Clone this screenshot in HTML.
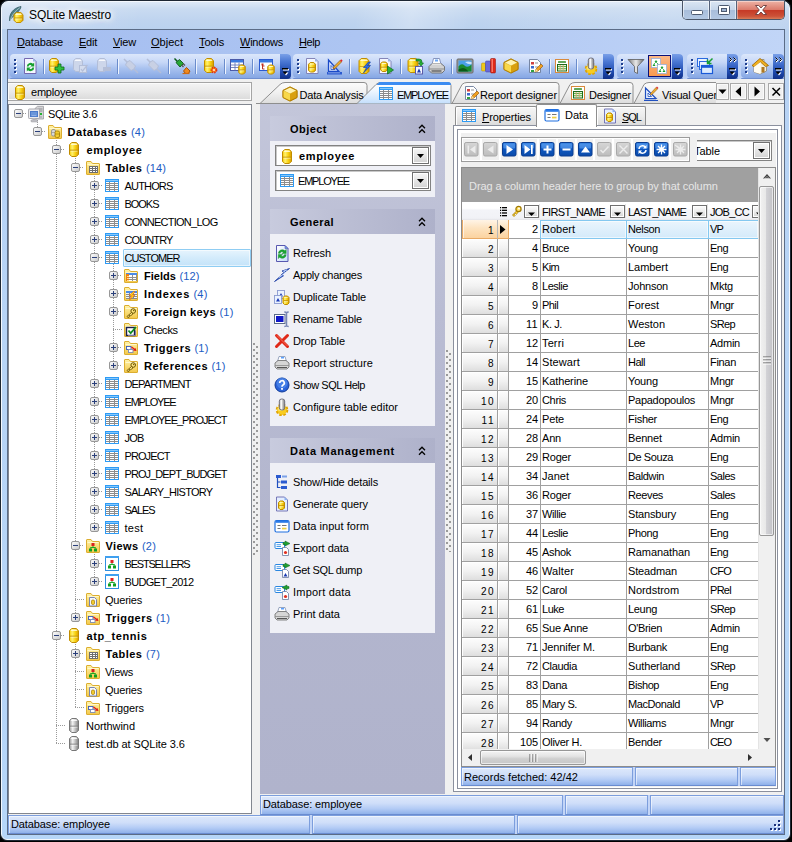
<!DOCTYPE html><html><head><meta charset="utf-8"><title>SQLite Maestro</title><style>
html,body{margin:0;padding:0}
body{width:792px;height:842px;overflow:hidden;position:relative;background:#b9d1ea;font-family:"Liberation Sans",sans-serif;font-size:11px;color:#000}
div,span,svg{position:absolute;box-sizing:border-box}
.t{white-space:nowrap;line-height:14px;height:14px;font-size:11px}
.b{font-weight:bold}
.cnt{color:#1f5fc0;font-weight:normal}
u{text-decoration:underline}

</style></head><body>
<svg width="0" height="0" style="left:0;top:0"><defs><linearGradient id="gd" x1="0" x2="1" y1="0" y2="0"><stop offset="0" stop-color="#f7cc00"/><stop offset=".3" stop-color="#fff170"/><stop offset=".65" stop-color="#f8d010"/><stop offset="1" stop-color="#d99c00"/></linearGradient><linearGradient id="gy" x1="0" x2="1" y1="0" y2="0"><stop offset="0" stop-color="#9a9a9a"/><stop offset=".35" stop-color="#f2f2f2"/><stop offset="1" stop-color="#808080"/></linearGradient><linearGradient id="fo" x1="0" x2="0" y1="0" y2="1"><stop offset="0" stop-color="#fff3a8"/><stop offset="1" stop-color="#f3c84a"/></linearGradient><linearGradient id="ex" x1="0" x2="1" y1="0" y2="1"><stop offset="0" stop-color="#ffffff"/><stop offset="1" stop-color="#c9c9c9"/></linearGradient><linearGradient id="nb" x1="0" x2="0" y1="0" y2="1"><stop offset="0" stop-color="#2f7fe0"/><stop offset=".5" stop-color="#0d56c0"/><stop offset="1" stop-color="#0a4aa8"/></linearGradient><linearGradient id="ng" x1="0" x2="0" y1="0" y2="1"><stop offset="0" stop-color="#d6d6d6"/><stop offset="1" stop-color="#bdbdbd"/></linearGradient></defs></svg>
<div style="left:0px;top:0px;width:792px;height:842px;background:#000;"></div>
<div style="left:0px;top:0px;width:791px;height:841px;background:#1d2733;border-radius:8px 8px 7px 7px;"></div>
<div style="left:1px;top:1px;width:789px;height:839px;border-radius:7px 7px 6px 6px;background:linear-gradient(180deg,#dde9f7 0px,#c9dbf1 7px,#bfd4ef 18px,#b9d1ef 30px,#b7d3f5 120px,#b6d6f8 842px);border:1px solid #f4f8fd;"></div>
<div style="left:2px;top:2px;width:787px;height:27px;border-radius:6px 6px 0 0;background:linear-gradient(100deg,rgba(255,255,255,.25) 0%,rgba(255,255,255,0) 18%,rgba(255,255,255,.0) 45%,rgba(255,255,255,.28) 52%,rgba(255,255,255,0) 60%,rgba(255,255,255,.15) 85%,rgba(255,255,255,.05) 100%);"></div>
<div style="left:7px;top:29px;width:778px;height:806px;background:#f0f0f0;border:1px solid #5b6c86;"></div>
<svg style="left:7px;top:5px" width="18" height="18" viewBox="0 0 18 18" ><path d="M2.500 16 C2 9 6 3 14 1.500 C13.500 5 10 8 6.500 11 C5 12.500 3.500 14 2.500 16z" fill="#4f8088" stroke="#28505a" stroke-width=".7"/><path d="M3 15.500 C5 10 8 6 13 2.500" stroke="#cfe4e6" stroke-width=".6" fill="none"/><path d="M9.2 7.5 H13.8 L16.0 9.7 V15.3 L13.8 17.5 H9.2 L7.0 15.3 V9.7z" fill="url(#gd)" stroke="#c08c00" stroke-width="1" stroke-linejoin="round"/><path d="M9.2 8.5 H13.8 L15.0 10.0 H8.0z" fill="#fffde0" opacity=".85"/><path d="M7.5 13.0 H15.5" stroke="#c08c00" stroke-width=".9"/><path d="M8.0 14.0 H15.0" stroke="#fffde0" stroke-width=".7" opacity=".8"/></svg>
<span class="t" style="left:29px;top:8px;font-size:12px;line-height:15px;height:15px;letter-spacing:-0.1px;text-shadow:0 0 6px #fff,0 0 6px #fff,0 0 10px #fff,0 0 12px #fff;">SQLite Maestro</span>
<div style="left:682px;top:0px;width:103px;height:20px;border:1px solid #4b5668;border-top:1px solid #6a7890;border-radius:0 0 5px 5px;background:#c5d6ea;overflow:hidden;"><div style="left:0px;top:0px;width:27px;height:19px;background:linear-gradient(180deg,#dbe6f3 0%,#c6d6ea 45%,#a9bedb 50%,#b4c9e4 100%);border-right:1px solid #55627a;box-shadow:inset 0 0 0 1px rgba(255,255,255,.55);"></div><div style="left:27px;top:0px;width:27px;height:19px;background:linear-gradient(180deg,#dbe6f3 0%,#c6d6ea 45%,#a9bedb 50%,#b4c9e4 100%);border-right:1px solid #55627a;box-shadow:inset 0 0 0 1px rgba(255,255,255,.55);"></div><div style="left:54px;top:0px;width:48px;height:19px;background:linear-gradient(180deg,#eeb3a6 0%,#dc7c6c 45%,#c63a26 50%,#cc5238 80%,#dc8a62 100%);box-shadow:inset 0 0 0 1px rgba(255,255,255,.4);"></div></div>
<svg style="left:682px;top:0px" width="103" height="20" viewBox="0 0 103 20" ><rect x="9.500" y="10.500" width="11" height="4" rx="1" fill="#fff" stroke="#4d5a70"/><rect x="36.500" y="5.500" width="11" height="9" rx="1" fill="#fff" stroke="#4d5a70"/><rect x="39.500" y="8.500" width="5" height="3" fill="#9fb4d2" stroke="#4d5a70"/><path d="M73.500 5.500 l3.200 0 l2.300 2.500 l2.300-2.500 l3.200 0 l-3.800 4.500 l3.800 4.500 l-3.200 0 l-2.300-2.500 l-2.300 2.500 l-3.200 0 l3.800-4.500z" fill="#fff" stroke="#6a3a3a" stroke-width=".9"/></svg>
<div style="left:8px;top:30px;width:776px;height:24px;background:linear-gradient(90deg,#a5bef0 0%,#adc5f2 45%,#c1d5f7 100%);"></div>
<span class="t" style="left:17px;top:35px;letter-spacing:-0.141px;font-size:11px;"><u>D</u>atabase</span>
<span class="t" style="left:79px;top:35px;letter-spacing:-0.242px;font-size:11px;"><u>E</u>dit</span>
<span class="t" style="left:113px;top:35px;letter-spacing:-0.160px;font-size:11px;"><u>V</u>iew</span>
<span class="t" style="left:151px;top:35px;letter-spacing:0.031px;font-size:11px;"><u>O</u>bject</span>
<span class="t" style="left:199px;top:35px;letter-spacing:-0.138px;font-size:11px;"><u>T</u>ools</span>
<span class="t" style="left:240px;top:35px;letter-spacing:-0.232px;font-size:11px;"><u>W</u>indows</span>
<span class="t" style="left:299px;top:35px;letter-spacing:-0.406px;font-size:11px;"><u>H</u>elp</span>
<div style="left:8px;top:54px;width:776px;height:25px;background:linear-gradient(90deg,#a5bef0 0%,#adc5f2 45%,#c1d5f7 100%);"></div>
<div style="left:10px;top:54px;width:281px;height:24px;background:linear-gradient(180deg,#dce7fb 0%,#c6d7f7 35%,#a9c2ef 60%,#86a7e4 100%);border-radius:4px 4px 4px 4px;"></div>
<div style="left:10px;top:78px;width:281px;height:1px;background:#6f8fd0;border-radius:0 0 3px 3px;"></div>
<div style="left:280px;top:54px;width:11px;height:25px;background:linear-gradient(180deg,#7aa0e8 0%,#4b78d4 30%,#1f4bb0 70%,#0f2f86 100%);border-radius:0 4px 4px 0;"></div>
<svg style="left:282px;top:68px" width="8" height="8" viewBox="0 0 8 8" ><rect x="1" y="1" width="6" height="1.500" fill="#fff"/><path d="M1.500 4.500 h5 l-2.500 3z" fill="#fff"/><rect x="0" y="0" width="6" height="1.500" fill="#000"/><path d="M.500 3.500 h5 l-2.500 3z" fill="#000"/></svg>
<svg style="left:14px;top:59px" width="3" height="16" viewBox="0 0 3 16" ><rect x="1" y="1" width="2" height="2" fill="#fff"/><rect x="0" y="0" width="2" height="2" fill="#1f3f8f"/><rect x="1" y="5" width="2" height="2" fill="#fff"/><rect x="0" y="4" width="2" height="2" fill="#1f3f8f"/><rect x="1" y="9" width="2" height="2" fill="#fff"/><rect x="0" y="8" width="2" height="2" fill="#1f3f8f"/><rect x="1" y="13" width="2" height="2" fill="#fff"/><rect x="0" y="12" width="2" height="2" fill="#1f3f8f"/></svg>
<div style="left:293px;top:54px;width:321px;height:24px;background:linear-gradient(180deg,#dce7fb 0%,#c6d7f7 35%,#a9c2ef 60%,#86a7e4 100%);border-radius:4px 4px 4px 4px;"></div>
<div style="left:293px;top:78px;width:321px;height:1px;background:#6f8fd0;border-radius:0 0 3px 3px;"></div>
<div style="left:603px;top:54px;width:11px;height:25px;background:linear-gradient(180deg,#7aa0e8 0%,#4b78d4 30%,#1f4bb0 70%,#0f2f86 100%);border-radius:0 4px 4px 0;"></div>
<svg style="left:605px;top:68px" width="8" height="8" viewBox="0 0 8 8" ><rect x="1" y="1" width="6" height="1.500" fill="#fff"/><path d="M1.500 4.500 h5 l-2.500 3z" fill="#fff"/><rect x="0" y="0" width="6" height="1.500" fill="#000"/><path d="M.500 3.500 h5 l-2.500 3z" fill="#000"/></svg>
<svg style="left:297px;top:59px" width="3" height="16" viewBox="0 0 3 16" ><rect x="1" y="1" width="2" height="2" fill="#fff"/><rect x="0" y="0" width="2" height="2" fill="#1f3f8f"/><rect x="1" y="5" width="2" height="2" fill="#fff"/><rect x="0" y="4" width="2" height="2" fill="#1f3f8f"/><rect x="1" y="9" width="2" height="2" fill="#fff"/><rect x="0" y="8" width="2" height="2" fill="#1f3f8f"/><rect x="1" y="13" width="2" height="2" fill="#fff"/><rect x="0" y="12" width="2" height="2" fill="#1f3f8f"/></svg>
<div style="left:617px;top:54px;width:66px;height:24px;background:linear-gradient(180deg,#dce7fb 0%,#c6d7f7 35%,#a9c2ef 60%,#86a7e4 100%);border-radius:4px 4px 4px 4px;"></div>
<div style="left:617px;top:78px;width:66px;height:1px;background:#6f8fd0;border-radius:0 0 3px 3px;"></div>
<div style="left:672px;top:54px;width:11px;height:25px;background:linear-gradient(180deg,#7aa0e8 0%,#4b78d4 30%,#1f4bb0 70%,#0f2f86 100%);border-radius:0 4px 4px 0;"></div>
<svg style="left:674px;top:68px" width="8" height="8" viewBox="0 0 8 8" ><rect x="1" y="1" width="6" height="1.500" fill="#fff"/><path d="M1.500 4.500 h5 l-2.500 3z" fill="#fff"/><rect x="0" y="0" width="6" height="1.500" fill="#000"/><path d="M.500 3.500 h5 l-2.500 3z" fill="#000"/></svg>
<svg style="left:621px;top:59px" width="3" height="16" viewBox="0 0 3 16" ><rect x="1" y="1" width="2" height="2" fill="#fff"/><rect x="0" y="0" width="2" height="2" fill="#1f3f8f"/><rect x="1" y="5" width="2" height="2" fill="#fff"/><rect x="0" y="4" width="2" height="2" fill="#1f3f8f"/><rect x="1" y="9" width="2" height="2" fill="#fff"/><rect x="0" y="8" width="2" height="2" fill="#1f3f8f"/><rect x="1" y="13" width="2" height="2" fill="#fff"/><rect x="0" y="12" width="2" height="2" fill="#1f3f8f"/></svg>
<div style="left:687px;top:54px;width:51px;height:24px;background:linear-gradient(180deg,#dce7fb 0%,#c6d7f7 35%,#a9c2ef 60%,#86a7e4 100%);border-radius:4px 4px 4px 4px;"></div>
<div style="left:687px;top:78px;width:51px;height:1px;background:#6f8fd0;border-radius:0 0 3px 3px;"></div>
<div style="left:727px;top:54px;width:11px;height:25px;background:linear-gradient(180deg,#7aa0e8 0%,#4b78d4 30%,#1f4bb0 70%,#0f2f86 100%);border-radius:0 4px 4px 0;"></div>
<svg style="left:729px;top:68px" width="8" height="8" viewBox="0 0 8 8" ><rect x="1" y="1" width="6" height="1.500" fill="#fff"/><path d="M1.500 4.500 h5 l-2.500 3z" fill="#fff"/><rect x="0" y="0" width="6" height="1.500" fill="#000"/><path d="M.500 3.500 h5 l-2.500 3z" fill="#000"/></svg>
<svg style="left:729px;top:57px" width="8" height="7" viewBox="0 0 8 7" ><path d="M1 1 l2 2 l-2 2 M5 1 l2 2 l-2 2" stroke="#fff" stroke-width="1.200" fill="none"/><path d="M0.500 0.500 l2 2 l-2 2 M4.500 .5 l2 2 l-2 2" stroke="#000" stroke-width="1" fill="none"/></svg>
<svg style="left:691px;top:59px" width="3" height="16" viewBox="0 0 3 16" ><rect x="1" y="1" width="2" height="2" fill="#fff"/><rect x="0" y="0" width="2" height="2" fill="#1f3f8f"/><rect x="1" y="5" width="2" height="2" fill="#fff"/><rect x="0" y="4" width="2" height="2" fill="#1f3f8f"/><rect x="1" y="9" width="2" height="2" fill="#fff"/><rect x="0" y="8" width="2" height="2" fill="#1f3f8f"/><rect x="1" y="13" width="2" height="2" fill="#fff"/><rect x="0" y="12" width="2" height="2" fill="#1f3f8f"/></svg>
<div style="left:741px;top:54px;width:43px;height:24px;background:linear-gradient(180deg,#dce7fb 0%,#c6d7f7 35%,#a9c2ef 60%,#86a7e4 100%);border-radius:4px 4px 4px 4px;"></div>
<div style="left:741px;top:78px;width:43px;height:1px;background:#6f8fd0;border-radius:0 0 3px 3px;"></div>
<div style="left:773px;top:54px;width:11px;height:25px;background:linear-gradient(180deg,#7aa0e8 0%,#4b78d4 30%,#1f4bb0 70%,#0f2f86 100%);border-radius:0 4px 4px 0;"></div>
<svg style="left:775px;top:68px" width="8" height="8" viewBox="0 0 8 8" ><rect x="1" y="1" width="6" height="1.500" fill="#fff"/><path d="M1.500 4.500 h5 l-2.500 3z" fill="#fff"/><rect x="0" y="0" width="6" height="1.500" fill="#000"/><path d="M.500 3.500 h5 l-2.500 3z" fill="#000"/></svg>
<svg style="left:775px;top:57px" width="8" height="7" viewBox="0 0 8 7" ><path d="M1 1 l2 2 l-2 2 M5 1 l2 2 l-2 2" stroke="#fff" stroke-width="1.200" fill="none"/><path d="M0.500 0.500 l2 2 l-2 2 M4.500 .5 l2 2 l-2 2" stroke="#000" stroke-width="1" fill="none"/></svg>
<svg style="left:745px;top:59px" width="3" height="16" viewBox="0 0 3 16" ><rect x="1" y="1" width="2" height="2" fill="#fff"/><rect x="0" y="0" width="2" height="2" fill="#1f3f8f"/><rect x="1" y="5" width="2" height="2" fill="#fff"/><rect x="0" y="4" width="2" height="2" fill="#1f3f8f"/><rect x="1" y="9" width="2" height="2" fill="#fff"/><rect x="0" y="8" width="2" height="2" fill="#1f3f8f"/><rect x="1" y="13" width="2" height="2" fill="#fff"/><rect x="0" y="12" width="2" height="2" fill="#1f3f8f"/></svg>
<div style="left:43px;top:59px;width:1px;height:15px;background:#6a8ccc;"></div>
<div style="left:44px;top:59px;width:1px;height:15px;background:#eef4fe;"></div>
<div style="left:117px;top:59px;width:1px;height:15px;background:#6a8ccc;"></div>
<div style="left:118px;top:59px;width:1px;height:15px;background:#eef4fe;"></div>
<div style="left:168px;top:59px;width:1px;height:15px;background:#6a8ccc;"></div>
<div style="left:169px;top:59px;width:1px;height:15px;background:#eef4fe;"></div>
<div style="left:195px;top:59px;width:1px;height:15px;background:#6a8ccc;"></div>
<div style="left:196px;top:59px;width:1px;height:15px;background:#eef4fe;"></div>
<div style="left:224px;top:59px;width:1px;height:15px;background:#6a8ccc;"></div>
<div style="left:225px;top:59px;width:1px;height:15px;background:#eef4fe;"></div>
<div style="left:252px;top:59px;width:1px;height:15px;background:#6a8ccc;"></div>
<div style="left:253px;top:59px;width:1px;height:15px;background:#eef4fe;"></div>
<div style="left:349px;top:59px;width:1px;height:15px;background:#6a8ccc;"></div>
<div style="left:350px;top:59px;width:1px;height:15px;background:#eef4fe;"></div>
<div style="left:400px;top:59px;width:1px;height:15px;background:#6a8ccc;"></div>
<div style="left:401px;top:59px;width:1px;height:15px;background:#eef4fe;"></div>
<div style="left:451px;top:59px;width:1px;height:15px;background:#6a8ccc;"></div>
<div style="left:452px;top:59px;width:1px;height:15px;background:#eef4fe;"></div>
<div style="left:549px;top:59px;width:1px;height:15px;background:#6a8ccc;"></div>
<div style="left:550px;top:59px;width:1px;height:15px;background:#eef4fe;"></div>
<div style="left:576px;top:59px;width:1px;height:15px;background:#6a8ccc;"></div>
<div style="left:577px;top:59px;width:1px;height:15px;background:#eef4fe;"></div>
<svg style="left:22px;top:57px" width="18" height="18" viewBox="0 0 18 18" ><path d="M2.500 1.500 h8.500 l3 3 v12 h-11.500z" fill="#f4f6ff" stroke="#6a5aa8" stroke-width=".9"/><path d="M11 1.500 v3 h3z" fill="#9ab4e8"/><path d="M4.800 9.500 a3.700 3.700 0 0 1 6.200-2.700 l1.200-1.200 v4 h-4 l1.400-1.400 a2 2 0 0 0 -3 1.300z" fill="#18a030"/><path d="M12.200 10.500 a3.700 3.700 0 0 1 -6.200 2.700 l-1.200 1.200 v-4 h4 l-1.400 1.400 a2 2 0 0 0 3 -1.300z" fill="#18a030"/></svg>
<svg style="left:47px;top:57px" width="18" height="18" viewBox="0 0 18 18" ><path d="M4.7 1.5 H9.3 L11.5 3.7 V13.3 L9.3 15.5 H4.7 L2.5 13.3 V3.7z" fill="url(#gd)" stroke="#c08c00" stroke-width="1" stroke-linejoin="round"/><path d="M4.7 2.5 H9.3 L10.5 4.0 H3.5z" fill="#fffde0" opacity=".85"/><path d="M3.0 9.200000000000001 H11.0" stroke="#c08c00" stroke-width=".9"/><path d="M3.5 10.200000000000001 H10.5" stroke="#fffde0" stroke-width=".7" opacity=".8"/><path d="M9 11 h3 v-3 h3 v3 h3 v3 h-3 v3 h-3 v-3 h-3z" fill="#30c040" stroke="#0a6a18" stroke-width=".8" transform="translate(-1,-1)"/></svg>
<svg style="left:71px;top:57px" width="19" height="18" viewBox="0 0 19 18" ><path d="M4.7 1.5 H9.3 L11.5 3.7 V12.3 L9.3 14.5 H4.7 L2.5 12.3 V3.7z" fill="#cdd6ea" stroke="#b3bed8" stroke-width="1" stroke-linejoin="round"/><path d="M4.7 2.5 H9.3 L10.5 4.0 H3.5z" fill="#ffffff" opacity=".85"/><rect x="8.500" y="8.500" width="7" height="7" fill="#d4dcee" stroke="#b3bed8"/><path d="M10 12 l1.500 2 l5-6" stroke="#b3bed8" stroke-width="1.200" fill="none"/></svg>
<svg style="left:95px;top:57px" width="18" height="18" viewBox="0 0 18 18" ><path d="M4.7 1.5 H9.3 L11.5 3.7 V12.3 L9.3 14.5 H4.7 L2.5 12.3 V3.7z" fill="#cdd6ea" stroke="#b3bed8" stroke-width="1" stroke-linejoin="round"/><path d="M4.7 2.5 H9.3 L10.5 4.0 H3.5z" fill="#ffffff" opacity=".85"/><rect x="8.500" y="10.500" width="7" height="3" fill="#b4bed8" stroke="#b3bed8"/></svg>
<svg style="left:122px;top:57px" width="18" height="18" viewBox="0 0 18 18" ><path d="M2 2 l4 4 M16 16 l-4-4" stroke="#b3bed8" stroke-width="1.500"/><path d="M5 5 l3-1.500 l5.500 5.500 l-1.500 3 l-3 1.500 l-5.500-5.500z" fill="#c8d0e4" stroke="#b3bed8" stroke-width="1" transform="rotate(0)"/></svg>
<svg style="left:145px;top:57px" width="18" height="18" viewBox="0 0 18 18" ><path d="M2 2 l4 4 M16 16 l-4-4" stroke="#b3bed8" stroke-width="1.500"/><path d="M5 5 l3-1.500 l5.500 5.500 l-1.500 3 l-3 1.500 l-5.500-5.500z" fill="#c8d0e4" stroke="#b3bed8" stroke-width="1" transform="rotate(0)"/></svg>
<svg style="left:173px;top:57px" width="18" height="18" viewBox="0 0 18 18" ><path d="M1.500 1.500 l3 3" stroke="#0a5a18" stroke-width="1.500"/><path d="M3 5.500 l3.500-3 l4 4 l-3.500 3.500z" fill="#28a838" stroke="#0a5a18" stroke-width=".9"/><path d="M8.500 8 l2 2 M10 6.500 l2 2" stroke="#555" stroke-width="1.300"/><path d="M10.500 14 l3-3.500 l3.500 3.500 l-1.500 2.500 h-3z" fill="#f08a20" stroke="#a04a00" stroke-width=".9"/><path d="M9.500 16.500 h7" stroke="#d06a10" stroke-width="1.200"/></svg>
<svg style="left:201px;top:57px" width="18" height="18" viewBox="0 0 18 18" ><path d="M5.7 1.5 H10.3 L12.5 3.7 V13.3 L10.3 15.5 H5.7 L3.5 13.3 V3.7z" fill="url(#gd)" stroke="#c08c00" stroke-width="1" stroke-linejoin="round"/><path d="M5.7 2.5 H10.3 L11.5 4.0 H4.5z" fill="#fffde0" opacity=".85"/><path d="M4.0 9.200000000000001 H12.0" stroke="#c08c00" stroke-width=".9"/><path d="M4.5 10.200000000000001 H11.5" stroke="#fffde0" stroke-width=".7" opacity=".8"/><circle cx="13" cy="13" r="2.600" fill="#ff7a20" stroke="#e03010" stroke-width="1.600" stroke-dasharray="1.400 1"/><circle cx="13" cy="13" r="1" fill="#fff3d0"/></svg>
<svg style="left:229px;top:57px" width="18" height="18" viewBox="0 0 18 18" ><rect x="1.500" y="2.500" width="13" height="11" fill="#fff" stroke="#4a5aa8"/><rect x="2" y="3" width="12" height="2.500" fill="#3a7ae0"/><path d="M2 8 h12 M2 10.500 h12 M6 5.500 v8 M10 5.500 v8" stroke="#6a7ab8" stroke-width=".9"/><path d="M11.375 8 H14.625 L16.25 9.625 V15.375 L14.625 17 H11.375 L9.75 15.375 V9.625z" fill="url(#gd)" stroke="#c08c00" stroke-width="1" stroke-linejoin="round"/><path d="M11.375 9 H14.625 L15.25 9.925 H10.75z" fill="#fffde0" opacity=".85"/><path d="M10.25 12.95 H15.75" stroke="#c08c00" stroke-width=".9"/><path d="M10.75 13.95 H15.25" stroke="#fffde0" stroke-width=".7" opacity=".8"/></svg>
<svg style="left:258px;top:57px" width="18" height="18" viewBox="0 0 18 18" ><rect x="1.500" y="2.500" width="13" height="11" fill="#fff" stroke="#2a5ad0"/><rect x="2" y="3" width="12" height="2.500" fill="#3a7ae0"/><path d="M4.500 7 v5 h2 M4.500 9 h2" stroke="#c03020" stroke-width="1" fill="none"/><rect x="3.500" y="6.500" width="2" height="2" fill="#c03020"/><path d="M11.375 8 H14.625 L16.25 9.625 V15.375 L14.625 17 H11.375 L9.75 15.375 V9.625z" fill="url(#gd)" stroke="#c08c00" stroke-width="1" stroke-linejoin="round"/><path d="M11.375 9 H14.625 L15.25 9.925 H10.75z" fill="#fffde0" opacity=".85"/><path d="M10.25 12.95 H15.75" stroke="#c08c00" stroke-width=".9"/><path d="M10.75 13.95 H15.25" stroke="#fffde0" stroke-width=".7" opacity=".8"/></svg>
<svg style="left:304px;top:57px" width="18" height="18" viewBox="0 0 18 18" ><path d="M2.500 1.500 h8.500 l3 3 v12 h-11.500z" fill="#f4f6ff" stroke="#7a7ab0" stroke-width=".9"/><path d="M11 1.500 v3 h3z" fill="#9ab4e8"/><path d="M6.25 5.5 H9.75 L11.5 7.25 V13.25 L9.75 15.0 H6.25 L4.5 13.25 V7.25z" fill="url(#gd)" stroke="#c08c00" stroke-width="1" stroke-linejoin="round"/><path d="M6.25 6.5 H9.75 L10.5 7.55 H5.5z" fill="#fffde0" opacity=".85"/><path d="M5.0 10.725000000000001 H11.0" stroke="#c08c00" stroke-width=".9"/><path d="M5.5 11.725000000000001 H10.5" stroke="#fffde0" stroke-width=".7" opacity=".8"/></svg>
<svg style="left:326px;top:57px" width="18" height="18" viewBox="0 0 18 18" ><path d="M2.500 14.500 L2.500 3 L13 14.500z" fill="#dfe8ff" stroke="#1a4ac8" stroke-width="1.300"/><path d="M5 12.500 L5 8.500 L9 12.500z" fill="#fff" stroke="#1a4ac8" stroke-width=".8"/><rect x="1" y="15" width="15" height="2.500" fill="#2a5ad0"/><path d="M3 15 v1.500 M5 15 v1.500 M7 15 v1.500 M9 15 v1.500 M11 15 v1.500 M13 15 v1.500" stroke="#fff" stroke-width=".6"/><path d="M7.500 10 L14 3.500 L15.500 5 L9 11.500 L7 12z" fill="#f0b030" stroke="#7a4000" stroke-width=".6"/><path d="M14 3.500 l1.200-1.200 l1.500 1.500 l-1.200 1.200z" fill="#e02828"/></svg>
<svg style="left:356px;top:57px" width="18" height="18" viewBox="0 0 18 18" ><path d="M5.2 1.5 H10.8 L13.0 3.7 V14.3 L10.8 16.5 H5.2 L3.0 14.3 V3.7z" fill="url(#gd)" stroke="#c08c00" stroke-width="1" stroke-linejoin="round"/><path d="M5.2 2.5 H10.8 L12.0 4.0 H4.0z" fill="#fffde0" opacity=".85"/><path d="M3.5 9.75 H12.5" stroke="#c08c00" stroke-width=".9"/><path d="M4.0 10.75 H12.0" stroke="#fffde0" stroke-width=".7" opacity=".8"/><path d="M12.500 5 l-5 5.500 h3 l-3 5.500 l7-7.500 h-3 l3-3.500z" fill="#2a6ae8" stroke="#0a3aa0" stroke-width=".6"/></svg>
<svg style="left:377px;top:57px" width="18" height="18" viewBox="0 0 18 18" ><path d="M2.500 1.500 h8.500 l3 3 v12 h-11.500z" fill="#f4f6ff" stroke="#7a7ab0" stroke-width=".9"/><path d="M11 1.500 v3 h3z" fill="#9ab4e8"/><path d="M5.25 5 H8.75 L10.5 6.75 V12.75 L8.75 14.5 H5.25 L3.5 12.75 V6.75z" fill="url(#gd)" stroke="#c08c00" stroke-width="1" stroke-linejoin="round"/><path d="M5.25 6 H8.75 L9.5 7.05 H4.5z" fill="#fffde0" opacity=".85"/><path d="M4.0 10.225000000000001 H10.0" stroke="#c08c00" stroke-width=".9"/><path d="M4.5 11.225000000000001 H9.5" stroke="#fffde0" stroke-width=".7" opacity=".8"/><path d="M10.500 9 v8 l6-4z" fill="#28b038" stroke="#0a6a18" stroke-width=".7"/></svg>
<svg style="left:406px;top:57px" width="18" height="18" viewBox="0 0 18 18" ><path d="M4.2 1.5 H9.8 L12.0 3.7 V13.3 L9.8 15.5 H4.2 L2.0 13.3 V3.7z" fill="url(#gd)" stroke="#c08c00" stroke-width="1" stroke-linejoin="round"/><path d="M4.2 2.5 H9.8 L11.0 4.0 H3.0z" fill="#fffde0" opacity=".85"/><path d="M2.5 9.200000000000001 H11.5" stroke="#c08c00" stroke-width=".9"/><path d="M3.0 10.200000000000001 H11.0" stroke="#fffde0" stroke-width=".7" opacity=".8"/><path d="M10 2 h3 q3 0 3 3 v1 h1.500 l-2.500 3 l-2.500-3 h1.500 v-1 q0-1 -1-1 h-3z" fill="#28b038" stroke="#0a6a18" stroke-width=".6"/><rect x="9.500" y="9.500" width="7" height="7.500" fill="#f4f6ff" stroke="#5a5aa8"/><path d="M11 15.500 l2-4 l2 4z" fill="#1a3ab0"/></svg>
<svg style="left:428px;top:57px" width="18" height="18" viewBox="0 0 18 18" ><path d="M5.500 1.500 h6 l1.500 6 h-9z" fill="#fff" stroke="#7a8ab8" stroke-width=".9"/><rect x="7" y="2.500" width="3" height="2" fill="#6aa8f8"/><path d="M1 9.500 l3-3 h9 l3.500 3 v4 l-2.500 2.500 h-10.500 l-2.500-2.500z" fill="#d2d2d2" stroke="#6a6a6a" stroke-width=".9"/><path d="M1 12 h15.500" stroke="#8a8a8a"/><path d="M3.500 14 h10" stroke="#4a4a4a" stroke-width="1.200"/><path d="M4 7 h9" stroke="#f4f4f4" stroke-width="1"/></svg>
<svg style="left:456px;top:57px" width="18" height="18" viewBox="0 0 18 18" ><rect x="1" y="2" width="16" height="14" rx="1" fill="#9a9a9a" stroke="#6a6a6a"/><rect x="2.500" y="3.500" width="13" height="11" fill="#4aa0e8"/><path d="M2.500 14.500 v-5 q3-4 6-1 q3 3 7-1 v7z" fill="#1a8a30"/><path d="M2.500 14.500 v-2 q5-3 8 0 l2 2z" fill="#0a5a18"/><path d="M9 5 q3-1 6.500 0 v2 q-3 1-6.500-2z" fill="#e8f4ff" opacity=".8"/></svg>
<svg style="left:480px;top:57px" width="18" height="18" viewBox="0 0 18 18" ><rect x="1.500" y="6" width="4" height="8" rx="1" fill="#f0c818" stroke="#b08800" stroke-width=".5"/><rect x="5.500" y="4" width="5" height="11" rx="1" fill="#6a6ad8" stroke="#3a3aa0" stroke-width=".5"/><rect x="10.500" y="1.500" width="5" height="14.500" rx="1" fill="#e02818" stroke="#900800" stroke-width=".5"/><rect x="11.500" y="2" width="1.500" height="13" fill="#f87868"/></svg>
<svg style="left:503px;top:58px" width="16" height="16" viewBox="0 0 16 16" ><path d="M8 1 L15 4.500 L15 11.500 L8 15 L1 11.500 L1 4.500z" fill="#f2c21a" stroke="#b07c00" stroke-width=".9"/><path d="M8 1 L15 4.500 L8 8 L1 4.500z" fill="#fff3b0" stroke="#c89a10" stroke-width=".6"/><path d="M8 8 L8 15 L1 11.500 L1 4.500z" fill="#f8d84a"/><path d="M8 8 L8 15 L15 11.500 L15 4.500z" fill="#d9a010"/><path d="M8 1 L15 4.500 L15 11.500 L8 15 L1 11.500 L1 4.500z" fill="none" stroke="#b07c00" stroke-width=".9"/></svg>
<svg style="left:527px;top:58px" width="17" height="16" viewBox="0 0 17 16" ><path d="M2.500 1.500 h8 l3 3 v10 h-11z" fill="#fff" stroke="#6a7a9a" stroke-width=".9"/><rect x="4" y="4" width="3" height="2.500" fill="#d04040"/><rect x="4" y="8" width="3" height="2.500" fill="#3a6ad0"/><rect x="4" y="12" width="3" height="2" fill="#30a040"/><path d="M8 5 h3 M8 9 h3" stroke="#888" stroke-width=".9"/><path d="M8 14 l1-3 l5-5 l2 2 l-5 5z" fill="#f0a020" stroke="#905000" stroke-width=".6"/><path d="M8 14 l1-3 l2 2z" fill="#f8e0a0"/></svg>
<svg style="left:554px;top:58px" width="16" height="16" viewBox="0 0 16 16" ><rect x="1.500" y="1.500" width="13" height="13" fill="#fff" stroke="#d98a3c"/><rect x="4" y="3.200" width="8" height="1.600" rx=".5" fill="#2e8a24"/><rect x="3.500" y="6.500" width="9" height="6.500" fill="#e4f6dc" stroke="#1f6a1c"/><path d="M4 8.500 h8 M4 10.700 h8" stroke="#58b048" stroke-width="1"/><path d="M6.200 7 v5.500 M9.200 7 v5.500" stroke="#e0a070" stroke-width=".9"/></svg>
<svg style="left:582px;top:57px" width="18" height="18" viewBox="0 0 18 18" ><circle cx="9" cy="12" r="4.800" fill="#f4c010" stroke="#e0a400" stroke-width="3" stroke-dasharray="2.300 1.480"/><circle cx="9" cy="12" r="4.600" fill="#f8cc20"/><ellipse cx="7.500" cy="11" rx="3" ry="2" fill="#ffe870" opacity=".8"/><rect x="6.300" y="1" width="5.400" height="11" rx="2.300" fill="url(#gy)" stroke="#6a6a78" stroke-width=".9"/><rect x="7.600" y="2" width="1.300" height="9" fill="#fafafa" opacity=".9"/></svg>
<svg style="left:627px;top:57px" width="18" height="18" viewBox="0 0 18 18" ><defs><linearGradient id="fn" x1="0" x2="1"><stop offset="0" stop-color="#7a7a7a"/><stop offset=".5" stop-color="#e8e8e8"/><stop offset="1" stop-color="#6a6a6a"/></linearGradient></defs><path d="M1 2.500 h16 l-6.500 7 v7 l-3-1.500 v-5.500z" fill="url(#fn)" stroke="#5a5a5a" stroke-width=".8"/></svg>
<div style="left:648px;top:55px;width:23px;height:22px;background:linear-gradient(180deg,#fbb888 0%,#f9a868 50%,#f79a50 100%);border:1px solid #0a1078;"></div>
<svg style="left:651px;top:58px" width="18" height="18" viewBox="0 0 18 18" ><rect x="0.5" y="0.5" width="9" height="9" fill="#fff" stroke="#9ab0d8" stroke-width=".8"/><path d="M5 2 l1.500 2 h-3z" fill="#18a030"/><path d="M3 5.5 l1.500 2.500 h-3z M7 5.5 l1.500 2.500 h-3z" fill="#18a030"/><path d="M5 4 l-2 2 M5 4 l2 2" stroke="#18a030" stroke-width=".7"/><rect x="6.5" y="6.5" width="9" height="9" fill="#fff" stroke="#9ab0d8" stroke-width=".8"/><path d="M11 8 l1.500 2 h-3z" fill="#18a030"/><path d="M9 11.5 l1.500 2.500 h-3z M13 11.5 l1.500 2.500 h-3z" fill="#18a030"/><path d="M11 10 l-2 2 M11 10 l2 2" stroke="#18a030" stroke-width=".7"/></svg>
<svg style="left:696px;top:57px" width="19" height="18" viewBox="0 0 19 18" ><rect x="1.500" y="1.500" width="10" height="8" fill="#eaf2ff" stroke="#2a6ae0"/><rect x="3.500" y="4.500" width="10" height="8" fill="#eaf2ff" stroke="#2a6ae0"/><rect x="5.500" y="8.500" width="11" height="8" fill="#dceafe" stroke="#1a5ad8" stroke-width="1.200"/><rect x="6" y="9" width="10" height="1.800" fill="#1a5ad8"/><path d="M16.500 1.500 l-4.500 4.500 M11.500 2.500 v4 h4" stroke="#18a030" stroke-width="1.500" fill="none"/></svg>
<svg style="left:751px;top:57px" width="19" height="18" viewBox="0 0 19 18" ><path d="M9 2 L1.500 8.500 L3 10 L3 15 L9 17 L15.500 14 L15.500 9.500 L17 8.500 L13 4.500 L13 2.500 L11 2.500 L11 3.500z" fill="#f4f0e0" stroke="#8a7a5a" stroke-width=".7"/><path d="M9 1.500 L1 8.500 L3.500 10 L9.500 5 L14.500 9.500 L17.500 8.500z" fill="#f0b020" stroke="#a06800" stroke-width=".8"/><path d="M9.500 5 L3 10 L3 15 L9.500 17z" fill="#fffcf0"/><rect x="10.500" y="10" width="3" height="5.500" fill="#b07820"/></svg>
<div style="left:8px;top:82px;width:244px;height:19px;border:1px solid #a5a5a5;border-left:none;background:linear-gradient(180deg,#f4f4f4 0%,#e9e9e9 50%,#dadada 100%);box-shadow:inset 0 0 0 1px #fbfbfb;"></div>
<svg style="left:12px;top:84px" width="16" height="17" viewBox="0 0 16 17" ><path d="M5.7 1.5 H10.3 L12.5 3.7 V13.3 L10.3 15.5 H5.7 L3.5 13.3 V3.7z" fill="url(#gd)" stroke="#c08c00" stroke-width="1" stroke-linejoin="round"/><path d="M5.7 2.5 H10.3 L11.5 4.0 H4.5z" fill="#fffde0" opacity=".85"/><path d="M4.0 9.200000000000001 H12.0" stroke="#c08c00" stroke-width=".9"/><path d="M4.5 10.200000000000001 H11.5" stroke="#fffde0" stroke-width=".7" opacity=".8"/></svg>
<span class="t" style="left:31px;top:85px;letter-spacing:-0.215px;font-size:11px;">employee</span>
<div style="left:8px;top:815px;width:776px;height:19px;background:#c3d5f7;"></div>
<div style="left:8px;top:815px;width:302px;height:19px;background:linear-gradient(180deg,#dde8fb 0%,#cfdef9 40%,#b3cbf5 70%,#8fb1ea 100%);border:1px solid #7c9edd;border-bottom-color:#6a8cd0;box-shadow:inset 1px 1px 0 rgba(255,255,255,.55);"></div>
<div style="left:312px;top:815px;width:203px;height:19px;background:linear-gradient(180deg,#dde8fb 0%,#cfdef9 40%,#b3cbf5 70%,#8fb1ea 100%);border:1px solid #7c9edd;border-bottom-color:#6a8cd0;box-shadow:inset 1px 1px 0 rgba(255,255,255,.55);"></div>
<div style="left:517px;top:815px;width:267px;height:19px;background:linear-gradient(180deg,#dde8fb 0%,#cfdef9 40%,#b3cbf5 70%,#8fb1ea 100%);border:1px solid #7c9edd;border-bottom-color:#6a8cd0;box-shadow:inset 1px 1px 0 rgba(255,255,255,.55);"></div>
<span class="t" style="left:11px;top:817px;letter-spacing:-0.109px;font-size:11px;">Database: employee</span>
<svg style="left:770px;top:820px" width="12" height="12" viewBox="0 0 12 12" ><rect x="9" y="1" width="2" height="2" fill="#fff"/><rect x="8" y="0" width="2" height="2" fill="#1a2f7a"/><rect x="5" y="5" width="2" height="2" fill="#fff"/><rect x="4" y="4" width="2" height="2" fill="#1a2f7a"/><rect x="9" y="5" width="2" height="2" fill="#fff"/><rect x="8" y="4" width="2" height="2" fill="#1a2f7a"/><rect x="1" y="9" width="2" height="2" fill="#fff"/><rect x="0" y="8" width="2" height="2" fill="#1a2f7a"/><rect x="5" y="9" width="2" height="2" fill="#fff"/><rect x="4" y="8" width="2" height="2" fill="#1a2f7a"/><rect x="9" y="9" width="2" height="2" fill="#fff"/><rect x="8" y="8" width="2" height="2" fill="#1a2f7a"/></svg>
<div style="left:8px;top:104px;width:244px;height:710px;background:#fff;border:1px solid #828790;"></div>
<div style="left:23px;top:113px;width:4px;height:1px;background:repeating-linear-gradient(90deg,#9a9a9a 0 1px,transparent 1px 2px);"></div>
<div style="left:37px;top:120px;width:1px;height:11px;background:repeating-linear-gradient(180deg,#9a9a9a 0 1px,transparent 1px 2px);"></div>
<div style="left:42px;top:131px;width:4px;height:1px;background:repeating-linear-gradient(90deg,#9a9a9a 0 1px,transparent 1px 2px);"></div>
<div style="left:56px;top:138px;width:1px;height:605px;background:repeating-linear-gradient(180deg,#9a9a9a 0 1px,transparent 1px 2px);"></div>
<div style="left:61px;top:149px;width:4px;height:1px;background:repeating-linear-gradient(90deg,#9a9a9a 0 1px,transparent 1px 2px);"></div>
<div style="left:75px;top:156px;width:1px;height:461px;background:repeating-linear-gradient(180deg,#9a9a9a 0 1px,transparent 1px 2px);"></div>
<div style="left:80px;top:167px;width:4px;height:1px;background:repeating-linear-gradient(90deg,#9a9a9a 0 1px,transparent 1px 2px);"></div>
<div style="left:94px;top:174px;width:1px;height:353px;background:repeating-linear-gradient(180deg,#9a9a9a 0 1px,transparent 1px 2px);"></div>
<div style="left:99px;top:185px;width:4px;height:1px;background:repeating-linear-gradient(90deg,#9a9a9a 0 1px,transparent 1px 2px);"></div>
<div style="left:99px;top:203px;width:4px;height:1px;background:repeating-linear-gradient(90deg,#9a9a9a 0 1px,transparent 1px 2px);"></div>
<div style="left:99px;top:221px;width:4px;height:1px;background:repeating-linear-gradient(90deg,#9a9a9a 0 1px,transparent 1px 2px);"></div>
<div style="left:99px;top:239px;width:4px;height:1px;background:repeating-linear-gradient(90deg,#9a9a9a 0 1px,transparent 1px 2px);"></div>
<div style="left:99px;top:257px;width:4px;height:1px;background:repeating-linear-gradient(90deg,#9a9a9a 0 1px,transparent 1px 2px);"></div>
<div style="left:113px;top:264px;width:1px;height:101px;background:repeating-linear-gradient(180deg,#9a9a9a 0 1px,transparent 1px 2px);"></div>
<div style="left:118px;top:275px;width:4px;height:1px;background:repeating-linear-gradient(90deg,#9a9a9a 0 1px,transparent 1px 2px);"></div>
<div style="left:118px;top:293px;width:4px;height:1px;background:repeating-linear-gradient(90deg,#9a9a9a 0 1px,transparent 1px 2px);"></div>
<div style="left:118px;top:311px;width:4px;height:1px;background:repeating-linear-gradient(90deg,#9a9a9a 0 1px,transparent 1px 2px);"></div>
<div style="left:113px;top:329px;width:9px;height:1px;background:repeating-linear-gradient(90deg,#9a9a9a 0 1px,transparent 1px 2px);"></div>
<div style="left:118px;top:347px;width:4px;height:1px;background:repeating-linear-gradient(90deg,#9a9a9a 0 1px,transparent 1px 2px);"></div>
<div style="left:118px;top:365px;width:4px;height:1px;background:repeating-linear-gradient(90deg,#9a9a9a 0 1px,transparent 1px 2px);"></div>
<div style="left:99px;top:383px;width:4px;height:1px;background:repeating-linear-gradient(90deg,#9a9a9a 0 1px,transparent 1px 2px);"></div>
<div style="left:99px;top:401px;width:4px;height:1px;background:repeating-linear-gradient(90deg,#9a9a9a 0 1px,transparent 1px 2px);"></div>
<div style="left:99px;top:419px;width:4px;height:1px;background:repeating-linear-gradient(90deg,#9a9a9a 0 1px,transparent 1px 2px);"></div>
<div style="left:99px;top:437px;width:4px;height:1px;background:repeating-linear-gradient(90deg,#9a9a9a 0 1px,transparent 1px 2px);"></div>
<div style="left:99px;top:455px;width:4px;height:1px;background:repeating-linear-gradient(90deg,#9a9a9a 0 1px,transparent 1px 2px);"></div>
<div style="left:99px;top:473px;width:4px;height:1px;background:repeating-linear-gradient(90deg,#9a9a9a 0 1px,transparent 1px 2px);"></div>
<div style="left:99px;top:491px;width:4px;height:1px;background:repeating-linear-gradient(90deg,#9a9a9a 0 1px,transparent 1px 2px);"></div>
<div style="left:99px;top:509px;width:4px;height:1px;background:repeating-linear-gradient(90deg,#9a9a9a 0 1px,transparent 1px 2px);"></div>
<div style="left:99px;top:527px;width:4px;height:1px;background:repeating-linear-gradient(90deg,#9a9a9a 0 1px,transparent 1px 2px);"></div>
<div style="left:80px;top:545px;width:4px;height:1px;background:repeating-linear-gradient(90deg,#9a9a9a 0 1px,transparent 1px 2px);"></div>
<div style="left:94px;top:552px;width:1px;height:29px;background:repeating-linear-gradient(180deg,#9a9a9a 0 1px,transparent 1px 2px);"></div>
<div style="left:99px;top:563px;width:4px;height:1px;background:repeating-linear-gradient(90deg,#9a9a9a 0 1px,transparent 1px 2px);"></div>
<div style="left:99px;top:581px;width:4px;height:1px;background:repeating-linear-gradient(90deg,#9a9a9a 0 1px,transparent 1px 2px);"></div>
<div style="left:75px;top:599px;width:9px;height:1px;background:repeating-linear-gradient(90deg,#9a9a9a 0 1px,transparent 1px 2px);"></div>
<div style="left:80px;top:617px;width:4px;height:1px;background:repeating-linear-gradient(90deg,#9a9a9a 0 1px,transparent 1px 2px);"></div>
<div style="left:61px;top:635px;width:4px;height:1px;background:repeating-linear-gradient(90deg,#9a9a9a 0 1px,transparent 1px 2px);"></div>
<div style="left:75px;top:642px;width:1px;height:65px;background:repeating-linear-gradient(180deg,#9a9a9a 0 1px,transparent 1px 2px);"></div>
<div style="left:80px;top:653px;width:4px;height:1px;background:repeating-linear-gradient(90deg,#9a9a9a 0 1px,transparent 1px 2px);"></div>
<div style="left:75px;top:671px;width:9px;height:1px;background:repeating-linear-gradient(90deg,#9a9a9a 0 1px,transparent 1px 2px);"></div>
<div style="left:75px;top:689px;width:9px;height:1px;background:repeating-linear-gradient(90deg,#9a9a9a 0 1px,transparent 1px 2px);"></div>
<div style="left:75px;top:707px;width:9px;height:1px;background:repeating-linear-gradient(90deg,#9a9a9a 0 1px,transparent 1px 2px);"></div>
<div style="left:56px;top:725px;width:9px;height:1px;background:repeating-linear-gradient(90deg,#9a9a9a 0 1px,transparent 1px 2px);"></div>
<div style="left:56px;top:743px;width:9px;height:1px;background:repeating-linear-gradient(90deg,#9a9a9a 0 1px,transparent 1px 2px);"></div>
<div style="left:123px;top:249px;width:128px;height:18px;border:1px solid #8fcdf3;border-radius:1px;background:linear-gradient(180deg,#e6f4fd 0%,#d3ebfb 50%,#c4e3f9 100%);box-shadow:inset 0 0 0 1px rgba(255,255,255,.55);"></div>
<svg style="left:14px;top:109px" width="9" height="9" viewBox="0 0 9 9" ><rect x=".5" y=".5" width="8" height="8" rx="1.500" fill="url(#ex)" stroke="#979797"/><rect x="2" y="4" width="5" height="1" fill="#2a3f7a"/></svg>
<svg style="left:28px;top:105px" width="16" height="18" viewBox="0 0 16 18" ><path d="M7 3.500 L9.500 1.300 H15.500 V14 H7z" fill="#d4d4d6" stroke="#9a9aa0" stroke-width=".8"/><rect x="10.500" y="3.500" width="4" height="1" fill="#8c8c92"/><rect x="10.500" y="5.500" width="4" height="1" fill="#8c8c92"/><rect x="12" y="8" width="2" height="2" fill="#22b030"/><rect x="12" y="11" width="2" height="2" fill="#b8b8c0"/><rect x=".5" y="4" width="11" height="9.500" rx=".8" fill="#ececee" stroke="#a4a4aa" stroke-width=".9"/><rect x="2" y="6" width="8" height="6" fill="#4a7aca"/><rect x="3" y="7" width="6" height="3.500" fill="#6a96da"/><rect x="3.500" y="10.300" width="5" height=".8" fill="#a8c4ee"/><rect x="4.500" y="13.500" width="3" height="1.800" fill="#c4c4c8"/><rect x="3" y="15" width="6.500" height="1.800" rx=".8" fill="#d8d8dc" stroke="#8e8e94" stroke-width=".7"/></svg>
<span class="t" style="left:48px;top:107px;letter-spacing:-0.303px;">SQLite 3.6</span>
<svg style="left:33px;top:127px" width="9" height="9" viewBox="0 0 9 9" ><rect x=".5" y=".5" width="8" height="8" rx="1.500" fill="url(#ex)" stroke="#979797"/><rect x="2" y="4" width="5" height="1" fill="#2a3f7a"/></svg>
<svg style="left:47px;top:123px" width="16" height="17" viewBox="0 0 16 17" ><path d="M1.5 3 q0-.5 .5-.5 h4 l1.500 2 h6.500 q.5 0 .5 .5 v10 q0 .5 -.5 .5 h-12 q-.5 0 -.5-.5z" fill="url(#fo)" stroke="#dcae30"/><path d="M2.5 5.500 h11" stroke="#fff8cc" stroke-width="1" fill="none"/><rect x="4.500" y="6.500" width="4" height="6.500" rx="1.500" fill="#d8d8d8" stroke="#8a8a8a" stroke-width=".8"/><path d="M4.500 9.500 h4" stroke="#8a8a8a" stroke-width=".6"/><rect x="8" y="8" width="4.500" height="6.500" rx="1.500" fill="#f2cc30" stroke="#a07800" stroke-width=".8"/><path d="M8 11 h4.500" stroke="#a07800" stroke-width=".6"/></svg>
<span class="t b" style="left:67.5px;top:125px;letter-spacing:0.549px;">Databases</span>
<span class="t" style="left:131.0px;top:125px;letter-spacing:0.188px;color:#1c5cc4;">(4)</span>
<svg style="left:52px;top:145px" width="9" height="9" viewBox="0 0 9 9" ><rect x=".5" y=".5" width="8" height="8" rx="1.500" fill="url(#ex)" stroke="#979797"/><rect x="2" y="4" width="5" height="1" fill="#2a3f7a"/></svg>
<svg style="left:66px;top:141px" width="16" height="17" viewBox="0 0 16 17" ><path d="M5.7 1.5 H10.3 L12.5 3.7 V13.3 L10.3 15.5 H5.7 L3.5 13.3 V3.7z" fill="url(#gd)" stroke="#c08c00" stroke-width="1" stroke-linejoin="round"/><path d="M5.7 2.5 H10.3 L11.5 4.0 H4.5z" fill="#fffde0" opacity=".85"/><path d="M4.0 9.200000000000001 H12.0" stroke="#c08c00" stroke-width=".9"/><path d="M4.5 10.200000000000001 H11.5" stroke="#fffde0" stroke-width=".7" opacity=".8"/></svg>
<span class="t b" style="left:86.5px;top:143px;letter-spacing:0.652px;">employee</span>
<svg style="left:71px;top:163px" width="9" height="9" viewBox="0 0 9 9" ><rect x=".5" y=".5" width="8" height="8" rx="1.500" fill="url(#ex)" stroke="#979797"/><rect x="2" y="4" width="5" height="1" fill="#2a3f7a"/></svg>
<svg style="left:85px;top:159px" width="16" height="17" viewBox="0 0 16 17" ><path d="M1.5 3 q0-.5 .5-.5 h4 l1.500 2 h6.500 q.5 0 .5 .5 v10 q0 .5 -.5 .5 h-12 q-.5 0 -.5-.5z" fill="url(#fo)" stroke="#dcae30"/><path d="M2.5 5.500 h11" stroke="#fff8cc" stroke-width="1" fill="none"/><g shape-rendering="crispEdges"><rect x="4" y="7" width="9" height="7" fill="#6e6e6e"/><rect x="5" y="8" width="2" height="1" fill="#fff"/><rect x="8" y="8" width="2" height="1" fill="#fff"/><rect x="11" y="8" width="1" height="1" fill="#fff"/><rect x="5" y="10" width="2" height="1" fill="#fff"/><rect x="8" y="10" width="2" height="1" fill="#fff"/><rect x="11" y="10" width="1" height="1" fill="#fff"/><rect x="5" y="12" width="2" height="1" fill="#fff"/><rect x="8" y="12" width="2" height="1" fill="#fff"/><rect x="11" y="12" width="1" height="1" fill="#fff"/></g></svg>
<span class="t b" style="left:105.5px;top:161px;letter-spacing:0.490px;">Tables</span>
<span class="t" style="left:146.0px;top:161px;letter-spacing:0.109px;color:#1c5cc4;">(14)</span>
<svg style="left:90px;top:181px" width="9" height="9" viewBox="0 0 9 9" ><rect x=".5" y=".5" width="8" height="8" rx="1.500" fill="url(#ex)" stroke="#979797"/><rect x="2" y="4" width="5" height="1" fill="#2a3f7a"/><rect x="4" y="2" width="1" height="5" fill="#2a3f7a"/></svg>
<svg style="left:104px;top:177px" width="16" height="16" viewBox="0 0 16 16" ><g shape-rendering="crispEdges"><rect x="1" y="2" width="14" height="13" fill="#2d9bf5"/><rect x="2" y="3" width="12" height="1" fill="#86c6fa"/><rect x="2" y="5" width="12" height="9" fill="#8c8c8c"/><rect x="2" y="5" width="3" height="1" fill="#fff"/><rect x="6" y="5" width="4" height="1" fill="#fff"/><rect x="11" y="5" width="3" height="1" fill="#fff"/><rect x="2" y="7" width="3" height="1" fill="#fff"/><rect x="6" y="7" width="4" height="1" fill="#fff"/><rect x="11" y="7" width="3" height="1" fill="#fff"/><rect x="2" y="9" width="3" height="1" fill="#fff"/><rect x="6" y="9" width="4" height="1" fill="#fff"/><rect x="11" y="9" width="3" height="1" fill="#fff"/><rect x="2" y="11" width="3" height="1" fill="#fff"/><rect x="6" y="11" width="4" height="1" fill="#fff"/><rect x="11" y="11" width="3" height="1" fill="#fff"/><rect x="2" y="13" width="3" height="1" fill="#fff"/><rect x="6" y="13" width="4" height="1" fill="#fff"/><rect x="11" y="13" width="3" height="1" fill="#fff"/></g></svg>
<span class="t" style="left:124.5px;top:179px;letter-spacing:-0.826px;">AUTHORS</span>
<svg style="left:90px;top:199px" width="9" height="9" viewBox="0 0 9 9" ><rect x=".5" y=".5" width="8" height="8" rx="1.500" fill="url(#ex)" stroke="#979797"/><rect x="2" y="4" width="5" height="1" fill="#2a3f7a"/><rect x="4" y="2" width="1" height="5" fill="#2a3f7a"/></svg>
<svg style="left:104px;top:195px" width="16" height="16" viewBox="0 0 16 16" ><g shape-rendering="crispEdges"><rect x="1" y="2" width="14" height="13" fill="#2d9bf5"/><rect x="2" y="3" width="12" height="1" fill="#86c6fa"/><rect x="2" y="5" width="12" height="9" fill="#8c8c8c"/><rect x="2" y="5" width="3" height="1" fill="#fff"/><rect x="6" y="5" width="4" height="1" fill="#fff"/><rect x="11" y="5" width="3" height="1" fill="#fff"/><rect x="2" y="7" width="3" height="1" fill="#fff"/><rect x="6" y="7" width="4" height="1" fill="#fff"/><rect x="11" y="7" width="3" height="1" fill="#fff"/><rect x="2" y="9" width="3" height="1" fill="#fff"/><rect x="6" y="9" width="4" height="1" fill="#fff"/><rect x="11" y="9" width="3" height="1" fill="#fff"/><rect x="2" y="11" width="3" height="1" fill="#fff"/><rect x="6" y="11" width="4" height="1" fill="#fff"/><rect x="11" y="11" width="3" height="1" fill="#fff"/><rect x="2" y="13" width="3" height="1" fill="#fff"/><rect x="6" y="13" width="4" height="1" fill="#fff"/><rect x="11" y="13" width="3" height="1" fill="#fff"/></g></svg>
<span class="t" style="left:124.5px;top:197px;letter-spacing:-1.031px;">BOOKS</span>
<svg style="left:90px;top:217px" width="9" height="9" viewBox="0 0 9 9" ><rect x=".5" y=".5" width="8" height="8" rx="1.500" fill="url(#ex)" stroke="#979797"/><rect x="2" y="4" width="5" height="1" fill="#2a3f7a"/><rect x="4" y="2" width="1" height="5" fill="#2a3f7a"/></svg>
<svg style="left:104px;top:213px" width="16" height="16" viewBox="0 0 16 16" ><g shape-rendering="crispEdges"><rect x="1" y="2" width="14" height="13" fill="#2d9bf5"/><rect x="2" y="3" width="12" height="1" fill="#86c6fa"/><rect x="2" y="5" width="12" height="9" fill="#8c8c8c"/><rect x="2" y="5" width="3" height="1" fill="#fff"/><rect x="6" y="5" width="4" height="1" fill="#fff"/><rect x="11" y="5" width="3" height="1" fill="#fff"/><rect x="2" y="7" width="3" height="1" fill="#fff"/><rect x="6" y="7" width="4" height="1" fill="#fff"/><rect x="11" y="7" width="3" height="1" fill="#fff"/><rect x="2" y="9" width="3" height="1" fill="#fff"/><rect x="6" y="9" width="4" height="1" fill="#fff"/><rect x="11" y="9" width="3" height="1" fill="#fff"/><rect x="2" y="11" width="3" height="1" fill="#fff"/><rect x="6" y="11" width="4" height="1" fill="#fff"/><rect x="11" y="11" width="3" height="1" fill="#fff"/><rect x="2" y="13" width="3" height="1" fill="#fff"/><rect x="6" y="13" width="4" height="1" fill="#fff"/><rect x="11" y="13" width="3" height="1" fill="#fff"/></g></svg>
<span class="t" style="left:124.5px;top:215px;letter-spacing:-0.737px;">CONNECTION_LOG</span>
<svg style="left:90px;top:235px" width="9" height="9" viewBox="0 0 9 9" ><rect x=".5" y=".5" width="8" height="8" rx="1.500" fill="url(#ex)" stroke="#979797"/><rect x="2" y="4" width="5" height="1" fill="#2a3f7a"/><rect x="4" y="2" width="1" height="5" fill="#2a3f7a"/></svg>
<svg style="left:104px;top:231px" width="16" height="16" viewBox="0 0 16 16" ><g shape-rendering="crispEdges"><rect x="1" y="2" width="14" height="13" fill="#2d9bf5"/><rect x="2" y="3" width="12" height="1" fill="#86c6fa"/><rect x="2" y="5" width="12" height="9" fill="#8c8c8c"/><rect x="2" y="5" width="3" height="1" fill="#fff"/><rect x="6" y="5" width="4" height="1" fill="#fff"/><rect x="11" y="5" width="3" height="1" fill="#fff"/><rect x="2" y="7" width="3" height="1" fill="#fff"/><rect x="6" y="7" width="4" height="1" fill="#fff"/><rect x="11" y="7" width="3" height="1" fill="#fff"/><rect x="2" y="9" width="3" height="1" fill="#fff"/><rect x="6" y="9" width="4" height="1" fill="#fff"/><rect x="11" y="9" width="3" height="1" fill="#fff"/><rect x="2" y="11" width="3" height="1" fill="#fff"/><rect x="6" y="11" width="4" height="1" fill="#fff"/><rect x="11" y="11" width="3" height="1" fill="#fff"/><rect x="2" y="13" width="3" height="1" fill="#fff"/><rect x="6" y="13" width="4" height="1" fill="#fff"/><rect x="11" y="13" width="3" height="1" fill="#fff"/></g></svg>
<span class="t" style="left:124.5px;top:233px;letter-spacing:-0.882px;">COUNTRY</span>
<svg style="left:90px;top:253px" width="9" height="9" viewBox="0 0 9 9" ><rect x=".5" y=".5" width="8" height="8" rx="1.500" fill="url(#ex)" stroke="#979797"/><rect x="2" y="4" width="5" height="1" fill="#2a3f7a"/></svg>
<svg style="left:104px;top:249px" width="16" height="16" viewBox="0 0 16 16" ><g shape-rendering="crispEdges"><rect x="1" y="2" width="14" height="13" fill="#2d9bf5"/><rect x="2" y="3" width="12" height="1" fill="#86c6fa"/><rect x="2" y="5" width="12" height="9" fill="#8c8c8c"/><rect x="2" y="5" width="3" height="1" fill="#fff"/><rect x="6" y="5" width="4" height="1" fill="#fff"/><rect x="11" y="5" width="3" height="1" fill="#fff"/><rect x="2" y="7" width="3" height="1" fill="#fff"/><rect x="6" y="7" width="4" height="1" fill="#fff"/><rect x="11" y="7" width="3" height="1" fill="#fff"/><rect x="2" y="9" width="3" height="1" fill="#fff"/><rect x="6" y="9" width="4" height="1" fill="#fff"/><rect x="11" y="9" width="3" height="1" fill="#fff"/><rect x="2" y="11" width="3" height="1" fill="#fff"/><rect x="6" y="11" width="4" height="1" fill="#fff"/><rect x="11" y="11" width="3" height="1" fill="#fff"/><rect x="2" y="13" width="3" height="1" fill="#fff"/><rect x="6" y="13" width="4" height="1" fill="#fff"/><rect x="11" y="13" width="3" height="1" fill="#fff"/></g></svg>
<span class="t" style="left:124.5px;top:251px;letter-spacing:-0.967px;">CUSTOMER</span>
<svg style="left:109px;top:271px" width="9" height="9" viewBox="0 0 9 9" ><rect x=".5" y=".5" width="8" height="8" rx="1.500" fill="url(#ex)" stroke="#979797"/><rect x="2" y="4" width="5" height="1" fill="#2a3f7a"/><rect x="4" y="2" width="1" height="5" fill="#2a3f7a"/></svg>
<svg style="left:123px;top:267px" width="16" height="17" viewBox="0 0 16 17" ><path d="M1.5 3 q0-.5 .5-.5 h4 l1.500 2 h6.500 q.5 0 .5 .5 v10 q0 .5 -.5 .5 h-12 q-.5 0 -.5-.5z" fill="url(#fo)" stroke="#dcae30"/><path d="M2.5 5.500 h11" stroke="#fff8cc" stroke-width="1" fill="none"/><g shape-rendering="crispEdges"><rect x="3" y="6" width="11" height="8" fill="#fff"/><rect x="3" y="6" width="11" height="2" fill="#4a8ae8"/><rect x="3" y="7" width="3" height="7" fill="#f08010"/><rect x="4" y="9" width="2" height="1" fill="#ffd890"/><rect x="4" y="11" width="2" height="1" fill="#ffd890"/><rect x="4" y="13" width="2" height="1" fill="#ffd890"/><rect x="6" y="10" width="8" height="1" fill="#909090"/><rect x="6" y="12" width="8" height="1" fill="#909090"/><rect x="9" y="8" width="1" height="6" fill="#909090"/><rect x="13" y="8" width="1" height="6" fill="#909090"/></g></svg>
<span class="t b" style="left:144.0px;top:269px;letter-spacing:0.031px;">Fields</span>
<span class="t" style="left:179.5px;top:269px;letter-spacing:0.109px;color:#1c5cc4;">(12)</span>
<svg style="left:109px;top:289px" width="9" height="9" viewBox="0 0 9 9" ><rect x=".5" y=".5" width="8" height="8" rx="1.500" fill="url(#ex)" stroke="#979797"/><rect x="2" y="4" width="5" height="1" fill="#2a3f7a"/><rect x="4" y="2" width="1" height="5" fill="#2a3f7a"/></svg>
<svg style="left:123px;top:285px" width="16" height="17" viewBox="0 0 16 17" ><path d="M1.5 3 q0-.5 .5-.5 h4 l1.500 2 h6.500 q.5 0 .5 .5 v10 q0 .5 -.5 .5 h-12 q-.5 0 -.5-.5z" fill="url(#fo)" stroke="#dcae30"/><path d="M2.5 5.500 h11" stroke="#fff8cc" stroke-width="1" fill="none"/><g shape-rendering="crispEdges"><rect x="3" y="6" width="11" height="8" fill="#f4f4f4"/><rect x="3" y="6" width="11" height="2" fill="#4a8ae8"/><rect x="3" y="9" width="11" height="1" fill="#8a8a8a"/><rect x="3" y="11" width="11" height="1" fill="#8a8a8a"/><rect x="3" y="13" width="11" height="1" fill="#8a8a8a"/><rect x="6" y="8" width="1" height="6" fill="#8a8a8a"/><rect x="10" y="8" width="1" height="6" fill="#8a8a8a"/></g><path d="M10.500 6.500 l-4.500 4 h2.500 l-2 4.500 l5.500-5 h-2.500 l2.500-3.500z" fill="#ffdc10" stroke="#e05818" stroke-width=".6"/></svg>
<span class="t b" style="left:144.0px;top:287px;letter-spacing:0.714px;">Indexes</span>
<span class="t" style="left:193.5px;top:287px;letter-spacing:0.188px;color:#1c5cc4;">(4)</span>
<svg style="left:109px;top:307px" width="9" height="9" viewBox="0 0 9 9" ><rect x=".5" y=".5" width="8" height="8" rx="1.500" fill="url(#ex)" stroke="#979797"/><rect x="2" y="4" width="5" height="1" fill="#2a3f7a"/><rect x="4" y="2" width="1" height="5" fill="#2a3f7a"/></svg>
<svg style="left:123px;top:303px" width="16" height="17" viewBox="0 0 16 17" ><path d="M1.5 3 q0-.5 .5-.5 h4 l1.500 2 h6.500 q.5 0 .5 .5 v10 q0 .5 -.5 .5 h-12 q-.5 0 -.5-.5z" fill="url(#fo)" stroke="#dcae30"/><path d="M2.5 5.500 h11" stroke="#fff8cc" stroke-width="1" fill="none"/><circle cx="10.200" cy="8" r="2.300" fill="#ffe680" stroke="#6a5200" stroke-width="1"/><circle cx="10.700" cy="7.500" r=".7" fill="#6a5200"/><path d="M8.500 9.500 l-4.500 4 l1.200 1.300 l1.300-1 l-.6-.8 l1-.9 l.7.700 l2.400-2z" fill="#ffe680" stroke="#6a5200" stroke-width=".9"/></svg>
<span class="t b" style="left:144.0px;top:305px;letter-spacing:0.341px;">Foreign keys</span>
<span class="t" style="left:219.5px;top:305px;letter-spacing:0.188px;color:#1c5cc4;">(1)</span>
<svg style="left:123px;top:321px" width="16" height="17" viewBox="0 0 16 17" ><path d="M1.5 3 q0-.5 .5-.5 h4 l1.500 2 h6.500 q.5 0 .5 .5 v10 q0 .5 -.5 .5 h-12 q-.5 0 -.5-.5z" fill="url(#fo)" stroke="#dcae30"/><path d="M2.5 5.500 h11" stroke="#fff8cc" stroke-width="1" fill="none"/><rect x="3.500" y="6.500" width="8" height="8" fill="#fff" stroke="#1a2050" stroke-width="1.400"/><path d="M5 14.500 h7.500 v-5" stroke="#7a7a9a" stroke-width="1" fill="none"/><path d="M5.500 9.500 l2.200 2.700 l5.300-6.200" stroke="#108a20" stroke-width="1.800" fill="none"/></svg>
<span class="t" style="left:143.5px;top:323px;letter-spacing:-0.448px;">Checks</span>
<svg style="left:109px;top:343px" width="9" height="9" viewBox="0 0 9 9" ><rect x=".5" y=".5" width="8" height="8" rx="1.500" fill="url(#ex)" stroke="#979797"/><rect x="2" y="4" width="5" height="1" fill="#2a3f7a"/><rect x="4" y="2" width="1" height="5" fill="#2a3f7a"/></svg>
<svg style="left:123px;top:339px" width="16" height="17" viewBox="0 0 16 17" ><path d="M1.5 3 q0-.5 .5-.5 h4 l1.500 2 h6.500 q.5 0 .5 .5 v10 q0 .5 -.5 .5 h-12 q-.5 0 -.5-.5z" fill="url(#fo)" stroke="#dcae30"/><path d="M2.5 5.500 h11" stroke="#fff8cc" stroke-width="1" fill="none"/><rect x="3.500" y="7.500" width="4.500" height="3" fill="#fff" stroke="#3a5ab8" stroke-width=".9"/><rect x="5.500" y="10.500" width="4.500" height="3" fill="#fff" stroke="#7a8ab8" stroke-width=".9"/><path d="M8.500 8 l4 3" stroke="#e01818" stroke-width="1.300" fill="none"/><path d="M13.500 12 l-3.500-.5 l2.500-2.500z" fill="#e01818"/></svg>
<span class="t b" style="left:144.0px;top:341px;letter-spacing:0.447px;">Triggers</span>
<span class="t" style="left:194.5px;top:341px;letter-spacing:0.188px;color:#1c5cc4;">(1)</span>
<svg style="left:109px;top:361px" width="9" height="9" viewBox="0 0 9 9" ><rect x=".5" y=".5" width="8" height="8" rx="1.500" fill="url(#ex)" stroke="#979797"/><rect x="2" y="4" width="5" height="1" fill="#2a3f7a"/><rect x="4" y="2" width="1" height="5" fill="#2a3f7a"/></svg>
<svg style="left:123px;top:357px" width="16" height="17" viewBox="0 0 16 17" ><path d="M1.5 3 q0-.5 .5-.5 h4 l1.500 2 h6.500 q.5 0 .5 .5 v10 q0 .5 -.5 .5 h-12 q-.5 0 -.5-.5z" fill="url(#fo)" stroke="#dcae30"/><path d="M2.5 5.500 h11" stroke="#fff8cc" stroke-width="1" fill="none"/><circle cx="10.200" cy="8" r="2.300" fill="#ffe680" stroke="#6a5200" stroke-width="1"/><circle cx="10.700" cy="7.500" r=".7" fill="#6a5200"/><path d="M8.500 9.500 l-4.500 4 l1.200 1.300 l1.300-1 l-.6-.8 l1-.9 l.7.700 l2.400-2z" fill="#ffe680" stroke="#6a5200" stroke-width=".9"/></svg>
<span class="t b" style="left:144.0px;top:359px;letter-spacing:0.466px;">References</span>
<span class="t" style="left:211.5px;top:359px;letter-spacing:0.188px;color:#1c5cc4;">(1)</span>
<svg style="left:90px;top:379px" width="9" height="9" viewBox="0 0 9 9" ><rect x=".5" y=".5" width="8" height="8" rx="1.500" fill="url(#ex)" stroke="#979797"/><rect x="2" y="4" width="5" height="1" fill="#2a3f7a"/><rect x="4" y="2" width="1" height="5" fill="#2a3f7a"/></svg>
<svg style="left:104px;top:375px" width="16" height="16" viewBox="0 0 16 16" ><g shape-rendering="crispEdges"><rect x="1" y="2" width="14" height="13" fill="#2d9bf5"/><rect x="2" y="3" width="12" height="1" fill="#86c6fa"/><rect x="2" y="5" width="12" height="9" fill="#8c8c8c"/><rect x="2" y="5" width="3" height="1" fill="#fff"/><rect x="6" y="5" width="4" height="1" fill="#fff"/><rect x="11" y="5" width="3" height="1" fill="#fff"/><rect x="2" y="7" width="3" height="1" fill="#fff"/><rect x="6" y="7" width="4" height="1" fill="#fff"/><rect x="11" y="7" width="3" height="1" fill="#fff"/><rect x="2" y="9" width="3" height="1" fill="#fff"/><rect x="6" y="9" width="4" height="1" fill="#fff"/><rect x="11" y="9" width="3" height="1" fill="#fff"/><rect x="2" y="11" width="3" height="1" fill="#fff"/><rect x="6" y="11" width="4" height="1" fill="#fff"/><rect x="11" y="11" width="3" height="1" fill="#fff"/><rect x="2" y="13" width="3" height="1" fill="#fff"/><rect x="6" y="13" width="4" height="1" fill="#fff"/><rect x="11" y="13" width="3" height="1" fill="#fff"/></g></svg>
<span class="t" style="left:124.5px;top:377px;letter-spacing:-0.877px;">DEPARTMENT</span>
<svg style="left:90px;top:397px" width="9" height="9" viewBox="0 0 9 9" ><rect x=".5" y=".5" width="8" height="8" rx="1.500" fill="url(#ex)" stroke="#979797"/><rect x="2" y="4" width="5" height="1" fill="#2a3f7a"/><rect x="4" y="2" width="1" height="5" fill="#2a3f7a"/></svg>
<svg style="left:104px;top:393px" width="16" height="16" viewBox="0 0 16 16" ><g shape-rendering="crispEdges"><rect x="1" y="2" width="14" height="13" fill="#2d9bf5"/><rect x="2" y="3" width="12" height="1" fill="#86c6fa"/><rect x="2" y="5" width="12" height="9" fill="#8c8c8c"/><rect x="2" y="5" width="3" height="1" fill="#fff"/><rect x="6" y="5" width="4" height="1" fill="#fff"/><rect x="11" y="5" width="3" height="1" fill="#fff"/><rect x="2" y="7" width="3" height="1" fill="#fff"/><rect x="6" y="7" width="4" height="1" fill="#fff"/><rect x="11" y="7" width="3" height="1" fill="#fff"/><rect x="2" y="9" width="3" height="1" fill="#fff"/><rect x="6" y="9" width="4" height="1" fill="#fff"/><rect x="11" y="9" width="3" height="1" fill="#fff"/><rect x="2" y="11" width="3" height="1" fill="#fff"/><rect x="6" y="11" width="4" height="1" fill="#fff"/><rect x="11" y="11" width="3" height="1" fill="#fff"/><rect x="2" y="13" width="3" height="1" fill="#fff"/><rect x="6" y="13" width="4" height="1" fill="#fff"/><rect x="11" y="13" width="3" height="1" fill="#fff"/></g></svg>
<span class="t" style="left:124.5px;top:395px;letter-spacing:-1.195px;">EMPLOYEE</span>
<svg style="left:90px;top:415px" width="9" height="9" viewBox="0 0 9 9" ><rect x=".5" y=".5" width="8" height="8" rx="1.500" fill="url(#ex)" stroke="#979797"/><rect x="2" y="4" width="5" height="1" fill="#2a3f7a"/><rect x="4" y="2" width="1" height="5" fill="#2a3f7a"/></svg>
<svg style="left:104px;top:411px" width="16" height="16" viewBox="0 0 16 16" ><g shape-rendering="crispEdges"><rect x="1" y="2" width="14" height="13" fill="#2d9bf5"/><rect x="2" y="3" width="12" height="1" fill="#86c6fa"/><rect x="2" y="5" width="12" height="9" fill="#8c8c8c"/><rect x="2" y="5" width="3" height="1" fill="#fff"/><rect x="6" y="5" width="4" height="1" fill="#fff"/><rect x="11" y="5" width="3" height="1" fill="#fff"/><rect x="2" y="7" width="3" height="1" fill="#fff"/><rect x="6" y="7" width="4" height="1" fill="#fff"/><rect x="11" y="7" width="3" height="1" fill="#fff"/><rect x="2" y="9" width="3" height="1" fill="#fff"/><rect x="6" y="9" width="4" height="1" fill="#fff"/><rect x="11" y="9" width="3" height="1" fill="#fff"/><rect x="2" y="11" width="3" height="1" fill="#fff"/><rect x="6" y="11" width="4" height="1" fill="#fff"/><rect x="11" y="11" width="3" height="1" fill="#fff"/><rect x="2" y="13" width="3" height="1" fill="#fff"/><rect x="6" y="13" width="4" height="1" fill="#fff"/><rect x="11" y="13" width="3" height="1" fill="#fff"/></g></svg>
<span class="t" style="left:124.5px;top:413px;letter-spacing:-1.002px;">EMPLOYEE_PROJECT</span>
<svg style="left:90px;top:433px" width="9" height="9" viewBox="0 0 9 9" ><rect x=".5" y=".5" width="8" height="8" rx="1.500" fill="url(#ex)" stroke="#979797"/><rect x="2" y="4" width="5" height="1" fill="#2a3f7a"/><rect x="4" y="2" width="1" height="5" fill="#2a3f7a"/></svg>
<svg style="left:104px;top:429px" width="16" height="16" viewBox="0 0 16 16" ><g shape-rendering="crispEdges"><rect x="1" y="2" width="14" height="13" fill="#2d9bf5"/><rect x="2" y="3" width="12" height="1" fill="#86c6fa"/><rect x="2" y="5" width="12" height="9" fill="#8c8c8c"/><rect x="2" y="5" width="3" height="1" fill="#fff"/><rect x="6" y="5" width="4" height="1" fill="#fff"/><rect x="11" y="5" width="3" height="1" fill="#fff"/><rect x="2" y="7" width="3" height="1" fill="#fff"/><rect x="6" y="7" width="4" height="1" fill="#fff"/><rect x="11" y="7" width="3" height="1" fill="#fff"/><rect x="2" y="9" width="3" height="1" fill="#fff"/><rect x="6" y="9" width="4" height="1" fill="#fff"/><rect x="11" y="9" width="3" height="1" fill="#fff"/><rect x="2" y="11" width="3" height="1" fill="#fff"/><rect x="6" y="11" width="4" height="1" fill="#fff"/><rect x="11" y="11" width="3" height="1" fill="#fff"/><rect x="2" y="13" width="3" height="1" fill="#fff"/><rect x="6" y="13" width="4" height="1" fill="#fff"/><rect x="11" y="13" width="3" height="1" fill="#fff"/></g></svg>
<span class="t" style="left:124.5px;top:431px;letter-spacing:-0.802px;">JOB</span>
<svg style="left:90px;top:451px" width="9" height="9" viewBox="0 0 9 9" ><rect x=".5" y=".5" width="8" height="8" rx="1.500" fill="url(#ex)" stroke="#979797"/><rect x="2" y="4" width="5" height="1" fill="#2a3f7a"/><rect x="4" y="2" width="1" height="5" fill="#2a3f7a"/></svg>
<svg style="left:104px;top:447px" width="16" height="16" viewBox="0 0 16 16" ><g shape-rendering="crispEdges"><rect x="1" y="2" width="14" height="13" fill="#2d9bf5"/><rect x="2" y="3" width="12" height="1" fill="#86c6fa"/><rect x="2" y="5" width="12" height="9" fill="#8c8c8c"/><rect x="2" y="5" width="3" height="1" fill="#fff"/><rect x="6" y="5" width="4" height="1" fill="#fff"/><rect x="11" y="5" width="3" height="1" fill="#fff"/><rect x="2" y="7" width="3" height="1" fill="#fff"/><rect x="6" y="7" width="4" height="1" fill="#fff"/><rect x="11" y="7" width="3" height="1" fill="#fff"/><rect x="2" y="9" width="3" height="1" fill="#fff"/><rect x="6" y="9" width="4" height="1" fill="#fff"/><rect x="11" y="9" width="3" height="1" fill="#fff"/><rect x="2" y="11" width="3" height="1" fill="#fff"/><rect x="6" y="11" width="4" height="1" fill="#fff"/><rect x="11" y="11" width="3" height="1" fill="#fff"/><rect x="2" y="13" width="3" height="1" fill="#fff"/><rect x="6" y="13" width="4" height="1" fill="#fff"/><rect x="11" y="13" width="3" height="1" fill="#fff"/></g></svg>
<span class="t" style="left:124.5px;top:449px;letter-spacing:-0.906px;">PROJECT</span>
<svg style="left:90px;top:469px" width="9" height="9" viewBox="0 0 9 9" ><rect x=".5" y=".5" width="8" height="8" rx="1.500" fill="url(#ex)" stroke="#979797"/><rect x="2" y="4" width="5" height="1" fill="#2a3f7a"/><rect x="4" y="2" width="1" height="5" fill="#2a3f7a"/></svg>
<svg style="left:104px;top:465px" width="16" height="16" viewBox="0 0 16 16" ><g shape-rendering="crispEdges"><rect x="1" y="2" width="14" height="13" fill="#2d9bf5"/><rect x="2" y="3" width="12" height="1" fill="#86c6fa"/><rect x="2" y="5" width="12" height="9" fill="#8c8c8c"/><rect x="2" y="5" width="3" height="1" fill="#fff"/><rect x="6" y="5" width="4" height="1" fill="#fff"/><rect x="11" y="5" width="3" height="1" fill="#fff"/><rect x="2" y="7" width="3" height="1" fill="#fff"/><rect x="6" y="7" width="4" height="1" fill="#fff"/><rect x="11" y="7" width="3" height="1" fill="#fff"/><rect x="2" y="9" width="3" height="1" fill="#fff"/><rect x="6" y="9" width="4" height="1" fill="#fff"/><rect x="11" y="9" width="3" height="1" fill="#fff"/><rect x="2" y="11" width="3" height="1" fill="#fff"/><rect x="6" y="11" width="4" height="1" fill="#fff"/><rect x="11" y="11" width="3" height="1" fill="#fff"/><rect x="2" y="13" width="3" height="1" fill="#fff"/><rect x="6" y="13" width="4" height="1" fill="#fff"/><rect x="11" y="13" width="3" height="1" fill="#fff"/></g></svg>
<span class="t" style="left:124.5px;top:467px;letter-spacing:-0.924px;">PROJ_DEPT_BUDGET</span>
<svg style="left:90px;top:487px" width="9" height="9" viewBox="0 0 9 9" ><rect x=".5" y=".5" width="8" height="8" rx="1.500" fill="url(#ex)" stroke="#979797"/><rect x="2" y="4" width="5" height="1" fill="#2a3f7a"/><rect x="4" y="2" width="1" height="5" fill="#2a3f7a"/></svg>
<svg style="left:104px;top:483px" width="16" height="16" viewBox="0 0 16 16" ><g shape-rendering="crispEdges"><rect x="1" y="2" width="14" height="13" fill="#2d9bf5"/><rect x="2" y="3" width="12" height="1" fill="#86c6fa"/><rect x="2" y="5" width="12" height="9" fill="#8c8c8c"/><rect x="2" y="5" width="3" height="1" fill="#fff"/><rect x="6" y="5" width="4" height="1" fill="#fff"/><rect x="11" y="5" width="3" height="1" fill="#fff"/><rect x="2" y="7" width="3" height="1" fill="#fff"/><rect x="6" y="7" width="4" height="1" fill="#fff"/><rect x="11" y="7" width="3" height="1" fill="#fff"/><rect x="2" y="9" width="3" height="1" fill="#fff"/><rect x="6" y="9" width="4" height="1" fill="#fff"/><rect x="11" y="9" width="3" height="1" fill="#fff"/><rect x="2" y="11" width="3" height="1" fill="#fff"/><rect x="6" y="11" width="4" height="1" fill="#fff"/><rect x="11" y="11" width="3" height="1" fill="#fff"/><rect x="2" y="13" width="3" height="1" fill="#fff"/><rect x="6" y="13" width="4" height="1" fill="#fff"/><rect x="11" y="13" width="3" height="1" fill="#fff"/></g></svg>
<span class="t" style="left:124.5px;top:485px;letter-spacing:-0.704px;">SALARY_HISTORY</span>
<svg style="left:90px;top:505px" width="9" height="9" viewBox="0 0 9 9" ><rect x=".5" y=".5" width="8" height="8" rx="1.500" fill="url(#ex)" stroke="#979797"/><rect x="2" y="4" width="5" height="1" fill="#2a3f7a"/><rect x="4" y="2" width="1" height="5" fill="#2a3f7a"/></svg>
<svg style="left:104px;top:501px" width="16" height="16" viewBox="0 0 16 16" ><g shape-rendering="crispEdges"><rect x="1" y="2" width="14" height="13" fill="#2d9bf5"/><rect x="2" y="3" width="12" height="1" fill="#86c6fa"/><rect x="2" y="5" width="12" height="9" fill="#8c8c8c"/><rect x="2" y="5" width="3" height="1" fill="#fff"/><rect x="6" y="5" width="4" height="1" fill="#fff"/><rect x="11" y="5" width="3" height="1" fill="#fff"/><rect x="2" y="7" width="3" height="1" fill="#fff"/><rect x="6" y="7" width="4" height="1" fill="#fff"/><rect x="11" y="7" width="3" height="1" fill="#fff"/><rect x="2" y="9" width="3" height="1" fill="#fff"/><rect x="6" y="9" width="4" height="1" fill="#fff"/><rect x="11" y="9" width="3" height="1" fill="#fff"/><rect x="2" y="11" width="3" height="1" fill="#fff"/><rect x="6" y="11" width="4" height="1" fill="#fff"/><rect x="11" y="11" width="3" height="1" fill="#fff"/><rect x="2" y="13" width="3" height="1" fill="#fff"/><rect x="6" y="13" width="4" height="1" fill="#fff"/><rect x="11" y="13" width="3" height="1" fill="#fff"/></g></svg>
<span class="t" style="left:124.5px;top:503px;letter-spacing:-1.100px;">SALES</span>
<svg style="left:90px;top:523px" width="9" height="9" viewBox="0 0 9 9" ><rect x=".5" y=".5" width="8" height="8" rx="1.500" fill="url(#ex)" stroke="#979797"/><rect x="2" y="4" width="5" height="1" fill="#2a3f7a"/><rect x="4" y="2" width="1" height="5" fill="#2a3f7a"/></svg>
<svg style="left:104px;top:519px" width="16" height="16" viewBox="0 0 16 16" ><g shape-rendering="crispEdges"><rect x="1" y="2" width="14" height="13" fill="#2d9bf5"/><rect x="2" y="3" width="12" height="1" fill="#86c6fa"/><rect x="2" y="5" width="12" height="9" fill="#8c8c8c"/><rect x="2" y="5" width="3" height="1" fill="#fff"/><rect x="6" y="5" width="4" height="1" fill="#fff"/><rect x="11" y="5" width="3" height="1" fill="#fff"/><rect x="2" y="7" width="3" height="1" fill="#fff"/><rect x="6" y="7" width="4" height="1" fill="#fff"/><rect x="11" y="7" width="3" height="1" fill="#fff"/><rect x="2" y="9" width="3" height="1" fill="#fff"/><rect x="6" y="9" width="4" height="1" fill="#fff"/><rect x="11" y="9" width="3" height="1" fill="#fff"/><rect x="2" y="11" width="3" height="1" fill="#fff"/><rect x="6" y="11" width="4" height="1" fill="#fff"/><rect x="11" y="11" width="3" height="1" fill="#fff"/><rect x="2" y="13" width="3" height="1" fill="#fff"/><rect x="6" y="13" width="4" height="1" fill="#fff"/><rect x="11" y="13" width="3" height="1" fill="#fff"/></g></svg>
<span class="t" style="left:124.5px;top:521px;letter-spacing:0.312px;">test</span>
<svg style="left:71px;top:541px" width="9" height="9" viewBox="0 0 9 9" ><rect x=".5" y=".5" width="8" height="8" rx="1.500" fill="url(#ex)" stroke="#979797"/><rect x="2" y="4" width="5" height="1" fill="#2a3f7a"/></svg>
<svg style="left:85px;top:537px" width="16" height="17" viewBox="0 0 16 17" ><path d="M1.5 3 q0-.5 .5-.5 h4 l1.500 2 h6.500 q.5 0 .5 .5 v10 q0 .5 -.5 .5 h-12 q-.5 0 -.5-.5z" fill="url(#fo)" stroke="#dcae30"/><path d="M2.5 5.500 h11" stroke="#fff8cc" stroke-width="1" fill="none"/><rect x="6.500" y="6" width="3" height="3" fill="#d82020"/><rect x="4" y="11.500" width="3" height="3" fill="#10a020"/><rect x="9" y="11.500" width="3" height="3" fill="#10a020"/><path d="M8 9 v1.500 M5.500 11.500 v-1 h5 v1" stroke="#10a020" stroke-width=".9" fill="none"/></svg>
<span class="t b" style="left:105.5px;top:539px;letter-spacing:0.397px;">Views</span>
<span class="t" style="left:142.0px;top:539px;letter-spacing:0.188px;color:#1c5cc4;">(2)</span>
<svg style="left:90px;top:559px" width="9" height="9" viewBox="0 0 9 9" ><rect x=".5" y=".5" width="8" height="8" rx="1.500" fill="url(#ex)" stroke="#979797"/><rect x="2" y="4" width="5" height="1" fill="#2a3f7a"/><rect x="4" y="2" width="1" height="5" fill="#2a3f7a"/></svg>
<svg style="left:104px;top:555px" width="16" height="17" viewBox="0 0 16 17" ><rect x="1.500" y="1.500" width="13" height="14" fill="#fff" stroke="#2f8fe0"/><rect x="1" y="1" width="14" height="2" fill="#3fa0f0"/><rect x="6.500" y="5" width="3" height="3" fill="#e02020"/><rect x="4" y="10.500" width="3" height="3" fill="#10a020"/><rect x="9" y="10.500" width="3" height="3" fill="#10a020"/><path d="M8 8 v1.5 M5.5 10.5 v-1 h5 v1" stroke="#10a020" stroke-width=".9" fill="none"/></svg>
<span class="t" style="left:124.5px;top:557px;letter-spacing:-1.210px;">BESTSELLERS</span>
<svg style="left:90px;top:577px" width="9" height="9" viewBox="0 0 9 9" ><rect x=".5" y=".5" width="8" height="8" rx="1.500" fill="url(#ex)" stroke="#979797"/><rect x="2" y="4" width="5" height="1" fill="#2a3f7a"/><rect x="4" y="2" width="1" height="5" fill="#2a3f7a"/></svg>
<svg style="left:104px;top:573px" width="16" height="17" viewBox="0 0 16 17" ><rect x="1.500" y="1.500" width="13" height="14" fill="#fff" stroke="#2f8fe0"/><rect x="1" y="1" width="14" height="2" fill="#3fa0f0"/><rect x="6.500" y="5" width="3" height="3" fill="#e02020"/><rect x="4" y="10.500" width="3" height="3" fill="#10a020"/><rect x="9" y="10.500" width="3" height="3" fill="#10a020"/><path d="M8 8 v1.5 M5.5 10.5 v-1 h5 v1" stroke="#10a020" stroke-width=".9" fill="none"/></svg>
<span class="t" style="left:124.5px;top:575px;letter-spacing:-0.679px;">BUDGET_2012</span>
<svg style="left:85px;top:591px" width="16" height="17" viewBox="0 0 16 17" ><path d="M1.5 3 q0-.5 .5-.5 h4 l1.500 2 h6.500 q.5 0 .5 .5 v10 q0 .5 -.5 .5 h-12 q-.5 0 -.5-.5z" fill="url(#fo)" stroke="#dcae30"/><path d="M2.5 5.500 h11" stroke="#fff8cc" stroke-width="1" fill="none"/><path d="M4.500 6.500 h5 l2 2 v6.500 h-7z" fill="#f4f6ff" stroke="#6a7ab0" stroke-width=".9"/><rect x="6.500" y="9" width="3" height="4.500" rx="1.200" fill="#f2cc30" stroke="#a07800" stroke-width=".7"/></svg>
<span class="t" style="left:105px;top:593px;letter-spacing:-0.219px;">Queries</span>
<svg style="left:71px;top:613px" width="9" height="9" viewBox="0 0 9 9" ><rect x=".5" y=".5" width="8" height="8" rx="1.500" fill="url(#ex)" stroke="#979797"/><rect x="2" y="4" width="5" height="1" fill="#2a3f7a"/><rect x="4" y="2" width="1" height="5" fill="#2a3f7a"/></svg>
<svg style="left:85px;top:609px" width="16" height="17" viewBox="0 0 16 17" ><path d="M1.5 3 q0-.5 .5-.5 h4 l1.500 2 h6.500 q.5 0 .5 .5 v10 q0 .5 -.5 .5 h-12 q-.5 0 -.5-.5z" fill="url(#fo)" stroke="#dcae30"/><path d="M2.5 5.500 h11" stroke="#fff8cc" stroke-width="1" fill="none"/><rect x="3.500" y="7.500" width="4.500" height="3" fill="#fff" stroke="#3a5ab8" stroke-width=".9"/><rect x="5.500" y="10.500" width="4.500" height="3" fill="#fff" stroke="#7a8ab8" stroke-width=".9"/><path d="M8.500 8 l4 3" stroke="#e01818" stroke-width="1.300" fill="none"/><path d="M13.500 12 l-3.500-.5 l2.500-2.500z" fill="#e01818"/></svg>
<span class="t b" style="left:105.5px;top:611px;letter-spacing:0.447px;">Triggers</span>
<span class="t" style="left:156.0px;top:611px;letter-spacing:0.188px;color:#1c5cc4;">(1)</span>
<svg style="left:52px;top:631px" width="9" height="9" viewBox="0 0 9 9" ><rect x=".5" y=".5" width="8" height="8" rx="1.500" fill="url(#ex)" stroke="#979797"/><rect x="2" y="4" width="5" height="1" fill="#2a3f7a"/></svg>
<svg style="left:66px;top:627px" width="16" height="17" viewBox="0 0 16 17" ><path d="M5.7 1.5 H10.3 L12.5 3.7 V13.3 L10.3 15.5 H5.7 L3.5 13.3 V3.7z" fill="url(#gd)" stroke="#c08c00" stroke-width="1" stroke-linejoin="round"/><path d="M5.7 2.5 H10.3 L11.5 4.0 H4.5z" fill="#fffde0" opacity=".85"/><path d="M4.0 9.200000000000001 H12.0" stroke="#c08c00" stroke-width=".9"/><path d="M4.5 10.200000000000001 H11.5" stroke="#fffde0" stroke-width=".7" opacity=".8"/></svg>
<span class="t b" style="left:86.5px;top:629px;letter-spacing:0.597px;">atp_tennis</span>
<svg style="left:71px;top:649px" width="9" height="9" viewBox="0 0 9 9" ><rect x=".5" y=".5" width="8" height="8" rx="1.500" fill="url(#ex)" stroke="#979797"/><rect x="2" y="4" width="5" height="1" fill="#2a3f7a"/><rect x="4" y="2" width="1" height="5" fill="#2a3f7a"/></svg>
<svg style="left:85px;top:645px" width="16" height="17" viewBox="0 0 16 17" ><path d="M1.5 3 q0-.5 .5-.5 h4 l1.500 2 h6.500 q.5 0 .5 .5 v10 q0 .5 -.5 .5 h-12 q-.5 0 -.5-.5z" fill="url(#fo)" stroke="#dcae30"/><path d="M2.5 5.500 h11" stroke="#fff8cc" stroke-width="1" fill="none"/><g shape-rendering="crispEdges"><rect x="4" y="7" width="9" height="7" fill="#6e6e6e"/><rect x="5" y="8" width="2" height="1" fill="#fff"/><rect x="8" y="8" width="2" height="1" fill="#fff"/><rect x="11" y="8" width="1" height="1" fill="#fff"/><rect x="5" y="10" width="2" height="1" fill="#fff"/><rect x="8" y="10" width="2" height="1" fill="#fff"/><rect x="11" y="10" width="1" height="1" fill="#fff"/><rect x="5" y="12" width="2" height="1" fill="#fff"/><rect x="8" y="12" width="2" height="1" fill="#fff"/><rect x="11" y="12" width="1" height="1" fill="#fff"/></g></svg>
<span class="t b" style="left:105.5px;top:647px;letter-spacing:0.490px;">Tables</span>
<span class="t" style="left:146.0px;top:647px;letter-spacing:0.188px;color:#1c5cc4;">(7)</span>
<svg style="left:85px;top:663px" width="16" height="17" viewBox="0 0 16 17" ><path d="M1.5 3 q0-.5 .5-.5 h4 l1.500 2 h6.500 q.5 0 .5 .5 v10 q0 .5 -.5 .5 h-12 q-.5 0 -.5-.5z" fill="url(#fo)" stroke="#dcae30"/><path d="M2.5 5.500 h11" stroke="#fff8cc" stroke-width="1" fill="none"/><rect x="6.500" y="6" width="3" height="3" fill="#d82020"/><rect x="4" y="11.500" width="3" height="3" fill="#10a020"/><rect x="9" y="11.500" width="3" height="3" fill="#10a020"/><path d="M8 9 v1.500 M5.500 11.500 v-1 h5 v1" stroke="#10a020" stroke-width=".9" fill="none"/></svg>
<span class="t" style="left:105px;top:665px;letter-spacing:-0.228px;">Views</span>
<svg style="left:85px;top:681px" width="16" height="17" viewBox="0 0 16 17" ><path d="M1.5 3 q0-.5 .5-.5 h4 l1.500 2 h6.500 q.5 0 .5 .5 v10 q0 .5 -.5 .5 h-12 q-.5 0 -.5-.5z" fill="url(#fo)" stroke="#dcae30"/><path d="M2.5 5.500 h11" stroke="#fff8cc" stroke-width="1" fill="none"/><path d="M4.500 6.500 h5 l2 2 v6.500 h-7z" fill="#f4f6ff" stroke="#6a7ab0" stroke-width=".9"/><rect x="6.500" y="9" width="3" height="4.500" rx="1.200" fill="#f2cc30" stroke="#a07800" stroke-width=".7"/></svg>
<span class="t" style="left:105px;top:683px;letter-spacing:-0.219px;">Queries</span>
<svg style="left:85px;top:699px" width="16" height="17" viewBox="0 0 16 17" ><path d="M1.5 3 q0-.5 .5-.5 h4 l1.500 2 h6.500 q.5 0 .5 .5 v10 q0 .5 -.5 .5 h-12 q-.5 0 -.5-.5z" fill="url(#fo)" stroke="#dcae30"/><path d="M2.5 5.500 h11" stroke="#fff8cc" stroke-width="1" fill="none"/><rect x="3.500" y="7.500" width="4.500" height="3" fill="#fff" stroke="#3a5ab8" stroke-width=".9"/><rect x="5.500" y="10.500" width="4.500" height="3" fill="#fff" stroke="#7a8ab8" stroke-width=".9"/><path d="M8.500 8 l4 3" stroke="#e01818" stroke-width="1.300" fill="none"/><path d="M13.500 12 l-3.500-.5 l2.500-2.500z" fill="#e01818"/></svg>
<span class="t" style="left:105px;top:701px;letter-spacing:-0.117px;">Triggers</span>
<svg style="left:66px;top:717px" width="16" height="17" viewBox="0 0 16 17" ><path d="M5.7 1.5 H10.3 L12.5 3.7 V13.3 L10.3 15.5 H5.7 L3.5 13.3 V3.7z" fill="url(#gy)" stroke="#777" stroke-width="1" stroke-linejoin="round"/><path d="M5.7 2.5 H10.3 L11.5 4.0 H4.5z" fill="#ffffff" opacity=".85"/><path d="M4.0 9.200000000000001 H12.0" stroke="#777" stroke-width=".9"/><path d="M4.5 10.200000000000001 H11.5" stroke="#ffffff" stroke-width=".7" opacity=".8"/></svg>
<span class="t" style="left:86px;top:719px;letter-spacing:-0.059px;">Northwind</span>
<svg style="left:66px;top:735px" width="16" height="17" viewBox="0 0 16 17" ><path d="M5.7 1.5 H10.3 L12.5 3.7 V13.3 L10.3 15.5 H5.7 L3.5 13.3 V3.7z" fill="url(#gy)" stroke="#777" stroke-width="1" stroke-linejoin="round"/><path d="M5.7 2.5 H10.3 L11.5 4.0 H4.5z" fill="#ffffff" opacity=".85"/><path d="M4.0 9.200000000000001 H12.0" stroke="#777" stroke-width=".9"/><path d="M4.5 10.200000000000001 H11.5" stroke="#ffffff" stroke-width=".7" opacity=".8"/></svg>
<span class="t" style="left:86px;top:737px;letter-spacing:-0.067px;">test.db at SQLite 3.6</span>
<svg style="left:0;top:0" width="792" height="110" viewBox="0 0 792 110"><defs><linearGradient id="tbi" x1="0" x2="0" y1="0" y2="1"><stop offset="0" stop-color="#fcfcfc"/><stop offset=".5" stop-color="#f0f0f0"/><stop offset="1" stop-color="#dcdcdc"/></linearGradient><linearGradient id="tba" x1="0" x2="0" y1="0" y2="1"><stop offset="0" stop-color="#ffffff"/><stop offset=".35" stop-color="#f2f8ff"/><stop offset="1" stop-color="#c4dffc"/></linearGradient></defs><path d="M634 103.5 L644 84.5 Q646 82.5 649 82.5 L757 82.5 Q760 82.5 760 85.5 L760 103.5 z" fill="url(#tbi)" stroke="#8e8e8e" stroke-width="1"/><path d="M560 103.5 L570 84.5 Q572 82.5 575 82.5 L630 82.5 Q633 82.5 633 85.5 L633 103.5 z" fill="url(#tbi)" stroke="#8e8e8e" stroke-width="1"/><path d="M452 103.5 L462 84.5 Q464 82.5 467 82.5 L556 82.5 Q559 82.5 559 85.5 L559 103.5 z" fill="url(#tbi)" stroke="#8e8e8e" stroke-width="1"/><path d="M260 103.5 L280 84.5 Q282 82.5 285 82.5 L364 82.5 Q367 82.5 367 85.5 L367 103.5 z" fill="url(#tbi)" stroke="#8e8e8e" stroke-width="1"/><path d="M256 103.500 H784" stroke="#8e8e8e" stroke-width="1"/><path d="M357 103.5 L376 84.5 Q378 82.5 381 82.5 L448 82.5 Q451 82.5 451 85.5 L451 103.5 z" fill="url(#tba)" stroke="none"/><path d="M357 103.5 L376 84.5 Q378 82.5 381 82.5 L448 82.5 Q451 82.5 451 85.5 L451 103.5" fill="none" stroke="#8e8e8e" stroke-width="1"/><path d="M376.500 85 L379.500 82 H448 Q451 82 451 85z" fill="#3b8cf2"/></svg>
<svg style="left:282px;top:86px" width="16" height="16" viewBox="0 0 16 16" ><path d="M8 1 L15 4.500 L15 11.500 L8 15 L1 11.500 L1 4.500z" fill="#f2c21a" stroke="#b07c00" stroke-width=".9"/><path d="M8 1 L15 4.500 L8 8 L1 4.500z" fill="#fff3b0" stroke="#c89a10" stroke-width=".6"/><path d="M8 8 L8 15 L1 11.500 L1 4.500z" fill="#f8d84a"/><path d="M8 8 L8 15 L15 11.500 L15 4.500z" fill="#d9a010"/><path d="M8 1 L15 4.500 L15 11.500 L8 15 L1 11.500 L1 4.500z" fill="none" stroke="#b07c00" stroke-width=".9"/></svg>
<span class="t" style="left:299.5px;top:88px;letter-spacing:-0.206px;">Data Analysis</span>
<svg style="left:378px;top:85px" width="16" height="16" viewBox="0 0 16 16" ><g shape-rendering="crispEdges"><rect x="1" y="2" width="14" height="13" fill="#2d9bf5"/><rect x="2" y="3" width="12" height="1" fill="#86c6fa"/><rect x="2" y="5" width="12" height="9" fill="#8c8c8c"/><rect x="2" y="5" width="3" height="1" fill="#fff"/><rect x="6" y="5" width="4" height="1" fill="#fff"/><rect x="11" y="5" width="3" height="1" fill="#fff"/><rect x="2" y="7" width="3" height="1" fill="#fff"/><rect x="6" y="7" width="4" height="1" fill="#fff"/><rect x="11" y="7" width="3" height="1" fill="#fff"/><rect x="2" y="9" width="3" height="1" fill="#fff"/><rect x="6" y="9" width="4" height="1" fill="#fff"/><rect x="11" y="9" width="3" height="1" fill="#fff"/><rect x="2" y="11" width="3" height="1" fill="#fff"/><rect x="6" y="11" width="4" height="1" fill="#fff"/><rect x="11" y="11" width="3" height="1" fill="#fff"/><rect x="2" y="13" width="3" height="1" fill="#fff"/><rect x="6" y="13" width="4" height="1" fill="#fff"/><rect x="11" y="13" width="3" height="1" fill="#fff"/></g></svg>
<span class="t" style="left:397px;top:88px;letter-spacing:-1.195px;">EMPLOYEE</span>
<svg style="left:463px;top:85px" width="17" height="16" viewBox="0 0 17 16" ><path d="M2.500 1.500 h8 l3 3 v10 h-11z" fill="#fff" stroke="#6a7a9a" stroke-width=".9"/><rect x="4" y="4" width="3" height="2.500" fill="#d04040"/><rect x="4" y="8" width="3" height="2.500" fill="#3a6ad0"/><rect x="4" y="12" width="3" height="2" fill="#30a040"/><path d="M8 5 h3 M8 9 h3" stroke="#888" stroke-width=".9"/><path d="M8 14 l1-3 l5-5 l2 2 l-5 5z" fill="#f0a020" stroke="#905000" stroke-width=".6"/><path d="M8 14 l1-3 l2 2z" fill="#f8e0a0"/></svg>
<span class="t" style="left:480px;top:88px;letter-spacing:-0.087px;">Report designer</span>
<svg style="left:570px;top:85px" width="16" height="16" viewBox="0 0 16 16" ><rect x="1.500" y="1.500" width="13" height="13" fill="#fff" stroke="#d98a3c"/><rect x="4" y="3.200" width="8" height="1.600" rx=".5" fill="#2e8a24"/><rect x="3.500" y="6.500" width="9" height="6.500" fill="#e4f6dc" stroke="#1f6a1c"/><path d="M4 8.500 h8 M4 10.700 h8" stroke="#58b048" stroke-width="1"/><path d="M6.200 7 v5.500 M9.200 7 v5.500" stroke="#e0a070" stroke-width=".9"/></svg>
<span class="t" style="left:589px;top:88px;letter-spacing:-0.254px;">Designer</span>
<svg style="left:643px;top:85px" width="16" height="16" viewBox="0 0 16 16" ><path d="M2.500 13.500 L2.500 3 L13 13.500z" fill="#e8f0ff" stroke="#2050c0" stroke-width="1.200"/><path d="M5 11.500 L5 8 L8.500 11.500z" fill="#fff" stroke="#2050c0" stroke-width=".8"/><path d="M1 15.500 h14" stroke="#2050c0" stroke-width="1"/><path d="M2 15 v-1 M4 15 v-1 M6 15 v-1 M8 15 v-1 M10 15 v-1 M12 15 v-1" stroke="#2050c0" stroke-width=".6"/><path d="M7 9 L13 2.500 L14.500 4 L8.500 10z" fill="#f0b030" stroke="#804000" stroke-width=".5"/><path d="M13 2.500 l1-1 l1.500 1.500 l-1 1z" fill="#e03030"/></svg>
<span class="t" style="left:662px;top:88px;letter-spacing:-0.209px;">Visual Quer</span>
<div style="left:716px;top:82px;width:68px;height:21px;background:#f0f0f0;"></div>
<div style="left:716px;top:83px;width:13px;height:17px;border:1px solid #a9a9a9;background:#f0f0f0;box-shadow:inset 0 0 0 1px #fafafa;"></div>
<svg style="left:716px;top:83px" width="13" height="17" viewBox="0 0 13 17" ><path d="M2.500 6.500 h8 l-4 4.500z" fill="#000"/></svg>
<div style="left:730px;top:83px;width:17px;height:17px;border:1px solid #a9a9a9;background:#f0f0f0;box-shadow:inset 0 0 0 1px #fafafa;"></div>
<svg style="left:730px;top:83px" width="17" height="17" viewBox="0 0 17 17" ><path d="M11 3.500 v10 l-5.500-5z" fill="#000"/></svg>
<div style="left:748px;top:83px;width:17px;height:17px;border:1px solid #a9a9a9;background:#f0f0f0;box-shadow:inset 0 0 0 1px #fafafa;"></div>
<svg style="left:748px;top:83px" width="17" height="17" viewBox="0 0 17 17" ><path d="M6.500 3.500 v10 l5.500-5z" fill="#000"/></svg>
<div style="left:768px;top:83px;width:16px;height:17px;border:1px solid #a9a9a9;background:#f0f0f0;box-shadow:inset 0 0 0 1px #fafafa;"></div>
<svg style="left:768px;top:83px" width="16" height="17" viewBox="0 0 16 17" ><path d="M4.500 5 l7.500 7.500 M12 5 l-7.500 7.500" stroke="#000" stroke-width="1.500"/></svg>
<div style="left:260px;top:104px;width:524px;height:691px;background:#f0f0f0;"></div>
<div style="left:260px;top:104px;width:185px;height:690px;background:linear-gradient(180deg,#c3c6da 0%,#b9bcd3 30%,#b3b6ce 60%,#b0b3cc 100%);"></div>
<div style="left:270px;top:116px;width:165px;height:25px;background:linear-gradient(90deg,#c8cbde 0%,#babdd3 50%,#aeb1ca 100%);"></div>
<div style="left:270px;top:141px;width:165px;height:56px;background:#eff0f6;"></div>
<span class="t b" style="left:290px;top:122px;letter-spacing:0.458px;">Object</span>
<svg style="left:418px;top:124px" width="8" height="10" viewBox="0 0 8 10" ><path d="M1 4.200 l3-3 l3 3 M1 8.700 l3-3 l3 3" stroke="#000" stroke-width="1.300" fill="none"/></svg>
<div style="left:270px;top:209px;width:165px;height:25px;background:linear-gradient(90deg,#c8cbde 0%,#babdd3 50%,#aeb1ca 100%);"></div>
<div style="left:270px;top:234px;width:165px;height:192px;background:#eff0f6;"></div>
<span class="t b" style="left:290px;top:215px;letter-spacing:0.429px;">General</span>
<svg style="left:418px;top:217px" width="8" height="10" viewBox="0 0 8 10" ><path d="M1 4.200 l3-3 l3 3 M1 8.700 l3-3 l3 3" stroke="#000" stroke-width="1.300" fill="none"/></svg>
<div style="left:270px;top:438px;width:165px;height:25px;background:linear-gradient(90deg,#c8cbde 0%,#babdd3 50%,#aeb1ca 100%);"></div>
<div style="left:270px;top:463px;width:165px;height:170px;background:#eff0f6;"></div>
<span class="t b" style="left:290px;top:444px;letter-spacing:0.723px;">Data Management</span>
<svg style="left:418px;top:446px" width="8" height="10" viewBox="0 0 8 10" ><path d="M1 4.200 l3-3 l3 3 M1 8.700 l3-3 l3 3" stroke="#000" stroke-width="1.300" fill="none"/></svg>
<div style="left:275px;top:145px;width:156px;height:21px;background:#fff;border:1px solid #828282;box-shadow:inset 1px 1px 0 #c8c8c8;"></div>
<div style="left:412px;top:147px;width:17px;height:17px;border:1px solid #707070;background:linear-gradient(180deg,#f6f6f6 0%,#e6e6e6 50%,#d2d2d2 100%);box-shadow:inset 0 0 0 1px #fff;"></div>
<svg style="left:412px;top:147px" width="17" height="17" viewBox="0 0 17 17" ><path d="M5 7.0 h7 l-3.500 4z" fill="#000"/></svg>
<div style="left:275px;top:170px;width:156px;height:21px;background:#fff;border:1px solid #828282;box-shadow:inset 1px 1px 0 #c8c8c8;"></div>
<div style="left:412px;top:172px;width:17px;height:17px;border:1px solid #707070;background:linear-gradient(180deg,#f6f6f6 0%,#e6e6e6 50%,#d2d2d2 100%);box-shadow:inset 0 0 0 1px #fff;"></div>
<svg style="left:412px;top:172px" width="17" height="17" viewBox="0 0 17 17" ><path d="M5 7.0 h7 l-3.500 4z" fill="#000"/></svg>
<svg style="left:279px;top:148px" width="16" height="17" viewBox="0 0 16 17" ><path d="M5.7 1.5 H10.3 L12.5 3.7 V13.3 L10.3 15.5 H5.7 L3.5 13.3 V3.7z" fill="url(#gd)" stroke="#c08c00" stroke-width="1" stroke-linejoin="round"/><path d="M5.7 2.5 H10.3 L11.5 4.0 H4.5z" fill="#fffde0" opacity=".85"/><path d="M4.0 9.200000000000001 H12.0" stroke="#c08c00" stroke-width=".9"/><path d="M4.5 10.200000000000001 H11.5" stroke="#fffde0" stroke-width=".7" opacity=".8"/></svg>
<span class="t b" style="left:299px;top:149px;letter-spacing:0.652px;">employee</span>
<svg style="left:279px;top:172px" width="16" height="16" viewBox="0 0 16 16" ><g shape-rendering="crispEdges"><rect x="1" y="2" width="14" height="13" fill="#2d9bf5"/><rect x="2" y="3" width="12" height="1" fill="#86c6fa"/><rect x="2" y="5" width="12" height="9" fill="#8c8c8c"/><rect x="2" y="5" width="3" height="1" fill="#fff"/><rect x="6" y="5" width="4" height="1" fill="#fff"/><rect x="11" y="5" width="3" height="1" fill="#fff"/><rect x="2" y="7" width="3" height="1" fill="#fff"/><rect x="6" y="7" width="4" height="1" fill="#fff"/><rect x="11" y="7" width="3" height="1" fill="#fff"/><rect x="2" y="9" width="3" height="1" fill="#fff"/><rect x="6" y="9" width="4" height="1" fill="#fff"/><rect x="11" y="9" width="3" height="1" fill="#fff"/><rect x="2" y="11" width="3" height="1" fill="#fff"/><rect x="6" y="11" width="4" height="1" fill="#fff"/><rect x="11" y="11" width="3" height="1" fill="#fff"/><rect x="2" y="13" width="3" height="1" fill="#fff"/><rect x="6" y="13" width="4" height="1" fill="#fff"/><rect x="11" y="13" width="3" height="1" fill="#fff"/></g></svg>
<span class="t" style="left:298px;top:174px;letter-spacing:-1.195px;">EMPLOYEE</span>
<svg style="left:274px;top:244.5px" width="16" height="17" viewBox="0 0 16 17" ><defs><linearGradient id="dg" x1="0" x2="1" y1="0" y2="1"><stop offset="0" stop-color="#ffffff"/><stop offset="1" stop-color="#c4dcf8"/></linearGradient></defs><path d="M2.500 .500 h8.500 l3 3 v13 h-11.500z" fill="url(#dg)" stroke="#5858b0" stroke-width="1"/><path d="M11 .500 v3 h3z" fill="#6aa0f0" stroke="#5858b0" stroke-width=".6"/><path d="M4.300 8.300 a4 4 0 0 1 6.600-2.600 l1.300-1.300 v4.200 h-4.200 l1.500-1.500 a2.200 2.200 0 0 0 -3.400 1.200z" fill="#18a830" stroke="#0a7a1c" stroke-width=".4"/><path d="M12.200 9.700 a4 4 0 0 1 -6.600 2.600 l-1.300 1.300 v-4.200 h4.200 l-1.500 1.500 a2.200 2.200 0 0 0 3.400 -1.200z" fill="#18a830" stroke="#0a7a1c" stroke-width=".4"/></svg>
<span class="t" style="left:293px;top:246px;letter-spacing:-0.076px;">Refresh</span>
<svg style="left:274px;top:267px" width="16" height="16" viewBox="0 0 16 16" ><path d="M15.500 1.500 L8 4 L10.500 5.500 L.5 14.500 L9.500 8.800 L7.500 7.500z" fill="#4a78e0" stroke="#1a3aa0" stroke-width=".8" stroke-linejoin="round"/><path d="M13 2.800 L9.500 4.200 L11.500 5.500 L5 10.500" stroke="#cfe0ff" stroke-width=".9" fill="none"/></svg>
<span class="t" style="left:293px;top:268px;letter-spacing:-0.248px;">Apply changes</span>
<svg style="left:274px;top:289px" width="16" height="16" viewBox="0 0 16 16" ><rect x="3.500" y="1.500" width="7" height="8" fill="#eaf2ff" stroke="#8a9ad0" stroke-width=".9"/><path d="M5 7.500 l2-3.500 l2 3.500z" fill="#1a3ab8"/><rect x=".5" y="6.500" width="7" height="8" fill="#eaf2ff" stroke="#8a9ad0" stroke-width=".9"/><path d="M2 12.500 l2-3.500 l2 3.500z" fill="#1a3ab8"/><path d="M10.5 7 H13.5 L15.0 8.5 V14.0 L13.5 15.5 H10.5 L9.0 14.0 V8.5z" fill="url(#gd)" stroke="#c08c00" stroke-width="1" stroke-linejoin="round"/><path d="M10.5 8 H13.5 L14.0 8.8 H10.0z" fill="#fffde0" opacity=".85"/><path d="M9.5 11.675 H14.5" stroke="#c08c00" stroke-width=".9"/><path d="M10.0 12.675 H14.0" stroke="#fffde0" stroke-width=".7" opacity=".8"/></svg>
<span class="t" style="left:293px;top:290px;letter-spacing:-0.136px;">Duplicate Table</span>
<svg style="left:274px;top:311px" width="16" height="17" viewBox="0 0 16 17" ><rect x=".5" y="3.500" width="10.500" height="9" fill="#fff" stroke="#5a6a88" stroke-width="1"/><rect x="2" y="5" width="7.500" height="6" fill="#1018c8"/><path d="M12.500 1.500 v13.500 M10.300 1 q1.700 0 2.200 1 q.5-1 2.200-1 M10.300 15.500 q1.700 0 2.200-1 q.5 1 2.200 1" stroke="#7886b4" stroke-width="1.500" fill="none"/></svg>
<span class="t" style="left:293px;top:312px;letter-spacing:-0.147px;">Rename Table</span>
<svg style="left:274px;top:333px" width="16" height="16" viewBox="0 0 16 16" ><path d="M2.500 2.500 l11 11 M13.500 2.500 l-11 11" stroke="#e02818" stroke-width="3" stroke-linecap="round"/><path d="M3 2.500 l10.500 10.500" stroke="#f8806a" stroke-width=".8"/></svg>
<span class="t" style="left:293px;top:334px;letter-spacing:-0.102px;">Drop Table</span>
<svg style="left:274px;top:355px" width="16" height="16" viewBox="0 0 16 16" ><path d="M5 1.500 h6 l1.500 5 h-9z" fill="#fff" stroke="#8090b0" stroke-width=".8"/><path d="M1 8 l3-2.500 h8 l3 2.500 v4 l-2 2 h-10 l-2-2z" fill="#d6d6d6" stroke="#6a6a6a" stroke-width=".8"/><path d="M1 10.500 h14" stroke="#8a8a8a" stroke-width=".8"/><path d="M3 12.500 h10" stroke="#555" stroke-width="1"/><rect x="7" y="2" width="3" height="1.500" fill="#5aa0ff"/></svg>
<span class="t" style="left:293px;top:356px;letter-spacing:0.068px;">Report structure</span>
<svg style="left:274px;top:377px" width="16" height="16" viewBox="0 0 16 16" ><circle cx="8" cy="8" r="7" fill="#2a62d8" stroke="#103a98"/><circle cx="8" cy="6" r="5.500" fill="#5a92f0" opacity=".6"/><path d="M5.700 6 a2.300 2.300 0 1 1 3.300 2.100 q-1 .6 -1 1.700" stroke="#fff" stroke-width="1.700" fill="none"/><rect x="7.100" y="11" width="1.800" height="1.800" fill="#fff"/></svg>
<span class="t" style="left:293px;top:378px;letter-spacing:-0.454px;">Show SQL Help</span>
<svg style="left:273px;top:397.5px" width="18" height="18" viewBox="0 0 18 18" ><circle cx="9" cy="12" r="4.800" fill="#f4c010" stroke="#e0a400" stroke-width="3" stroke-dasharray="2.300 1.480"/><circle cx="9" cy="12" r="4.600" fill="#f8cc20"/><ellipse cx="7.500" cy="11" rx="3" ry="2" fill="#ffe870" opacity=".8"/><rect x="6.300" y="1" width="5.400" height="11" rx="2.300" fill="url(#gy)" stroke="#6a6a78" stroke-width=".9"/><rect x="7.600" y="2" width="1.300" height="9" fill="#fafafa" opacity=".9"/></svg>
<span class="t" style="left:293px;top:400px;letter-spacing:-0.011px;">Configure table editor</span>
<svg style="left:274px;top:474px" width="16" height="16" viewBox="0 0 16 16" ><path d="M3.500 3 v10.500 h3 M3.500 8 h3 M3.500 3.500 h0" stroke="#2050c0" stroke-width="1.200" fill="none"/><rect x="2" y="1" width="5" height="3" fill="#2a5ad0"/><rect x="7" y="6.500" width="6" height="3" fill="#2a5ad0"/><rect x="7" y="12" width="6" height="3" fill="#2a5ad0"/><rect x="8" y="1.500" width="5" height="2" fill="#7aa0e8"/></svg>
<span class="t" style="left:293px;top:475px;letter-spacing:-0.182px;">Show/Hide details</span>
<svg style="left:274px;top:496px" width="16" height="16" viewBox="0 0 16 16" ><path d="M2.500 1 h8 l3 3 v11 h-11z" fill="#e4eeff" stroke="#6a6ab0" stroke-width=".9"/><path d="M10.500 1 v3 h3z" fill="#8ab0f0"/><path d="M6.0 5 H9.0 L10.5 6.5 V12.0 L9.0 13.5 H6.0 L4.5 12.0 V6.5z" fill="url(#gd)" stroke="#c08c00" stroke-width="1" stroke-linejoin="round"/><path d="M6.0 6 H9.0 L9.5 6.8 H5.5z" fill="#fffde0" opacity=".85"/><path d="M5.0 9.675 H10.0" stroke="#c08c00" stroke-width=".9"/><path d="M5.5 10.675 H9.5" stroke="#fffde0" stroke-width=".7" opacity=".8"/></svg>
<span class="t" style="left:293px;top:497px;letter-spacing:-0.107px;">Generate query</span>
<svg style="left:274px;top:518px" width="16" height="16" viewBox="0 0 16 16" ><rect x="1" y="2.500" width="14" height="11.500" rx="1.500" fill="#fff" stroke="#1f6fe0" stroke-width="1.200"/><rect x="1.500" y="3" width="13" height="1.800" fill="#2a7ae8"/><path d="M3.500 7.500 h3 M8 7.500 h4.500 M3.500 10.500 h3" stroke="#777" stroke-width="1.200"/><rect x="8" y="9.700" width="4.500" height="1.700" fill="#f0d040"/></svg>
<span class="t" style="left:293px;top:519px;letter-spacing:0.050px;">Data input form</span>
<svg style="left:274px;top:540px" width="16" height="16" viewBox="0 0 16 16" ><rect x="1" y="2.500" width="9.500" height="6" rx="1" fill="#fff" stroke="#2a86e0"/><path d="M2.500 4.700 h4.500 M2.500 6.500 h4.500" stroke="#4a9ae8" stroke-width="1"/><path d="M8.500 7.500 h4 l2 2 v6 h-6z" fill="#fff" stroke="#6a7aa0" stroke-width=".8"/><circle cx="11.500" cy="12.500" r="1.600" fill="#e03020"/><path d="M9 1 l5 2.500 l-5 2.500 v-1.500 h-2 v-2 h2z" fill="#20a030" stroke="#0a6018" stroke-width=".5" transform="translate(2,0)"/></svg>
<span class="t" style="left:293px;top:541px;letter-spacing:-0.028px;">Export data</span>
<svg style="left:274px;top:562px" width="16" height="16" viewBox="0 0 16 16" ><rect x="1" y="2.500" width="9.500" height="6" rx="1" fill="#fff" stroke="#2a86e0"/><path d="M2.500 4.700 h4.500 M2.500 6.500 h4.500" stroke="#4a9ae8" stroke-width="1"/><path d="M8.500 7.500 h4 l2 2 v6 h-6z" fill="#fff" stroke="#6a7aa0" stroke-width=".8"/><path d="M9.500 14.500 l2-3.500 l2 3.500z" fill="#1a3ab0"/><path d="M9 1 l5 2.500 l-5 2.500 v-1.500 h-2 v-2 h2z" fill="#20a030" stroke="#0a6018" stroke-width=".5" transform="translate(2,0)"/></svg>
<span class="t" style="left:293px;top:563px;letter-spacing:-0.336px;">Get SQL dump</span>
<svg style="left:274px;top:584px" width="16" height="16" viewBox="0 0 16 16" ><rect x="1" y="2.500" width="9.500" height="6" rx="1" fill="#fff" stroke="#2a86e0"/><path d="M2.500 4.700 h4.500 M2.500 6.500 h4.500" stroke="#4a9ae8" stroke-width="1"/><path d="M8.500 7.500 h4 l2 2 v6 h-6z" fill="#fff" stroke="#6a7aa0" stroke-width=".8"/><circle cx="11.500" cy="12.500" r="1.600" fill="#e03020"/><path d="M14 1 l-5 2.500 l5 2.500 v-1.500 h2 v-2 h-2z" fill="#20a030" stroke="#0a6018" stroke-width=".5" transform="translate(-1,0)"/></svg>
<span class="t" style="left:293px;top:585px;letter-spacing:0.210px;">Import data</span>
<svg style="left:274px;top:606px" width="16" height="16" viewBox="0 0 16 16" ><path d="M5 1.500 h6 l1.500 5 h-9z" fill="#fff" stroke="#8090b0" stroke-width=".8"/><path d="M1 8 l3-2.500 h8 l3 2.500 v4 l-2 2 h-10 l-2-2z" fill="#d6d6d6" stroke="#6a6a6a" stroke-width=".8"/><path d="M1 10.500 h14" stroke="#8a8a8a" stroke-width=".8"/><path d="M3 12.500 h10" stroke="#555" stroke-width="1"/><rect x="7" y="2" width="3" height="1.500" fill="#5aa0ff"/></svg>
<span class="t" style="left:293px;top:607px;letter-spacing:-0.013px;">Print data</span>
<svg style="left:253px;top:343px" width="6" height="213" viewBox="0 0 6 213" shape-rendering="crispEdges"><rect x="0" y="0" width="2" height="2" fill="#9a9a9a"/><rect x="3" y="3" width="2" height="2" fill="#9a9a9a"/><rect x="0" y="6" width="2" height="2" fill="#9a9a9a"/><rect x="3" y="9" width="2" height="2" fill="#9a9a9a"/><rect x="0" y="12" width="2" height="2" fill="#9a9a9a"/><rect x="3" y="15" width="2" height="2" fill="#9a9a9a"/><rect x="0" y="18" width="2" height="2" fill="#9a9a9a"/><rect x="3" y="21" width="2" height="2" fill="#9a9a9a"/><rect x="0" y="24" width="2" height="2" fill="#9a9a9a"/><rect x="3" y="27" width="2" height="2" fill="#9a9a9a"/><rect x="0" y="30" width="2" height="2" fill="#9a9a9a"/><rect x="3" y="33" width="2" height="2" fill="#9a9a9a"/><rect x="0" y="36" width="2" height="2" fill="#9a9a9a"/><rect x="3" y="39" width="2" height="2" fill="#9a9a9a"/><rect x="0" y="42" width="2" height="2" fill="#9a9a9a"/><rect x="3" y="45" width="2" height="2" fill="#9a9a9a"/><rect x="0" y="48" width="2" height="2" fill="#9a9a9a"/><rect x="3" y="51" width="2" height="2" fill="#9a9a9a"/><rect x="0" y="54" width="2" height="2" fill="#9a9a9a"/><rect x="3" y="57" width="2" height="2" fill="#9a9a9a"/><rect x="0" y="60" width="2" height="2" fill="#9a9a9a"/><rect x="3" y="63" width="2" height="2" fill="#9a9a9a"/><rect x="0" y="66" width="2" height="2" fill="#9a9a9a"/><rect x="3" y="69" width="2" height="2" fill="#9a9a9a"/><rect x="0" y="72" width="2" height="2" fill="#9a9a9a"/><rect x="3" y="75" width="2" height="2" fill="#9a9a9a"/><rect x="0" y="78" width="2" height="2" fill="#9a9a9a"/><rect x="3" y="81" width="2" height="2" fill="#9a9a9a"/><rect x="0" y="84" width="2" height="2" fill="#9a9a9a"/><rect x="3" y="87" width="2" height="2" fill="#9a9a9a"/><rect x="0" y="90" width="2" height="2" fill="#9a9a9a"/><rect x="3" y="93" width="2" height="2" fill="#9a9a9a"/><rect x="0" y="96" width="2" height="2" fill="#9a9a9a"/><rect x="3" y="99" width="2" height="2" fill="#9a9a9a"/><rect x="0" y="102" width="2" height="2" fill="#9a9a9a"/><rect x="3" y="105" width="2" height="2" fill="#9a9a9a"/><rect x="0" y="108" width="2" height="2" fill="#9a9a9a"/><rect x="3" y="111" width="2" height="2" fill="#9a9a9a"/><rect x="0" y="114" width="2" height="2" fill="#9a9a9a"/><rect x="3" y="117" width="2" height="2" fill="#9a9a9a"/><rect x="0" y="120" width="2" height="2" fill="#9a9a9a"/><rect x="3" y="123" width="2" height="2" fill="#9a9a9a"/><rect x="0" y="126" width="2" height="2" fill="#9a9a9a"/><rect x="3" y="129" width="2" height="2" fill="#9a9a9a"/><rect x="0" y="132" width="2" height="2" fill="#9a9a9a"/><rect x="3" y="135" width="2" height="2" fill="#9a9a9a"/><rect x="0" y="138" width="2" height="2" fill="#9a9a9a"/><rect x="3" y="141" width="2" height="2" fill="#9a9a9a"/><rect x="0" y="144" width="2" height="2" fill="#9a9a9a"/><rect x="3" y="147" width="2" height="2" fill="#9a9a9a"/><rect x="0" y="150" width="2" height="2" fill="#9a9a9a"/><rect x="3" y="153" width="2" height="2" fill="#9a9a9a"/><rect x="0" y="156" width="2" height="2" fill="#9a9a9a"/><rect x="3" y="159" width="2" height="2" fill="#9a9a9a"/><rect x="0" y="162" width="2" height="2" fill="#9a9a9a"/><rect x="3" y="165" width="2" height="2" fill="#9a9a9a"/><rect x="0" y="168" width="2" height="2" fill="#9a9a9a"/><rect x="3" y="171" width="2" height="2" fill="#9a9a9a"/><rect x="0" y="174" width="2" height="2" fill="#9a9a9a"/><rect x="3" y="177" width="2" height="2" fill="#9a9a9a"/><rect x="0" y="180" width="2" height="2" fill="#9a9a9a"/><rect x="3" y="183" width="2" height="2" fill="#9a9a9a"/><rect x="0" y="186" width="2" height="2" fill="#9a9a9a"/><rect x="3" y="189" width="2" height="2" fill="#9a9a9a"/><rect x="0" y="192" width="2" height="2" fill="#9a9a9a"/><rect x="3" y="195" width="2" height="2" fill="#9a9a9a"/><rect x="0" y="198" width="2" height="2" fill="#9a9a9a"/><rect x="3" y="201" width="2" height="2" fill="#9a9a9a"/><rect x="0" y="204" width="2" height="2" fill="#9a9a9a"/><rect x="3" y="207" width="2" height="2" fill="#9a9a9a"/><rect x="0" y="210" width="2" height="2" fill="#9a9a9a"/><rect x="3" y="213" width="2" height="2" fill="#9a9a9a"/></svg>
<svg style="left:446px;top:350px" width="6" height="202" viewBox="0 0 6 202" shape-rendering="crispEdges"><rect x="0" y="0" width="2" height="2" fill="#9a9a9a"/><rect x="3" y="3" width="2" height="2" fill="#9a9a9a"/><rect x="0" y="6" width="2" height="2" fill="#9a9a9a"/><rect x="3" y="9" width="2" height="2" fill="#9a9a9a"/><rect x="0" y="12" width="2" height="2" fill="#9a9a9a"/><rect x="3" y="15" width="2" height="2" fill="#9a9a9a"/><rect x="0" y="18" width="2" height="2" fill="#9a9a9a"/><rect x="3" y="21" width="2" height="2" fill="#9a9a9a"/><rect x="0" y="24" width="2" height="2" fill="#9a9a9a"/><rect x="3" y="27" width="2" height="2" fill="#9a9a9a"/><rect x="0" y="30" width="2" height="2" fill="#9a9a9a"/><rect x="3" y="33" width="2" height="2" fill="#9a9a9a"/><rect x="0" y="36" width="2" height="2" fill="#9a9a9a"/><rect x="3" y="39" width="2" height="2" fill="#9a9a9a"/><rect x="0" y="42" width="2" height="2" fill="#9a9a9a"/><rect x="3" y="45" width="2" height="2" fill="#9a9a9a"/><rect x="0" y="48" width="2" height="2" fill="#9a9a9a"/><rect x="3" y="51" width="2" height="2" fill="#9a9a9a"/><rect x="0" y="54" width="2" height="2" fill="#9a9a9a"/><rect x="3" y="57" width="2" height="2" fill="#9a9a9a"/><rect x="0" y="60" width="2" height="2" fill="#9a9a9a"/><rect x="3" y="63" width="2" height="2" fill="#9a9a9a"/><rect x="0" y="66" width="2" height="2" fill="#9a9a9a"/><rect x="3" y="69" width="2" height="2" fill="#9a9a9a"/><rect x="0" y="72" width="2" height="2" fill="#9a9a9a"/><rect x="3" y="75" width="2" height="2" fill="#9a9a9a"/><rect x="0" y="78" width="2" height="2" fill="#9a9a9a"/><rect x="3" y="81" width="2" height="2" fill="#9a9a9a"/><rect x="0" y="84" width="2" height="2" fill="#9a9a9a"/><rect x="3" y="87" width="2" height="2" fill="#9a9a9a"/><rect x="0" y="90" width="2" height="2" fill="#9a9a9a"/><rect x="3" y="93" width="2" height="2" fill="#9a9a9a"/><rect x="0" y="96" width="2" height="2" fill="#9a9a9a"/><rect x="3" y="99" width="2" height="2" fill="#9a9a9a"/><rect x="0" y="102" width="2" height="2" fill="#9a9a9a"/><rect x="3" y="105" width="2" height="2" fill="#9a9a9a"/><rect x="0" y="108" width="2" height="2" fill="#9a9a9a"/><rect x="3" y="111" width="2" height="2" fill="#9a9a9a"/><rect x="0" y="114" width="2" height="2" fill="#9a9a9a"/><rect x="3" y="117" width="2" height="2" fill="#9a9a9a"/><rect x="0" y="120" width="2" height="2" fill="#9a9a9a"/><rect x="3" y="123" width="2" height="2" fill="#9a9a9a"/><rect x="0" y="126" width="2" height="2" fill="#9a9a9a"/><rect x="3" y="129" width="2" height="2" fill="#9a9a9a"/><rect x="0" y="132" width="2" height="2" fill="#9a9a9a"/><rect x="3" y="135" width="2" height="2" fill="#9a9a9a"/><rect x="0" y="138" width="2" height="2" fill="#9a9a9a"/><rect x="3" y="141" width="2" height="2" fill="#9a9a9a"/><rect x="0" y="144" width="2" height="2" fill="#9a9a9a"/><rect x="3" y="147" width="2" height="2" fill="#9a9a9a"/><rect x="0" y="150" width="2" height="2" fill="#9a9a9a"/><rect x="3" y="153" width="2" height="2" fill="#9a9a9a"/><rect x="0" y="156" width="2" height="2" fill="#9a9a9a"/><rect x="3" y="159" width="2" height="2" fill="#9a9a9a"/><rect x="0" y="162" width="2" height="2" fill="#9a9a9a"/><rect x="3" y="165" width="2" height="2" fill="#9a9a9a"/><rect x="0" y="168" width="2" height="2" fill="#9a9a9a"/><rect x="3" y="171" width="2" height="2" fill="#9a9a9a"/><rect x="0" y="174" width="2" height="2" fill="#9a9a9a"/><rect x="3" y="177" width="2" height="2" fill="#9a9a9a"/><rect x="0" y="180" width="2" height="2" fill="#9a9a9a"/><rect x="3" y="183" width="2" height="2" fill="#9a9a9a"/><rect x="0" y="186" width="2" height="2" fill="#9a9a9a"/><rect x="3" y="189" width="2" height="2" fill="#9a9a9a"/><rect x="0" y="192" width="2" height="2" fill="#9a9a9a"/><rect x="3" y="195" width="2" height="2" fill="#9a9a9a"/><rect x="0" y="198" width="2" height="2" fill="#9a9a9a"/><rect x="3" y="201" width="2" height="2" fill="#9a9a9a"/></svg>
<div style="left:260px;top:795px;width:524px;height:20px;background:#c3d5f7;"></div>
<div style="left:260px;top:795px;width:303px;height:20px;background:linear-gradient(180deg,#dde8fb 0%,#cfdef9 40%,#b3cbf5 70%,#8fb1ea 100%);border:1px solid #7c9edd;border-bottom-color:#6a8cd0;box-shadow:inset 1px 1px 0 rgba(255,255,255,.55);"></div>
<div style="left:565px;top:795px;width:83px;height:20px;background:linear-gradient(180deg,#dde8fb 0%,#cfdef9 40%,#b3cbf5 70%,#8fb1ea 100%);border:1px solid #7c9edd;border-bottom-color:#6a8cd0;box-shadow:inset 1px 1px 0 rgba(255,255,255,.55);"></div>
<div style="left:650px;top:795px;width:134px;height:20px;background:linear-gradient(180deg,#dde8fb 0%,#cfdef9 40%,#b3cbf5 70%,#8fb1ea 100%);border:1px solid #7c9edd;border-bottom-color:#6a8cd0;box-shadow:inset 1px 1px 0 rgba(255,255,255,.55);"></div>
<span class="t" style="left:263px;top:797px;letter-spacing:-0.109px;font-size:11px;">Database: employee</span>
<div style="left:453px;top:125px;width:329px;height:667px;background:#fff;border:1px solid #8b909e;"></div>
<div style="left:457px;top:129px;width:321px;height:660px;background:#fff;border:1px solid #8b909e;"></div>
<div style="left:461px;top:133px;width:315px;height:654px;background:#f0f0f0;"></div>
<div style="left:455px;top:106px;width:82px;height:19px;background:linear-gradient(180deg,#f6f6f6 0%,#ececec 50%,#dcdcdc 100%);border:1px solid #8e8e8e;border-bottom:none;border-radius:2px 2px 0 0;box-shadow:inset 1px 1px 0 #fff;"></div>
<div style="left:596px;top:106px;width:50px;height:19px;background:linear-gradient(180deg,#f6f6f6 0%,#ececec 50%,#dcdcdc 100%);border:1px solid #8e8e8e;border-bottom:none;border-radius:2px 2px 0 0;box-shadow:inset 1px 1px 0 #fff;"></div>
<div style="left:536px;top:104px;width:61px;height:23px;background:#fff;border:1px solid #8e8e8e;border-bottom:none;border-radius:2px 2px 0 0;"></div>
<svg style="left:461px;top:107px" width="16" height="16" viewBox="0 0 16 16" ><g shape-rendering="crispEdges"><rect x="1" y="2" width="14" height="13" fill="#2d9bf5"/><rect x="2" y="3" width="12" height="1" fill="#86c6fa"/><rect x="2" y="5" width="12" height="9" fill="#8c8c8c"/><rect x="2" y="5" width="3" height="1" fill="#fff"/><rect x="6" y="5" width="4" height="1" fill="#fff"/><rect x="11" y="5" width="3" height="1" fill="#fff"/><rect x="2" y="7" width="3" height="1" fill="#fff"/><rect x="6" y="7" width="4" height="1" fill="#fff"/><rect x="11" y="7" width="3" height="1" fill="#fff"/><rect x="2" y="9" width="3" height="1" fill="#fff"/><rect x="6" y="9" width="4" height="1" fill="#fff"/><rect x="11" y="9" width="3" height="1" fill="#fff"/><rect x="2" y="11" width="3" height="1" fill="#fff"/><rect x="6" y="11" width="4" height="1" fill="#fff"/><rect x="11" y="11" width="3" height="1" fill="#fff"/><rect x="2" y="13" width="3" height="1" fill="#fff"/><rect x="6" y="13" width="4" height="1" fill="#fff"/><rect x="11" y="13" width="3" height="1" fill="#fff"/></g></svg>
<span class="t" style="left:482px;top:110px;letter-spacing:-0.116px;"><u>P</u>roperties</span>
<svg style="left:544px;top:107px" width="16" height="16" viewBox="0 0 16 16" ><rect x="1" y="2.500" width="14" height="11.500" rx="1.500" fill="#fff" stroke="#1f6fe0" stroke-width="1.200"/><rect x="1.500" y="3" width="13" height="1.800" fill="#2a7ae8"/><path d="M3.500 7.500 h3 M8 7.500 h4.500 M3.500 10.500 h3" stroke="#777" stroke-width="1.200"/><rect x="8" y="9.700" width="4.500" height="1.700" fill="#f0d040"/></svg>
<span class="t" style="left:565px;top:108px;letter-spacing:-0.062px;">Data</span>
<svg style="left:602px;top:108px" width="16" height="16" viewBox="0 0 16 16" ><path d="M2.500 1 h8 l3 3 v11 h-11z" fill="#e4eeff" stroke="#6a6ab0" stroke-width=".9"/><path d="M10.500 1 v3 h3z" fill="#8ab0f0"/><path d="M6.0 5 H9.0 L10.5 6.5 V12.0 L9.0 13.5 H6.0 L4.5 12.0 V6.5z" fill="url(#gd)" stroke="#c08c00" stroke-width="1" stroke-linejoin="round"/><path d="M6.0 6 H9.0 L9.5 6.8 H5.5z" fill="#fffde0" opacity=".85"/><path d="M5.0 9.675 H10.0" stroke="#c08c00" stroke-width=".9"/><path d="M5.5 10.675 H9.5" stroke="#fffde0" stroke-width=".7" opacity=".8"/></svg>
<span class="t" style="left:622px;top:110px;letter-spacing:-1.010px;"><u>S</u>QL</span>
<div style="left:461px;top:137px;width:229px;height:25px;background:#fff;border:1px solid #9c9c9c;"></div>
<div style="left:463px;top:139px;width:17px;height:21px;background:#f0f0f0;"></div>
<svg style="left:464px;top:142px" width="15" height="15" viewBox="0 0 15 15" ><rect x=".5" y=".5" width="13.500" height="13.500" rx="1.600" fill="url(#ng)" stroke="#a8a8a8"/><rect x="3.500" y="3.500" width="1.600" height="8" fill="#ececec"/><path d="M11.500 3.500 v8 l-5.500-4z" fill="#ececec"/></svg>
<div style="left:482px;top:139px;width:17px;height:21px;background:#f0f0f0;"></div>
<svg style="left:483px;top:142px" width="15" height="15" viewBox="0 0 15 15" ><rect x=".5" y=".5" width="13.500" height="13.500" rx="1.600" fill="url(#ng)" stroke="#a8a8a8"/><path d="M10.500 3.500 v8 l-6-4z" fill="#ececec"/></svg>
<div style="left:501px;top:139px;width:17px;height:21px;background:#f0f0f0;"></div>
<svg style="left:502px;top:142px" width="15" height="15" viewBox="0 0 15 15" ><rect x=".5" y=".5" width="13.500" height="13.500" rx="1.600" fill="url(#nb)" stroke="#0a3c90"/><rect x="1.500" y="1.500" width="11.500" height="5" rx="1.200" fill="#6aa8f4" opacity=".55"/><path d="M4.500 3 v9 l6.500-4.500z" fill="#fff"/></svg>
<div style="left:520px;top:139px;width:17px;height:21px;background:#f0f0f0;"></div>
<svg style="left:521px;top:142px" width="15" height="15" viewBox="0 0 15 15" ><rect x=".5" y=".5" width="13.500" height="13.500" rx="1.600" fill="url(#nb)" stroke="#0a3c90"/><rect x="1.500" y="1.500" width="11.500" height="5" rx="1.200" fill="#6aa8f4" opacity=".55"/><rect x="10" y="3" width="1.700" height="9" fill="#fff"/><path d="M3.500 3 v9 l6-4.500z" fill="#fff"/></svg>
<div style="left:539px;top:139px;width:17px;height:21px;background:#f0f0f0;"></div>
<svg style="left:540px;top:142px" width="15" height="15" viewBox="0 0 15 15" ><rect x=".5" y=".5" width="13.500" height="13.500" rx="1.600" fill="url(#nb)" stroke="#0a3c90"/><rect x="1.500" y="1.500" width="11.500" height="5" rx="1.200" fill="#6aa8f4" opacity=".55"/><path d="M7.500 3.500 v8 M3.500 7.500 h8" stroke="#fff" stroke-width="2"/></svg>
<div style="left:558px;top:139px;width:17px;height:21px;background:#f0f0f0;"></div>
<svg style="left:559px;top:142px" width="15" height="15" viewBox="0 0 15 15" ><rect x=".5" y=".5" width="13.500" height="13.500" rx="1.600" fill="url(#nb)" stroke="#0a3c90"/><rect x="1.500" y="1.500" width="11.500" height="5" rx="1.200" fill="#6aa8f4" opacity=".55"/><path d="M3.500 7.500 h8" stroke="#fff" stroke-width="2"/></svg>
<div style="left:577px;top:139px;width:16px;height:21px;background:#f0f0f0;"></div>
<svg style="left:578px;top:142px" width="15" height="15" viewBox="0 0 15 15" ><rect x=".5" y=".5" width="13.500" height="13.500" rx="1.600" fill="url(#nb)" stroke="#0a3c90"/><rect x="1.500" y="1.500" width="11.500" height="5" rx="1.200" fill="#6aa8f4" opacity=".55"/><path d="M3 10.500 h9 l-4.500-6z" fill="#fff"/></svg>
<div style="left:595px;top:139px;width:17px;height:21px;background:#f0f0f0;"></div>
<svg style="left:597px;top:142px" width="15" height="15" viewBox="0 0 15 15" ><rect x=".5" y=".5" width="13.500" height="13.500" rx="1.600" fill="url(#ng)" stroke="#a8a8a8"/><path d="M3.500 8 l2.500 2.500 l5.500-6" stroke="#ececec" stroke-width="1.500" fill="none"/></svg>
<div style="left:614px;top:139px;width:17px;height:21px;background:#f0f0f0;"></div>
<svg style="left:616px;top:142px" width="15" height="15" viewBox="0 0 15 15" ><rect x=".5" y=".5" width="13.500" height="13.500" rx="1.600" fill="url(#ng)" stroke="#a8a8a8"/><path d="M3.500 3.500 l8 8 M11.500 3.500 l-8 8" stroke="#ececec" stroke-width="1.400"/></svg>
<div style="left:633px;top:139px;width:17px;height:21px;background:#f0f0f0;"></div>
<svg style="left:635px;top:142px" width="15" height="15" viewBox="0 0 15 15" ><rect x=".5" y=".5" width="13.500" height="13.500" rx="1.600" fill="url(#nb)" stroke="#0a3c90"/><rect x="1.500" y="1.500" width="11.500" height="5" rx="1.200" fill="#6aa8f4" opacity=".55"/><path d="M4 7 a3.500 3.500 0 0 1 6.500-1.500 M11 8 a3.500 3.500 0 0 1 -6.500 1.500" stroke="#fff" stroke-width="1.500" fill="none"/><path d="M11.500 3 v3.500 h-3.500z M3.500 12 v-3.500 h3.500z" fill="#fff"/></svg>
<div style="left:652px;top:139px;width:17px;height:21px;background:#f0f0f0;"></div>
<svg style="left:654px;top:142px" width="15" height="15" viewBox="0 0 15 15" ><rect x=".5" y=".5" width="13.500" height="13.500" rx="1.600" fill="url(#nb)" stroke="#0a3c90"/><rect x="1.500" y="1.500" width="11.500" height="5" rx="1.200" fill="#6aa8f4" opacity=".55"/><path d="M7.500 2.500 v10 M2.500 7.500 h10 M4 4 l7 7 M11 4 l-7 7" stroke="#fff" stroke-width="1.300"/><circle cx="7.500" cy="7.500" r="2.300" fill="#fff"/></svg>
<div style="left:671px;top:139px;width:17px;height:21px;background:#f0f0f0;"></div>
<svg style="left:673px;top:142px" width="15" height="15" viewBox="0 0 15 15" ><rect x=".5" y=".5" width="13.500" height="13.500" rx="1.600" fill="url(#ng)" stroke="#a8a8a8"/><path d="M7.500 2.500 v10 M2.500 7.500 h10 M4 4 l7 7 M11 4 l-7 7" stroke="#ececec" stroke-width="1.300"/><circle cx="7.500" cy="7.500" r="2.300" fill="#ececec"/><path d="M2 3 l4 3" stroke="#ececec" stroke-width="1.200"/></svg>
<div style="left:697px;top:140px;width:75px;height:21px;background:#fff;border:1px solid #828282;border-left:none;box-shadow:inset 0 1px 0 #c8c8c8;"></div>
<div style="left:753px;top:142px;width:17px;height:17px;border:1px solid #707070;background:linear-gradient(180deg,#f6f6f6 0%,#e6e6e6 50%,#d2d2d2 100%);box-shadow:inset 0 0 0 1px #fff;"></div>
<svg style="left:753px;top:142px" width="17" height="17" viewBox="0 0 17 17" ><path d="M5 7 h7 l-3.500 4z" fill="#000"/></svg>
<div style="left:697px;top:141px;width:40px;height:19px;overflow:hidden;"><span class="t" style="left:-3px;top:3px;letter-spacing:-0.062px;">Table</span></div>
<div style="left:461px;top:167px;width:315px;height:600px;background:#fff;border:1px solid #8c8c8c;"></div>
<div style="left:462px;top:168px;width:296px;height:34px;background:#a0a0a0;"></div>
<span class="t" style="left:469px;top:179px;letter-spacing:-0.064px;color:#e6e6e6;">Drag a column header here to group by that column</span>
<div style="left:462px;top:202px;width:296px;height:18px;background:linear-gradient(180deg,#fff 0%,#fff 35%,#f3f4f8 45%,#f1f2f6 90%,#e4e4e8 100%);"></div>
<svg style="left:499px;top:206px" width="9" height="12" viewBox="0 0 9 12" ><g fill="#000"><rect x="1" y="1" width="1.200" height="1.300"/><rect x="3" y="1" width="5" height="1.300"/><rect x="1" y="3.670" width="1.200" height="1.300"/><rect x="3" y="3.670" width="5" height="1.300"/><rect x="1" y="6.330" width="1.200" height="1.300"/><rect x="3" y="6.330" width="5" height="1.300"/><rect x="1" y="9" width="1.200" height="1.300"/><rect x="3" y="9" width="5" height="1.300"/></g></svg>
<svg style="left:511px;top:205px" width="12" height="12" viewBox="0 0 12 12" ><circle cx="7.500" cy="4" r="2.600" fill="#ffe060" stroke="#a07800" stroke-width="1.200"/><circle cx="8" cy="3.500" r=".9" fill="#fff"/><path d="M5.500 6 l-4 4 l1.500 1.500 l1.200-1.200 l-.8-.8 l1-1 l.8.800 l1.800-1.800z" fill="#ffd030" stroke="#a07800" stroke-width=".8"/></svg>
<div style="left:524px;top:205px;width:15px;height:13px;border:1px solid #707070;background:linear-gradient(180deg,#fdfdfd 0%,#e8e8e8 60%,#d4d4d4 100%);box-shadow:inset 0 0 0 1px #fff;"></div>
<svg style="left:524px;top:205px" width="15" height="13" viewBox="0 0 15 13" ><path d="M4 7.500 h7 l-3.500 3.500z" fill="#000"/></svg>
<div style="left:610px;top:205px;width:15px;height:13px;border:1px solid #707070;background:linear-gradient(180deg,#fdfdfd 0%,#e8e8e8 60%,#d4d4d4 100%);box-shadow:inset 0 0 0 1px #fff;"></div>
<svg style="left:610px;top:205px" width="15" height="13" viewBox="0 0 15 13" ><path d="M4 7.500 h7 l-3.500 3.500z" fill="#000"/></svg>
<div style="left:692px;top:205px;width:15px;height:13px;border:1px solid #707070;background:linear-gradient(180deg,#fdfdfd 0%,#e8e8e8 60%,#d4d4d4 100%);box-shadow:inset 0 0 0 1px #fff;"></div>
<svg style="left:692px;top:205px" width="15" height="13" viewBox="0 0 15 13" ><path d="M4 7.500 h7 l-3.500 3.500z" fill="#000"/></svg>
<div style="left:752px;top:205px;width:6px;height:13px;overflow:hidden;"><div style="left:0px;top:0px;width:15px;height:13px;border:1px solid #707070;background:linear-gradient(180deg,#fdfdfd 0%,#e8e8e8 60%,#d4d4d4 100%);box-shadow:inset 0 0 0 1px #fff;"></div><svg style="left:0px;top:0px" width="15" height="13" viewBox="0 0 15 13" ><path d="M4 7.500 h7 l-3.500 3.500z" fill="#000"/></svg></div>
<span class="t" style="left:542px;top:205px;letter-spacing:-0.669px;">FIRST_NAME</span>
<span class="t" style="left:628px;top:205px;letter-spacing:-0.826px;">LAST_NAME</span>
<span class="t" style="left:710px;top:205px;letter-spacing:-0.734px;">JOB_CC</span>
<div style="left:539px;top:204px;width:1px;height:14px;background:#e4e4e4;"></div>
<div style="left:625px;top:204px;width:1px;height:14px;background:#e4e4e4;"></div>
<div style="left:707px;top:204px;width:1px;height:14px;background:#e4e4e4;"></div>
<div style="left:462px;top:220px;width:36px;height:19px;background:linear-gradient(180deg,#fff4e6 0%,#fde3c0 45%,#fbd3a0 100%);border-left:1px solid #e8aa66;border-bottom:1px solid #e8aa66;border-right:1px solid #b8b8b8;box-shadow:inset 1px 0 0 rgba(255,255,255,.6);"></div>
<div style="left:498px;top:220px;width:11px;height:19px;background:linear-gradient(180deg,#fff4e6 0%,#fde3c0 45%,#fbd3a0 100%);border-right:1px solid #e8aa66;border-bottom:1px solid #e8aa66;"></div>
<svg style="left:500px;top:225px" width="6" height="9" viewBox="0 0 6 9" ><path d="M0 0 v9 l5.500-4.500z" fill="#000"/></svg>
<div style="left:509px;top:220px;width:32px;height:19px;border-bottom:1px solid #a0a0a0;border-right:1px solid #a0a0a0;"></div>
<div style="left:540px;top:220px;width:87px;height:19px;background:linear-gradient(180deg,#eaf5fd 0%,#d4eafa 100%);border:1px solid #84c8f0;box-shadow:inset 0 0 0 1px rgba(255,255,255,.6);"></div>
<div style="left:626px;top:220px;width:83px;height:19px;background:linear-gradient(180deg,#eaf5fd 0%,#d4eafa 100%);border:1px solid #84c8f0;box-shadow:inset 0 0 0 1px rgba(255,255,255,.6);"></div>
<div style="left:708px;top:220px;width:50px;height:19px;background:linear-gradient(180deg,#eaf5fd 0%,#d4eafa 100%);border:1px solid #84c8f0;border-right:none;box-shadow:inset 0 0 0 1px rgba(255,255,255,.6);"></div>
<span class="t" style="left:462px;top:223.5px;width:33px;text-align:right;letter-spacing:1.5px;font-size:10px;">1</span>
<span class="t" style="left:509px;top:222px;width:29px;text-align:right;letter-spacing:-0.125px;">2</span>
<span class="t" style="left:542px;top:222px;letter-spacing:-0.005px;">Robert</span>
<span class="t" style="left:628px;top:222px;letter-spacing:-0.375px;">Nelson</span>
<span class="t" style="left:710px;top:222px;letter-spacing:-0.844px;">VP</span>
<div style="left:462px;top:239px;width:36px;height:19px;background:linear-gradient(180deg,#fdfdfd 0%,#f2f2f2 50%,#dedede 100%);border-right:1px solid #a0a0a0;border-bottom:1px solid #a0a0a0;box-shadow:inset 1px 1px 0 #fff;"></div>
<div style="left:498px;top:239px;width:11px;height:19px;background:linear-gradient(180deg,#fdfdfd 0%,#f2f2f2 50%,#dedede 100%);border-right:1px solid #a0a0a0;border-bottom:1px solid #a0a0a0;box-shadow:inset 1px 1px 0 #fff;"></div>
<div style="left:509px;top:239px;width:32px;height:19px;border-bottom:1px solid #a0a0a0;border-right:1px solid #a0a0a0;"></div>
<div style="left:541px;top:239px;width:86px;height:19px;border-bottom:1px solid #a0a0a0;border-right:1px solid #a0a0a0;"></div>
<div style="left:627px;top:239px;width:82px;height:19px;border-bottom:1px solid #a0a0a0;border-right:1px solid #a0a0a0;"></div>
<div style="left:709px;top:239px;width:49px;height:19px;border-bottom:1px solid #a0a0a0;"></div>
<span class="t" style="left:462px;top:242.5px;width:33px;text-align:right;letter-spacing:1.5px;font-size:10px;">2</span>
<span class="t" style="left:509px;top:241px;width:29px;text-align:right;letter-spacing:-0.125px;">4</span>
<span class="t" style="left:542px;top:241px;letter-spacing:-0.350px;">Bruce</span>
<span class="t" style="left:628px;top:241px;letter-spacing:-0.166px;">Young</span>
<span class="t" style="left:710px;top:241px;letter-spacing:-0.531px;">Eng</span>
<div style="left:462px;top:258px;width:36px;height:19px;background:linear-gradient(180deg,#fdfdfd 0%,#f2f2f2 50%,#dedede 100%);border-right:1px solid #a0a0a0;border-bottom:1px solid #a0a0a0;box-shadow:inset 1px 1px 0 #fff;"></div>
<div style="left:498px;top:258px;width:11px;height:19px;background:linear-gradient(180deg,#fdfdfd 0%,#f2f2f2 50%,#dedede 100%);border-right:1px solid #a0a0a0;border-bottom:1px solid #a0a0a0;box-shadow:inset 1px 1px 0 #fff;"></div>
<div style="left:509px;top:258px;width:32px;height:19px;border-bottom:1px solid #a0a0a0;border-right:1px solid #a0a0a0;"></div>
<div style="left:541px;top:258px;width:86px;height:19px;border-bottom:1px solid #a0a0a0;border-right:1px solid #a0a0a0;"></div>
<div style="left:627px;top:258px;width:82px;height:19px;border-bottom:1px solid #a0a0a0;border-right:1px solid #a0a0a0;"></div>
<div style="left:709px;top:258px;width:49px;height:19px;border-bottom:1px solid #a0a0a0;"></div>
<span class="t" style="left:462px;top:261.5px;width:33px;text-align:right;letter-spacing:1.5px;font-size:10px;">3</span>
<span class="t" style="left:509px;top:260px;width:29px;text-align:right;letter-spacing:-0.125px;">5</span>
<span class="t" style="left:542px;top:260px;letter-spacing:-0.646px;">Kim</span>
<span class="t" style="left:628px;top:260px;letter-spacing:-0.054px;">Lambert</span>
<span class="t" style="left:710px;top:260px;letter-spacing:-0.531px;">Eng</span>
<div style="left:462px;top:277px;width:36px;height:19px;background:linear-gradient(180deg,#fdfdfd 0%,#f2f2f2 50%,#dedede 100%);border-right:1px solid #a0a0a0;border-bottom:1px solid #a0a0a0;box-shadow:inset 1px 1px 0 #fff;"></div>
<div style="left:498px;top:277px;width:11px;height:19px;background:linear-gradient(180deg,#fdfdfd 0%,#f2f2f2 50%,#dedede 100%);border-right:1px solid #a0a0a0;border-bottom:1px solid #a0a0a0;box-shadow:inset 1px 1px 0 #fff;"></div>
<div style="left:509px;top:277px;width:32px;height:19px;border-bottom:1px solid #a0a0a0;border-right:1px solid #a0a0a0;"></div>
<div style="left:541px;top:277px;width:86px;height:19px;border-bottom:1px solid #a0a0a0;border-right:1px solid #a0a0a0;"></div>
<div style="left:627px;top:277px;width:82px;height:19px;border-bottom:1px solid #a0a0a0;border-right:1px solid #a0a0a0;"></div>
<div style="left:709px;top:277px;width:49px;height:19px;border-bottom:1px solid #a0a0a0;"></div>
<span class="t" style="left:462px;top:280.5px;width:33px;text-align:right;letter-spacing:1.5px;font-size:10px;">4</span>
<span class="t" style="left:509px;top:279px;width:29px;text-align:right;letter-spacing:-0.125px;">8</span>
<span class="t" style="left:542px;top:279px;letter-spacing:-0.458px;">Leslie</span>
<span class="t" style="left:628px;top:279px;letter-spacing:-0.232px;">Johnson</span>
<span class="t" style="left:710px;top:279px;letter-spacing:-0.211px;">Mktg</span>
<div style="left:462px;top:296px;width:36px;height:19px;background:linear-gradient(180deg,#fdfdfd 0%,#f2f2f2 50%,#dedede 100%);border-right:1px solid #a0a0a0;border-bottom:1px solid #a0a0a0;box-shadow:inset 1px 1px 0 #fff;"></div>
<div style="left:498px;top:296px;width:11px;height:19px;background:linear-gradient(180deg,#fdfdfd 0%,#f2f2f2 50%,#dedede 100%);border-right:1px solid #a0a0a0;border-bottom:1px solid #a0a0a0;box-shadow:inset 1px 1px 0 #fff;"></div>
<div style="left:509px;top:296px;width:32px;height:19px;border-bottom:1px solid #a0a0a0;border-right:1px solid #a0a0a0;"></div>
<div style="left:541px;top:296px;width:86px;height:19px;border-bottom:1px solid #a0a0a0;border-right:1px solid #a0a0a0;"></div>
<div style="left:627px;top:296px;width:82px;height:19px;border-bottom:1px solid #a0a0a0;border-right:1px solid #a0a0a0;"></div>
<div style="left:709px;top:296px;width:49px;height:19px;border-bottom:1px solid #a0a0a0;"></div>
<span class="t" style="left:462px;top:299.5px;width:33px;text-align:right;letter-spacing:1.5px;font-size:10px;">5</span>
<span class="t" style="left:509px;top:298px;width:29px;text-align:right;letter-spacing:-0.125px;">9</span>
<span class="t" style="left:542px;top:298px;letter-spacing:-0.586px;">Phil</span>
<span class="t" style="left:628px;top:298px;letter-spacing:-0.031px;">Forest</span>
<span class="t" style="left:710px;top:298px;letter-spacing:-0.266px;">Mngr</span>
<div style="left:462px;top:315px;width:36px;height:19px;background:linear-gradient(180deg,#fdfdfd 0%,#f2f2f2 50%,#dedede 100%);border-right:1px solid #a0a0a0;border-bottom:1px solid #a0a0a0;box-shadow:inset 1px 1px 0 #fff;"></div>
<div style="left:498px;top:315px;width:11px;height:19px;background:linear-gradient(180deg,#fdfdfd 0%,#f2f2f2 50%,#dedede 100%);border-right:1px solid #a0a0a0;border-bottom:1px solid #a0a0a0;box-shadow:inset 1px 1px 0 #fff;"></div>
<div style="left:509px;top:315px;width:32px;height:19px;border-bottom:1px solid #a0a0a0;border-right:1px solid #a0a0a0;"></div>
<div style="left:541px;top:315px;width:86px;height:19px;border-bottom:1px solid #a0a0a0;border-right:1px solid #a0a0a0;"></div>
<div style="left:627px;top:315px;width:82px;height:19px;border-bottom:1px solid #a0a0a0;border-right:1px solid #a0a0a0;"></div>
<div style="left:709px;top:315px;width:49px;height:19px;border-bottom:1px solid #a0a0a0;"></div>
<span class="t" style="left:462px;top:318.5px;width:33px;text-align:right;letter-spacing:1.5px;font-size:10px;">6</span>
<span class="t" style="left:509px;top:317px;width:29px;text-align:right;letter-spacing:0.281px;">11</span>
<span class="t" style="left:542px;top:317px;letter-spacing:-0.406px;">K. J.</span>
<span class="t" style="left:628px;top:317px;letter-spacing:-0.018px;">Weston</span>
<span class="t" style="left:710px;top:317px;letter-spacing:-0.633px;">SRep</span>
<div style="left:462px;top:334px;width:36px;height:19px;background:linear-gradient(180deg,#fdfdfd 0%,#f2f2f2 50%,#dedede 100%);border-right:1px solid #a0a0a0;border-bottom:1px solid #a0a0a0;box-shadow:inset 1px 1px 0 #fff;"></div>
<div style="left:498px;top:334px;width:11px;height:19px;background:linear-gradient(180deg,#fdfdfd 0%,#f2f2f2 50%,#dedede 100%);border-right:1px solid #a0a0a0;border-bottom:1px solid #a0a0a0;box-shadow:inset 1px 1px 0 #fff;"></div>
<div style="left:509px;top:334px;width:32px;height:19px;border-bottom:1px solid #a0a0a0;border-right:1px solid #a0a0a0;"></div>
<div style="left:541px;top:334px;width:86px;height:19px;border-bottom:1px solid #a0a0a0;border-right:1px solid #a0a0a0;"></div>
<div style="left:627px;top:334px;width:82px;height:19px;border-bottom:1px solid #a0a0a0;border-right:1px solid #a0a0a0;"></div>
<div style="left:709px;top:334px;width:49px;height:19px;border-bottom:1px solid #a0a0a0;"></div>
<span class="t" style="left:462px;top:337.5px;width:33px;text-align:right;letter-spacing:1.5px;font-size:10px;">7</span>
<span class="t" style="left:509px;top:336px;width:29px;text-align:right;letter-spacing:-0.125px;">12</span>
<span class="t" style="left:542px;top:336px;letter-spacing:0.125px;">Terri</span>
<span class="t" style="left:628px;top:336px;letter-spacing:-0.458px;">Lee</span>
<span class="t" style="left:710px;top:336px;letter-spacing:-0.237px;">Admin</span>
<div style="left:462px;top:353px;width:36px;height:19px;background:linear-gradient(180deg,#fdfdfd 0%,#f2f2f2 50%,#dedede 100%);border-right:1px solid #a0a0a0;border-bottom:1px solid #a0a0a0;box-shadow:inset 1px 1px 0 #fff;"></div>
<div style="left:498px;top:353px;width:11px;height:19px;background:linear-gradient(180deg,#fdfdfd 0%,#f2f2f2 50%,#dedede 100%);border-right:1px solid #a0a0a0;border-bottom:1px solid #a0a0a0;box-shadow:inset 1px 1px 0 #fff;"></div>
<div style="left:509px;top:353px;width:32px;height:19px;border-bottom:1px solid #a0a0a0;border-right:1px solid #a0a0a0;"></div>
<div style="left:541px;top:353px;width:86px;height:19px;border-bottom:1px solid #a0a0a0;border-right:1px solid #a0a0a0;"></div>
<div style="left:627px;top:353px;width:82px;height:19px;border-bottom:1px solid #a0a0a0;border-right:1px solid #a0a0a0;"></div>
<div style="left:709px;top:353px;width:49px;height:19px;border-bottom:1px solid #a0a0a0;"></div>
<span class="t" style="left:462px;top:356.5px;width:33px;text-align:right;letter-spacing:1.5px;font-size:10px;">8</span>
<span class="t" style="left:509px;top:355px;width:29px;text-align:right;letter-spacing:-0.125px;">14</span>
<span class="t" style="left:542px;top:355px;letter-spacing:0.098px;">Stewart</span>
<span class="t" style="left:628px;top:355px;letter-spacing:-0.484px;">Hall</span>
<span class="t" style="left:710px;top:355px;letter-spacing:-0.306px;">Finan</span>
<div style="left:462px;top:372px;width:36px;height:19px;background:linear-gradient(180deg,#fdfdfd 0%,#f2f2f2 50%,#dedede 100%);border-right:1px solid #a0a0a0;border-bottom:1px solid #a0a0a0;box-shadow:inset 1px 1px 0 #fff;"></div>
<div style="left:498px;top:372px;width:11px;height:19px;background:linear-gradient(180deg,#fdfdfd 0%,#f2f2f2 50%,#dedede 100%);border-right:1px solid #a0a0a0;border-bottom:1px solid #a0a0a0;box-shadow:inset 1px 1px 0 #fff;"></div>
<div style="left:509px;top:372px;width:32px;height:19px;border-bottom:1px solid #a0a0a0;border-right:1px solid #a0a0a0;"></div>
<div style="left:541px;top:372px;width:86px;height:19px;border-bottom:1px solid #a0a0a0;border-right:1px solid #a0a0a0;"></div>
<div style="left:627px;top:372px;width:82px;height:19px;border-bottom:1px solid #a0a0a0;border-right:1px solid #a0a0a0;"></div>
<div style="left:709px;top:372px;width:49px;height:19px;border-bottom:1px solid #a0a0a0;"></div>
<span class="t" style="left:462px;top:375.5px;width:33px;text-align:right;letter-spacing:1.5px;font-size:10px;">9</span>
<span class="t" style="left:509px;top:374px;width:29px;text-align:right;letter-spacing:-0.125px;">15</span>
<span class="t" style="left:542px;top:374px;letter-spacing:-0.125px;">Katherine</span>
<span class="t" style="left:628px;top:374px;letter-spacing:-0.166px;">Young</span>
<span class="t" style="left:710px;top:374px;letter-spacing:-0.266px;">Mngr</span>
<div style="left:462px;top:391px;width:36px;height:19px;background:linear-gradient(180deg,#fdfdfd 0%,#f2f2f2 50%,#dedede 100%);border-right:1px solid #a0a0a0;border-bottom:1px solid #a0a0a0;box-shadow:inset 1px 1px 0 #fff;"></div>
<div style="left:498px;top:391px;width:11px;height:19px;background:linear-gradient(180deg,#fdfdfd 0%,#f2f2f2 50%,#dedede 100%);border-right:1px solid #a0a0a0;border-bottom:1px solid #a0a0a0;box-shadow:inset 1px 1px 0 #fff;"></div>
<div style="left:509px;top:391px;width:32px;height:19px;border-bottom:1px solid #a0a0a0;border-right:1px solid #a0a0a0;"></div>
<div style="left:541px;top:391px;width:86px;height:19px;border-bottom:1px solid #a0a0a0;border-right:1px solid #a0a0a0;"></div>
<div style="left:627px;top:391px;width:82px;height:19px;border-bottom:1px solid #a0a0a0;border-right:1px solid #a0a0a0;"></div>
<div style="left:709px;top:391px;width:49px;height:19px;border-bottom:1px solid #a0a0a0;"></div>
<span class="t" style="left:462px;top:394.5px;width:33px;text-align:right;letter-spacing:1.5px;font-size:10px;">10</span>
<span class="t" style="left:509px;top:393px;width:29px;text-align:right;letter-spacing:-0.125px;">20</span>
<span class="t" style="left:542px;top:393px;letter-spacing:-0.331px;">Chris</span>
<span class="t" style="left:628px;top:393px;letter-spacing:-0.284px;">Papadopoulos</span>
<span class="t" style="left:710px;top:393px;letter-spacing:-0.266px;">Mngr</span>
<div style="left:462px;top:410px;width:36px;height:19px;background:linear-gradient(180deg,#fdfdfd 0%,#f2f2f2 50%,#dedede 100%);border-right:1px solid #a0a0a0;border-bottom:1px solid #a0a0a0;box-shadow:inset 1px 1px 0 #fff;"></div>
<div style="left:498px;top:410px;width:11px;height:19px;background:linear-gradient(180deg,#fdfdfd 0%,#f2f2f2 50%,#dedede 100%);border-right:1px solid #a0a0a0;border-bottom:1px solid #a0a0a0;box-shadow:inset 1px 1px 0 #fff;"></div>
<div style="left:509px;top:410px;width:32px;height:19px;border-bottom:1px solid #a0a0a0;border-right:1px solid #a0a0a0;"></div>
<div style="left:541px;top:410px;width:86px;height:19px;border-bottom:1px solid #a0a0a0;border-right:1px solid #a0a0a0;"></div>
<div style="left:627px;top:410px;width:82px;height:19px;border-bottom:1px solid #a0a0a0;border-right:1px solid #a0a0a0;"></div>
<div style="left:709px;top:410px;width:49px;height:19px;border-bottom:1px solid #a0a0a0;"></div>
<span class="t" style="left:462px;top:413.5px;width:33px;text-align:right;letter-spacing:1.5px;font-size:10px;">11</span>
<span class="t" style="left:509px;top:412px;width:29px;text-align:right;letter-spacing:-0.125px;">24</span>
<span class="t" style="left:542px;top:412px;letter-spacing:-0.164px;">Pete</span>
<span class="t" style="left:628px;top:412px;letter-spacing:-0.260px;">Fisher</span>
<span class="t" style="left:710px;top:412px;letter-spacing:-0.531px;">Eng</span>
<div style="left:462px;top:429px;width:36px;height:19px;background:linear-gradient(180deg,#fdfdfd 0%,#f2f2f2 50%,#dedede 100%);border-right:1px solid #a0a0a0;border-bottom:1px solid #a0a0a0;box-shadow:inset 1px 1px 0 #fff;"></div>
<div style="left:498px;top:429px;width:11px;height:19px;background:linear-gradient(180deg,#fdfdfd 0%,#f2f2f2 50%,#dedede 100%);border-right:1px solid #a0a0a0;border-bottom:1px solid #a0a0a0;box-shadow:inset 1px 1px 0 #fff;"></div>
<div style="left:509px;top:429px;width:32px;height:19px;border-bottom:1px solid #a0a0a0;border-right:1px solid #a0a0a0;"></div>
<div style="left:541px;top:429px;width:86px;height:19px;border-bottom:1px solid #a0a0a0;border-right:1px solid #a0a0a0;"></div>
<div style="left:627px;top:429px;width:82px;height:19px;border-bottom:1px solid #a0a0a0;border-right:1px solid #a0a0a0;"></div>
<div style="left:709px;top:429px;width:49px;height:19px;border-bottom:1px solid #a0a0a0;"></div>
<span class="t" style="left:462px;top:432.5px;width:33px;text-align:right;letter-spacing:1.5px;font-size:10px;">12</span>
<span class="t" style="left:509px;top:431px;width:29px;text-align:right;letter-spacing:-0.125px;">28</span>
<span class="t" style="left:542px;top:431px;letter-spacing:-0.198px;">Ann</span>
<span class="t" style="left:628px;top:431px;letter-spacing:-0.151px;">Bennet</span>
<span class="t" style="left:710px;top:431px;letter-spacing:-0.237px;">Admin</span>
<div style="left:462px;top:448px;width:36px;height:19px;background:linear-gradient(180deg,#fdfdfd 0%,#f2f2f2 50%,#dedede 100%);border-right:1px solid #a0a0a0;border-bottom:1px solid #a0a0a0;box-shadow:inset 1px 1px 0 #fff;"></div>
<div style="left:498px;top:448px;width:11px;height:19px;background:linear-gradient(180deg,#fdfdfd 0%,#f2f2f2 50%,#dedede 100%);border-right:1px solid #a0a0a0;border-bottom:1px solid #a0a0a0;box-shadow:inset 1px 1px 0 #fff;"></div>
<div style="left:509px;top:448px;width:32px;height:19px;border-bottom:1px solid #a0a0a0;border-right:1px solid #a0a0a0;"></div>
<div style="left:541px;top:448px;width:86px;height:19px;border-bottom:1px solid #a0a0a0;border-right:1px solid #a0a0a0;"></div>
<div style="left:627px;top:448px;width:82px;height:19px;border-bottom:1px solid #a0a0a0;border-right:1px solid #a0a0a0;"></div>
<div style="left:709px;top:448px;width:49px;height:19px;border-bottom:1px solid #a0a0a0;"></div>
<span class="t" style="left:462px;top:451.5px;width:33px;text-align:right;letter-spacing:1.5px;font-size:10px;">13</span>
<span class="t" style="left:509px;top:450px;width:29px;text-align:right;letter-spacing:-0.125px;">29</span>
<span class="t" style="left:542px;top:450px;letter-spacing:-0.194px;">Roger</span>
<span class="t" style="left:628px;top:450px;letter-spacing:-0.418px;">De Souza</span>
<span class="t" style="left:710px;top:450px;letter-spacing:-0.531px;">Eng</span>
<div style="left:462px;top:467px;width:36px;height:19px;background:linear-gradient(180deg,#fdfdfd 0%,#f2f2f2 50%,#dedede 100%);border-right:1px solid #a0a0a0;border-bottom:1px solid #a0a0a0;box-shadow:inset 1px 1px 0 #fff;"></div>
<div style="left:498px;top:467px;width:11px;height:19px;background:linear-gradient(180deg,#fdfdfd 0%,#f2f2f2 50%,#dedede 100%);border-right:1px solid #a0a0a0;border-bottom:1px solid #a0a0a0;box-shadow:inset 1px 1px 0 #fff;"></div>
<div style="left:509px;top:467px;width:32px;height:19px;border-bottom:1px solid #a0a0a0;border-right:1px solid #a0a0a0;"></div>
<div style="left:541px;top:467px;width:86px;height:19px;border-bottom:1px solid #a0a0a0;border-right:1px solid #a0a0a0;"></div>
<div style="left:627px;top:467px;width:82px;height:19px;border-bottom:1px solid #a0a0a0;border-right:1px solid #a0a0a0;"></div>
<div style="left:709px;top:467px;width:49px;height:19px;border-bottom:1px solid #a0a0a0;"></div>
<span class="t" style="left:462px;top:470.5px;width:33px;text-align:right;letter-spacing:1.5px;font-size:10px;">14</span>
<span class="t" style="left:509px;top:469px;width:29px;text-align:right;letter-spacing:-0.125px;">34</span>
<span class="t" style="left:542px;top:469px;letter-spacing:0.013px;">Janet</span>
<span class="t" style="left:628px;top:469px;letter-spacing:-0.362px;">Baldwin</span>
<span class="t" style="left:710px;top:469px;letter-spacing:-0.506px;">Sales</span>
<div style="left:462px;top:486px;width:36px;height:19px;background:linear-gradient(180deg,#fdfdfd 0%,#f2f2f2 50%,#dedede 100%);border-right:1px solid #a0a0a0;border-bottom:1px solid #a0a0a0;box-shadow:inset 1px 1px 0 #fff;"></div>
<div style="left:498px;top:486px;width:11px;height:19px;background:linear-gradient(180deg,#fdfdfd 0%,#f2f2f2 50%,#dedede 100%);border-right:1px solid #a0a0a0;border-bottom:1px solid #a0a0a0;box-shadow:inset 1px 1px 0 #fff;"></div>
<div style="left:509px;top:486px;width:32px;height:19px;border-bottom:1px solid #a0a0a0;border-right:1px solid #a0a0a0;"></div>
<div style="left:541px;top:486px;width:86px;height:19px;border-bottom:1px solid #a0a0a0;border-right:1px solid #a0a0a0;"></div>
<div style="left:627px;top:486px;width:82px;height:19px;border-bottom:1px solid #a0a0a0;border-right:1px solid #a0a0a0;"></div>
<div style="left:709px;top:486px;width:49px;height:19px;border-bottom:1px solid #a0a0a0;"></div>
<span class="t" style="left:462px;top:489.5px;width:33px;text-align:right;letter-spacing:1.5px;font-size:10px;">15</span>
<span class="t" style="left:509px;top:488px;width:29px;text-align:right;letter-spacing:-0.125px;">36</span>
<span class="t" style="left:542px;top:488px;letter-spacing:-0.194px;">Roger</span>
<span class="t" style="left:628px;top:488px;letter-spacing:-0.385px;">Reeves</span>
<span class="t" style="left:710px;top:488px;letter-spacing:-0.506px;">Sales</span>
<div style="left:462px;top:505px;width:36px;height:19px;background:linear-gradient(180deg,#fdfdfd 0%,#f2f2f2 50%,#dedede 100%);border-right:1px solid #a0a0a0;border-bottom:1px solid #a0a0a0;box-shadow:inset 1px 1px 0 #fff;"></div>
<div style="left:498px;top:505px;width:11px;height:19px;background:linear-gradient(180deg,#fdfdfd 0%,#f2f2f2 50%,#dedede 100%);border-right:1px solid #a0a0a0;border-bottom:1px solid #a0a0a0;box-shadow:inset 1px 1px 0 #fff;"></div>
<div style="left:509px;top:505px;width:32px;height:19px;border-bottom:1px solid #a0a0a0;border-right:1px solid #a0a0a0;"></div>
<div style="left:541px;top:505px;width:86px;height:19px;border-bottom:1px solid #a0a0a0;border-right:1px solid #a0a0a0;"></div>
<div style="left:627px;top:505px;width:82px;height:19px;border-bottom:1px solid #a0a0a0;border-right:1px solid #a0a0a0;"></div>
<div style="left:709px;top:505px;width:49px;height:19px;border-bottom:1px solid #a0a0a0;"></div>
<span class="t" style="left:462px;top:508.5px;width:33px;text-align:right;letter-spacing:1.5px;font-size:10px;">16</span>
<span class="t" style="left:509px;top:507px;width:29px;text-align:right;letter-spacing:-0.125px;">37</span>
<span class="t" style="left:542px;top:507px;letter-spacing:-0.375px;">Willie</span>
<span class="t" style="left:628px;top:507px;letter-spacing:-0.174px;">Stansbury</span>
<span class="t" style="left:710px;top:507px;letter-spacing:-0.531px;">Eng</span>
<div style="left:462px;top:524px;width:36px;height:19px;background:linear-gradient(180deg,#fdfdfd 0%,#f2f2f2 50%,#dedede 100%);border-right:1px solid #a0a0a0;border-bottom:1px solid #a0a0a0;box-shadow:inset 1px 1px 0 #fff;"></div>
<div style="left:498px;top:524px;width:11px;height:19px;background:linear-gradient(180deg,#fdfdfd 0%,#f2f2f2 50%,#dedede 100%);border-right:1px solid #a0a0a0;border-bottom:1px solid #a0a0a0;box-shadow:inset 1px 1px 0 #fff;"></div>
<div style="left:509px;top:524px;width:32px;height:19px;border-bottom:1px solid #a0a0a0;border-right:1px solid #a0a0a0;"></div>
<div style="left:541px;top:524px;width:86px;height:19px;border-bottom:1px solid #a0a0a0;border-right:1px solid #a0a0a0;"></div>
<div style="left:627px;top:524px;width:82px;height:19px;border-bottom:1px solid #a0a0a0;border-right:1px solid #a0a0a0;"></div>
<div style="left:709px;top:524px;width:49px;height:19px;border-bottom:1px solid #a0a0a0;"></div>
<span class="t" style="left:462px;top:527.5px;width:33px;text-align:right;letter-spacing:1.5px;font-size:10px;">17</span>
<span class="t" style="left:509px;top:526px;width:29px;text-align:right;letter-spacing:-0.125px;">44</span>
<span class="t" style="left:542px;top:526px;letter-spacing:-0.458px;">Leslie</span>
<span class="t" style="left:628px;top:526px;letter-spacing:-0.369px;">Phong</span>
<span class="t" style="left:710px;top:526px;letter-spacing:-0.531px;">Eng</span>
<div style="left:462px;top:543px;width:36px;height:19px;background:linear-gradient(180deg,#fdfdfd 0%,#f2f2f2 50%,#dedede 100%);border-right:1px solid #a0a0a0;border-bottom:1px solid #a0a0a0;box-shadow:inset 1px 1px 0 #fff;"></div>
<div style="left:498px;top:543px;width:11px;height:19px;background:linear-gradient(180deg,#fdfdfd 0%,#f2f2f2 50%,#dedede 100%);border-right:1px solid #a0a0a0;border-bottom:1px solid #a0a0a0;box-shadow:inset 1px 1px 0 #fff;"></div>
<div style="left:509px;top:543px;width:32px;height:19px;border-bottom:1px solid #a0a0a0;border-right:1px solid #a0a0a0;"></div>
<div style="left:541px;top:543px;width:86px;height:19px;border-bottom:1px solid #a0a0a0;border-right:1px solid #a0a0a0;"></div>
<div style="left:627px;top:543px;width:82px;height:19px;border-bottom:1px solid #a0a0a0;border-right:1px solid #a0a0a0;"></div>
<div style="left:709px;top:543px;width:49px;height:19px;border-bottom:1px solid #a0a0a0;"></div>
<span class="t" style="left:462px;top:546.5px;width:33px;text-align:right;letter-spacing:1.5px;font-size:10px;">18</span>
<span class="t" style="left:509px;top:545px;width:29px;text-align:right;letter-spacing:-0.125px;">45</span>
<span class="t" style="left:542px;top:545px;letter-spacing:-0.319px;">Ashok</span>
<span class="t" style="left:628px;top:545px;letter-spacing:-0.103px;">Ramanathan</span>
<span class="t" style="left:710px;top:545px;letter-spacing:-0.531px;">Eng</span>
<div style="left:462px;top:562px;width:36px;height:19px;background:linear-gradient(180deg,#fdfdfd 0%,#f2f2f2 50%,#dedede 100%);border-right:1px solid #a0a0a0;border-bottom:1px solid #a0a0a0;box-shadow:inset 1px 1px 0 #fff;"></div>
<div style="left:498px;top:562px;width:11px;height:19px;background:linear-gradient(180deg,#fdfdfd 0%,#f2f2f2 50%,#dedede 100%);border-right:1px solid #a0a0a0;border-bottom:1px solid #a0a0a0;box-shadow:inset 1px 1px 0 #fff;"></div>
<div style="left:509px;top:562px;width:32px;height:19px;border-bottom:1px solid #a0a0a0;border-right:1px solid #a0a0a0;"></div>
<div style="left:541px;top:562px;width:86px;height:19px;border-bottom:1px solid #a0a0a0;border-right:1px solid #a0a0a0;"></div>
<div style="left:627px;top:562px;width:82px;height:19px;border-bottom:1px solid #a0a0a0;border-right:1px solid #a0a0a0;"></div>
<div style="left:709px;top:562px;width:49px;height:19px;border-bottom:1px solid #a0a0a0;"></div>
<span class="t" style="left:462px;top:565.5px;width:33px;text-align:right;letter-spacing:1.5px;font-size:10px;">19</span>
<span class="t" style="left:509px;top:564px;width:29px;text-align:right;letter-spacing:-0.125px;">46</span>
<span class="t" style="left:542px;top:564px;letter-spacing:0.104px;">Walter</span>
<span class="t" style="left:628px;top:564px;letter-spacing:-0.148px;">Steadman</span>
<span class="t" style="left:710px;top:564px;letter-spacing:-0.740px;">CFO</span>
<div style="left:462px;top:581px;width:36px;height:19px;background:linear-gradient(180deg,#fdfdfd 0%,#f2f2f2 50%,#dedede 100%);border-right:1px solid #a0a0a0;border-bottom:1px solid #a0a0a0;box-shadow:inset 1px 1px 0 #fff;"></div>
<div style="left:498px;top:581px;width:11px;height:19px;background:linear-gradient(180deg,#fdfdfd 0%,#f2f2f2 50%,#dedede 100%);border-right:1px solid #a0a0a0;border-bottom:1px solid #a0a0a0;box-shadow:inset 1px 1px 0 #fff;"></div>
<div style="left:509px;top:581px;width:32px;height:19px;border-bottom:1px solid #a0a0a0;border-right:1px solid #a0a0a0;"></div>
<div style="left:541px;top:581px;width:86px;height:19px;border-bottom:1px solid #a0a0a0;border-right:1px solid #a0a0a0;"></div>
<div style="left:627px;top:581px;width:82px;height:19px;border-bottom:1px solid #a0a0a0;border-right:1px solid #a0a0a0;"></div>
<div style="left:709px;top:581px;width:49px;height:19px;border-bottom:1px solid #a0a0a0;"></div>
<span class="t" style="left:462px;top:584.5px;width:33px;text-align:right;letter-spacing:1.5px;font-size:10px;">20</span>
<span class="t" style="left:509px;top:583px;width:29px;text-align:right;letter-spacing:-0.125px;">52</span>
<span class="t" style="left:542px;top:583px;letter-spacing:-0.256px;">Carol</span>
<span class="t" style="left:628px;top:583px;letter-spacing:-0.038px;">Nordstrom</span>
<span class="t" style="left:710px;top:583px;letter-spacing:-0.711px;">PRel</span>
<div style="left:462px;top:600px;width:36px;height:19px;background:linear-gradient(180deg,#fdfdfd 0%,#f2f2f2 50%,#dedede 100%);border-right:1px solid #a0a0a0;border-bottom:1px solid #a0a0a0;box-shadow:inset 1px 1px 0 #fff;"></div>
<div style="left:498px;top:600px;width:11px;height:19px;background:linear-gradient(180deg,#fdfdfd 0%,#f2f2f2 50%,#dedede 100%);border-right:1px solid #a0a0a0;border-bottom:1px solid #a0a0a0;box-shadow:inset 1px 1px 0 #fff;"></div>
<div style="left:509px;top:600px;width:32px;height:19px;border-bottom:1px solid #a0a0a0;border-right:1px solid #a0a0a0;"></div>
<div style="left:541px;top:600px;width:86px;height:19px;border-bottom:1px solid #a0a0a0;border-right:1px solid #a0a0a0;"></div>
<div style="left:627px;top:600px;width:82px;height:19px;border-bottom:1px solid #a0a0a0;border-right:1px solid #a0a0a0;"></div>
<div style="left:709px;top:600px;width:49px;height:19px;border-bottom:1px solid #a0a0a0;"></div>
<span class="t" style="left:462px;top:603.5px;width:33px;text-align:right;letter-spacing:1.5px;font-size:10px;">21</span>
<span class="t" style="left:509px;top:602px;width:29px;text-align:right;letter-spacing:-0.125px;">61</span>
<span class="t" style="left:542px;top:602px;letter-spacing:-0.469px;">Luke</span>
<span class="t" style="left:628px;top:602px;letter-spacing:-0.325px;">Leung</span>
<span class="t" style="left:710px;top:602px;letter-spacing:-0.633px;">SRep</span>
<div style="left:462px;top:619px;width:36px;height:19px;background:linear-gradient(180deg,#fdfdfd 0%,#f2f2f2 50%,#dedede 100%);border-right:1px solid #a0a0a0;border-bottom:1px solid #a0a0a0;box-shadow:inset 1px 1px 0 #fff;"></div>
<div style="left:498px;top:619px;width:11px;height:19px;background:linear-gradient(180deg,#fdfdfd 0%,#f2f2f2 50%,#dedede 100%);border-right:1px solid #a0a0a0;border-bottom:1px solid #a0a0a0;box-shadow:inset 1px 1px 0 #fff;"></div>
<div style="left:509px;top:619px;width:32px;height:19px;border-bottom:1px solid #a0a0a0;border-right:1px solid #a0a0a0;"></div>
<div style="left:541px;top:619px;width:86px;height:19px;border-bottom:1px solid #a0a0a0;border-right:1px solid #a0a0a0;"></div>
<div style="left:627px;top:619px;width:82px;height:19px;border-bottom:1px solid #a0a0a0;border-right:1px solid #a0a0a0;"></div>
<div style="left:709px;top:619px;width:49px;height:19px;border-bottom:1px solid #a0a0a0;"></div>
<span class="t" style="left:462px;top:622.5px;width:33px;text-align:right;letter-spacing:1.5px;font-size:10px;">22</span>
<span class="t" style="left:509px;top:621px;width:29px;text-align:right;letter-spacing:-0.125px;">65</span>
<span class="t" style="left:542px;top:621px;letter-spacing:-0.221px;">Sue Anne</span>
<span class="t" style="left:628px;top:621px;letter-spacing:-0.335px;">O&#x27;Brien</span>
<span class="t" style="left:710px;top:621px;letter-spacing:-0.237px;">Admin</span>
<div style="left:462px;top:638px;width:36px;height:19px;background:linear-gradient(180deg,#fdfdfd 0%,#f2f2f2 50%,#dedede 100%);border-right:1px solid #a0a0a0;border-bottom:1px solid #a0a0a0;box-shadow:inset 1px 1px 0 #fff;"></div>
<div style="left:498px;top:638px;width:11px;height:19px;background:linear-gradient(180deg,#fdfdfd 0%,#f2f2f2 50%,#dedede 100%);border-right:1px solid #a0a0a0;border-bottom:1px solid #a0a0a0;box-shadow:inset 1px 1px 0 #fff;"></div>
<div style="left:509px;top:638px;width:32px;height:19px;border-bottom:1px solid #a0a0a0;border-right:1px solid #a0a0a0;"></div>
<div style="left:541px;top:638px;width:86px;height:19px;border-bottom:1px solid #a0a0a0;border-right:1px solid #a0a0a0;"></div>
<div style="left:627px;top:638px;width:82px;height:19px;border-bottom:1px solid #a0a0a0;border-right:1px solid #a0a0a0;"></div>
<div style="left:709px;top:638px;width:49px;height:19px;border-bottom:1px solid #a0a0a0;"></div>
<span class="t" style="left:462px;top:641.5px;width:33px;text-align:right;letter-spacing:1.5px;font-size:10px;">23</span>
<span class="t" style="left:509px;top:640px;width:29px;text-align:right;letter-spacing:-0.125px;">71</span>
<span class="t" style="left:542px;top:640px;letter-spacing:-0.131px;">Jennifer M.</span>
<span class="t" style="left:628px;top:640px;letter-spacing:-0.286px;">Burbank</span>
<span class="t" style="left:710px;top:640px;letter-spacing:-0.531px;">Eng</span>
<div style="left:462px;top:657px;width:36px;height:19px;background:linear-gradient(180deg,#fdfdfd 0%,#f2f2f2 50%,#dedede 100%);border-right:1px solid #a0a0a0;border-bottom:1px solid #a0a0a0;box-shadow:inset 1px 1px 0 #fff;"></div>
<div style="left:498px;top:657px;width:11px;height:19px;background:linear-gradient(180deg,#fdfdfd 0%,#f2f2f2 50%,#dedede 100%);border-right:1px solid #a0a0a0;border-bottom:1px solid #a0a0a0;box-shadow:inset 1px 1px 0 #fff;"></div>
<div style="left:509px;top:657px;width:32px;height:19px;border-bottom:1px solid #a0a0a0;border-right:1px solid #a0a0a0;"></div>
<div style="left:541px;top:657px;width:86px;height:19px;border-bottom:1px solid #a0a0a0;border-right:1px solid #a0a0a0;"></div>
<div style="left:627px;top:657px;width:82px;height:19px;border-bottom:1px solid #a0a0a0;border-right:1px solid #a0a0a0;"></div>
<div style="left:709px;top:657px;width:49px;height:19px;border-bottom:1px solid #a0a0a0;"></div>
<span class="t" style="left:462px;top:660.5px;width:33px;text-align:right;letter-spacing:1.5px;font-size:10px;">24</span>
<span class="t" style="left:509px;top:659px;width:29px;text-align:right;letter-spacing:-0.125px;">72</span>
<span class="t" style="left:542px;top:659px;letter-spacing:-0.330px;">Claudia</span>
<span class="t" style="left:628px;top:659px;letter-spacing:-0.125px;">Sutherland</span>
<span class="t" style="left:710px;top:659px;letter-spacing:-0.633px;">SRep</span>
<div style="left:462px;top:676px;width:36px;height:19px;background:linear-gradient(180deg,#fdfdfd 0%,#f2f2f2 50%,#dedede 100%);border-right:1px solid #a0a0a0;border-bottom:1px solid #a0a0a0;box-shadow:inset 1px 1px 0 #fff;"></div>
<div style="left:498px;top:676px;width:11px;height:19px;background:linear-gradient(180deg,#fdfdfd 0%,#f2f2f2 50%,#dedede 100%);border-right:1px solid #a0a0a0;border-bottom:1px solid #a0a0a0;box-shadow:inset 1px 1px 0 #fff;"></div>
<div style="left:509px;top:676px;width:32px;height:19px;border-bottom:1px solid #a0a0a0;border-right:1px solid #a0a0a0;"></div>
<div style="left:541px;top:676px;width:86px;height:19px;border-bottom:1px solid #a0a0a0;border-right:1px solid #a0a0a0;"></div>
<div style="left:627px;top:676px;width:82px;height:19px;border-bottom:1px solid #a0a0a0;border-right:1px solid #a0a0a0;"></div>
<div style="left:709px;top:676px;width:49px;height:19px;border-bottom:1px solid #a0a0a0;"></div>
<span class="t" style="left:462px;top:679.5px;width:33px;text-align:right;letter-spacing:1.5px;font-size:10px;">25</span>
<span class="t" style="left:509px;top:678px;width:29px;text-align:right;letter-spacing:-0.125px;">83</span>
<span class="t" style="left:542px;top:678px;letter-spacing:-0.328px;">Dana</span>
<span class="t" style="left:628px;top:678px;letter-spacing:-0.443px;">Bishop</span>
<span class="t" style="left:710px;top:678px;letter-spacing:-0.531px;">Eng</span>
<div style="left:462px;top:695px;width:36px;height:19px;background:linear-gradient(180deg,#fdfdfd 0%,#f2f2f2 50%,#dedede 100%);border-right:1px solid #a0a0a0;border-bottom:1px solid #a0a0a0;box-shadow:inset 1px 1px 0 #fff;"></div>
<div style="left:498px;top:695px;width:11px;height:19px;background:linear-gradient(180deg,#fdfdfd 0%,#f2f2f2 50%,#dedede 100%);border-right:1px solid #a0a0a0;border-bottom:1px solid #a0a0a0;box-shadow:inset 1px 1px 0 #fff;"></div>
<div style="left:509px;top:695px;width:32px;height:19px;border-bottom:1px solid #a0a0a0;border-right:1px solid #a0a0a0;"></div>
<div style="left:541px;top:695px;width:86px;height:19px;border-bottom:1px solid #a0a0a0;border-right:1px solid #a0a0a0;"></div>
<div style="left:627px;top:695px;width:82px;height:19px;border-bottom:1px solid #a0a0a0;border-right:1px solid #a0a0a0;"></div>
<div style="left:709px;top:695px;width:49px;height:19px;border-bottom:1px solid #a0a0a0;"></div>
<span class="t" style="left:462px;top:698.5px;width:33px;text-align:right;letter-spacing:1.5px;font-size:10px;">26</span>
<span class="t" style="left:509px;top:697px;width:29px;text-align:right;letter-spacing:-0.125px;">85</span>
<span class="t" style="left:542px;top:697px;letter-spacing:-0.415px;">Mary S.</span>
<span class="t" style="left:628px;top:697px;letter-spacing:-0.406px;">MacDonald</span>
<span class="t" style="left:710px;top:697px;letter-spacing:-0.844px;">VP</span>
<div style="left:462px;top:714px;width:36px;height:19px;background:linear-gradient(180deg,#fdfdfd 0%,#f2f2f2 50%,#dedede 100%);border-right:1px solid #a0a0a0;border-bottom:1px solid #a0a0a0;box-shadow:inset 1px 1px 0 #fff;"></div>
<div style="left:498px;top:714px;width:11px;height:19px;background:linear-gradient(180deg,#fdfdfd 0%,#f2f2f2 50%,#dedede 100%);border-right:1px solid #a0a0a0;border-bottom:1px solid #a0a0a0;box-shadow:inset 1px 1px 0 #fff;"></div>
<div style="left:509px;top:714px;width:32px;height:19px;border-bottom:1px solid #a0a0a0;border-right:1px solid #a0a0a0;"></div>
<div style="left:541px;top:714px;width:86px;height:19px;border-bottom:1px solid #a0a0a0;border-right:1px solid #a0a0a0;"></div>
<div style="left:627px;top:714px;width:82px;height:19px;border-bottom:1px solid #a0a0a0;border-right:1px solid #a0a0a0;"></div>
<div style="left:709px;top:714px;width:49px;height:19px;border-bottom:1px solid #a0a0a0;"></div>
<span class="t" style="left:462px;top:717.5px;width:33px;text-align:right;letter-spacing:1.5px;font-size:10px;">27</span>
<span class="t" style="left:509px;top:716px;width:29px;text-align:right;letter-spacing:-0.125px;">94</span>
<span class="t" style="left:542px;top:716px;letter-spacing:-0.362px;">Randy</span>
<span class="t" style="left:628px;top:716px;letter-spacing:-0.363px;">Williams</span>
<span class="t" style="left:710px;top:716px;letter-spacing:-0.266px;">Mngr</span>
<div style="left:462px;top:733px;width:36px;height:18px;background:linear-gradient(180deg,#fdfdfd 0%,#f2f2f2 50%,#dedede 100%);border-right:1px solid #a0a0a0;border-bottom:1px solid #a0a0a0;box-shadow:inset 1px 1px 0 #fff;"></div>
<div style="left:498px;top:733px;width:11px;height:18px;background:linear-gradient(180deg,#fdfdfd 0%,#f2f2f2 50%,#dedede 100%);border-right:1px solid #a0a0a0;border-bottom:1px solid #a0a0a0;box-shadow:inset 1px 1px 0 #fff;"></div>
<div style="left:509px;top:733px;width:32px;height:18px;border-bottom:1px solid #a0a0a0;border-right:1px solid #a0a0a0;"></div>
<div style="left:541px;top:733px;width:86px;height:18px;border-bottom:1px solid #a0a0a0;border-right:1px solid #a0a0a0;"></div>
<div style="left:627px;top:733px;width:82px;height:18px;border-bottom:1px solid #a0a0a0;border-right:1px solid #a0a0a0;"></div>
<div style="left:709px;top:733px;width:49px;height:18px;border-bottom:1px solid #a0a0a0;"></div>
<span class="t" style="left:462px;top:736.5px;width:33px;text-align:right;letter-spacing:1.5px;font-size:10px;">28</span>
<span class="t" style="left:509px;top:735px;width:29px;text-align:right;letter-spacing:-0.125px;">105</span>
<span class="t" style="left:542px;top:735px;letter-spacing:-0.309px;">Oliver H.</span>
<span class="t" style="left:628px;top:735px;letter-spacing:-0.250px;">Bender</span>
<span class="t" style="left:710px;top:735px;letter-spacing:-0.948px;">CEO</span>
<div style="left:758px;top:168px;width:17px;height:581px;background:#f0f0f0;border-left:1px solid #e4e4e4;"></div>
<svg style="left:758px;top:167px" width="18" height="18" viewBox="0 0 18 18" ><path d="M5 11.500 l4-4.500 l4 4.500 l-1.200 0 l-2.800-2.600 l-2.800 2.600z" fill="#404040"/><path d="M6.500 11.300 l2.500-2.500 l2.500 2.500z" fill="#606060"/></svg>
<svg style="left:758px;top:731px" width="18" height="18" viewBox="0 0 18 18" ><path d="M5.500 7 h7 l-3.500 4z" fill="#505050"/></svg>
<div style="left:759px;top:186px;width:15px;height:350px;border:1px solid #979797;border-radius:2px;background:linear-gradient(90deg,#f2f2f2 0%,#e8e8e8 45%,#d2d2d6 50%,#c2c2c6 100%);box-shadow:inset 0 0 0 1px rgba(255,255,255,.6);"></div>
<svg style="left:763px;top:356px" width="8" height="9" viewBox="0 0 8 9" ><path d="M0 1 h8 M0 4 h8 M0 7 h8" stroke="#606060" stroke-width="1"/><path d="M0 2 h8 M0 5 h8 M0 8 h8" stroke="#fff" stroke-width="1"/></svg>
<div style="left:462px;top:749px;width:296px;height:17px;background:#f0f0f0;"></div>
<div style="left:758px;top:749px;width:17px;height:17px;background:#f0f0f0;"></div>
<svg style="left:462px;top:750px" width="16" height="15" viewBox="0 0 16 15" ><path d="M10 4 v7 l-4-3.500z" fill="#303030"/></svg>
<svg style="left:742px;top:750px" width="16" height="15" viewBox="0 0 16 15" ><path d="M6 4 v7 l4-3.500z" fill="#303030"/></svg>
<div style="left:480px;top:750px;width:106px;height:15px;border:1px solid #979797;border-radius:2px;background:linear-gradient(180deg,#f4f4f4 0%,#e4e4e4 40%,#cfcfcf 60%,#c8c8c8 100%);box-shadow:inset 0 0 0 1px rgba(255,255,255,.6);"></div>
<svg style="left:529px;top:754px" width="9" height="8" viewBox="0 0 9 8" ><path d="M1 0 v8 M4 0 v8 M7 0 v8" stroke="#606060" stroke-width="1"/><path d="M2 0 v8 M5 0 v8 M8 0 v8" stroke="#fff" stroke-width="1"/></svg>
<div style="left:461px;top:767px;width:315px;height:19px;background:#c3d5f7;"></div>
<div style="left:461px;top:767px;width:172px;height:19px;background:linear-gradient(180deg,#dde8fb 0%,#cfdef9 40%,#b3cbf5 70%,#8fb1ea 100%);border:1px solid #7c9edd;border-bottom-color:#6a8cd0;box-shadow:inset 1px 1px 0 rgba(255,255,255,.55);"></div>
<div style="left:635px;top:767px;width:103px;height:19px;background:linear-gradient(180deg,#dde8fb 0%,#cfdef9 40%,#b3cbf5 70%,#8fb1ea 100%);border:1px solid #7c9edd;border-bottom-color:#6a8cd0;box-shadow:inset 1px 1px 0 rgba(255,255,255,.55);"></div>
<div style="left:740px;top:767px;width:36px;height:19px;background:linear-gradient(180deg,#dde8fb 0%,#cfdef9 40%,#b3cbf5 70%,#8fb1ea 100%);border:1px solid #7c9edd;border-bottom-color:#6a8cd0;box-shadow:inset 1px 1px 0 rgba(255,255,255,.55);"></div>
<span class="t" style="left:464px;top:770px;letter-spacing:0.007px;">Records fetched: 42/42</span>
</body></html>
